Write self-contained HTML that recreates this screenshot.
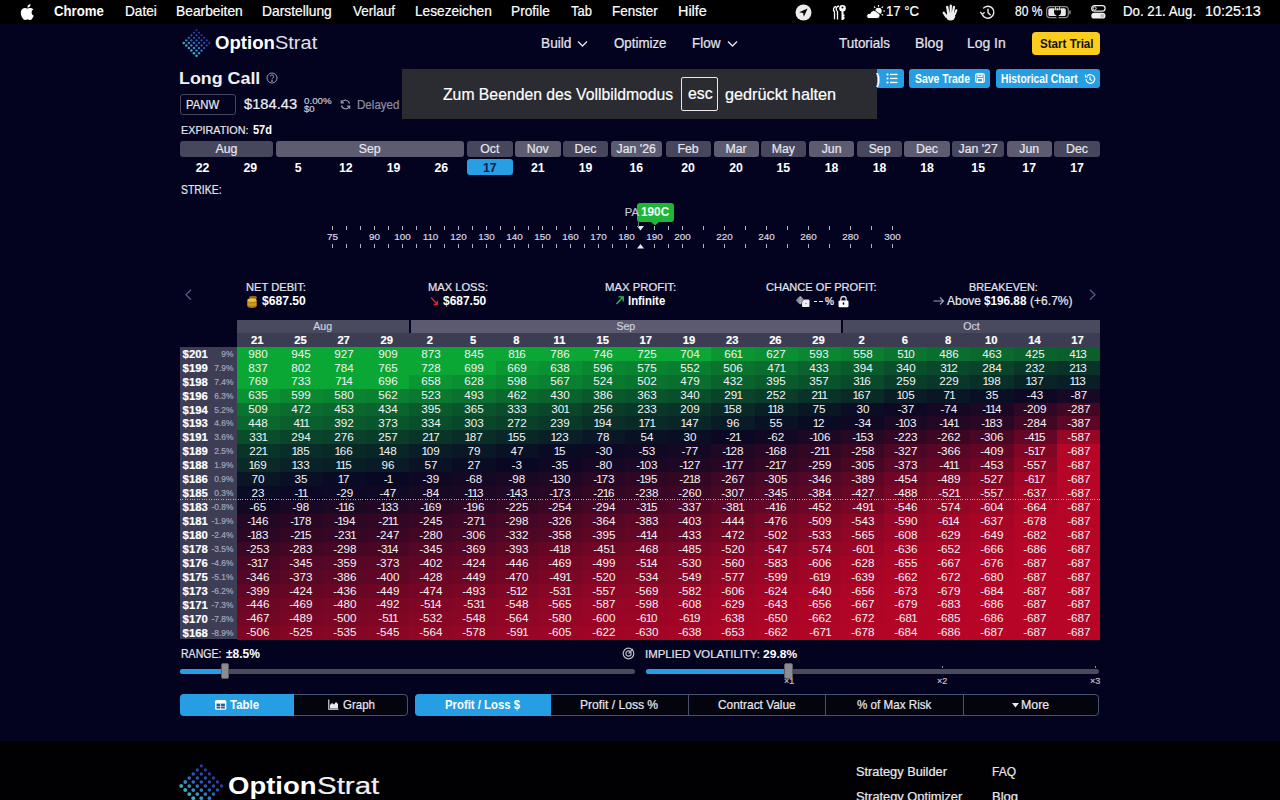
<!DOCTYPE html>
<html><head><meta charset="utf-8"><title>OptionStrat</title>
<style>
html,body{margin:0;padding:0;width:1280px;height:800px;overflow:hidden;background:rgb(3,3,32);font-family:'Liberation Sans', sans-serif;}
.t{position:absolute;white-space:nowrap;line-height:1;-webkit-text-stroke:0.2px currentColor;}
.b{-webkit-text-stroke:0 !important;}
.c{position:absolute;white-space:nowrap;text-align:center;-webkit-text-stroke:0.2px currentColor;}
.cell{position:absolute;}
</style></head><body>
<div style="position:absolute;left:0px;top:0px;width:1280px;height:24px;background:#000;"></div>
<svg style="position:absolute;left:20px;top:4px" width="14" height="16" viewBox="0 0 14 16"><path fill="#fff" d="M11.6 8.5c0-2 1.6-2.9 1.7-3-0.9-1.4-2.4-1.5-2.9-1.6-1.2-0.1-2.4 0.7-3 0.7-0.6 0-1.6-0.7-2.6-0.7C3.500 3.900 2.200 4.700 1.500 6c-1.400 2.400-0.400 6 1 8 0.700 1 1.500 2 2.500 2 1 0 1.400-0.600 2.600-0.600 1.200 0 1.500 0.600 2.600 0.600 1.100 0 1.800-1 2.400-2 0.800-1.100 1.100-2.200 1.100-2.300 0 0-2.100-0.800-2.100-3.200zM9.700 2.600C10.200 2 10.600 1.100 10.500 0.200 9.700 0.200 8.800 0.700 8.200 1.300 7.700 1.900 7.300 2.800 7.400 3.600c0.900 0.100 1.800-0.400 2.300-1z"/></svg>
<svg style="position:absolute;left:795px;top:4px" width="17" height="17" viewBox="0 0 17 17"><circle cx="8.5" cy="8.5" r="8" fill="#ececec"/><path d="M4.2 8.2 L12.6 4.4 L8.8 12.8 L8.1 8.9 Z" fill="#000"/></svg>
<svg style="position:absolute;left:832px;top:4px" width="16" height="17" viewBox="0 0 16 17" fill="none" stroke="#fff" stroke-width="1.3"><path d="M4 2.5a3 3 0 0 0-1.5 5.2v7.5"/><path d="M7 2a3 3 0 0 0-1.5 5.5v8"/><circle cx="10.5" cy="4.3" r="3.3" fill="#fff" stroke="none"/><circle cx="10.5" cy="3.6" r="1" fill="#000" stroke="none"/><path d="M10.5 7v9M10.5 11.5h2M10.5 14h2" stroke-width="2"/></svg>
<svg style="position:absolute;left:866px;top:4px" width="20" height="16" viewBox="0 0 20 16"><circle cx="12.5" cy="7" r="3.2" fill="#fff"/><path d="M12.5 1v1.8M17 2.6l-1.3 1.3M19 7h-1.8M17 11.4l-1.3-1.3M8 2.6l1.3 1.3" stroke="#fff" stroke-width="1.2"/><path d="M2.5 14.5h8.5a2.9 2.9 0 0 0 0.3-5.8 3.8 3.8 0 0 0-7.2 0.8 2.6 2.6 0 0 0-1.6 5z" fill="#fff" stroke="#000" stroke-width="0.9"/></svg>
<svg style="position:absolute;left:942px;top:3.5px" width="16" height="17" viewBox="0 0 16 17" fill="none" stroke="#eee" stroke-linecap="round"><path d="M4.3 12.5L1.8 8.8" stroke-width="2.4"/><path d="M6.2 9L5.2 2.8" stroke-width="2.3"/><path d="M8.6 9L8.8 1.6" stroke-width="2.3"/><path d="M10.8 9.2L12 2.8" stroke-width="2.3"/><path d="M12.6 10.4L14.3 6.3" stroke-width="2.2"/><ellipse cx="8.6" cy="12.3" rx="4.6" ry="4.1" fill="#eee" stroke="none"/></svg>
<svg style="position:absolute;left:979px;top:5px" width="17" height="15" viewBox="0 0 17 15" fill="none" stroke="#eee" stroke-width="1.4"><path d="M3.2 9.2A6 6 0 1 0 4.2 3.4"/><path d="M1.3 6.8l1.9 2.6 2.4-2.2" stroke-width="1.3"/><path d="M9 3.8v4l2.6 2.4"/></svg>
<svg style="position:absolute;left:1046px;top:6px" width="27" height="13" viewBox="0 0 27 13"><rect x="0.7" y="0.7" width="21.6" height="11" rx="3.2" fill="none" stroke="#8a8a8a" stroke-width="1.2"/><rect x="2.3" y="2.3" width="17.5" height="7.8" rx="1.6" fill="#e8e8e8"/><rect x="23.2" y="4.2" width="1.6" height="4" rx="0.8" fill="#8a8a8a"/><path d="M9.5 1v3M13.5 1v3" stroke="#000" stroke-width="1.8"/><path d="M8 4.3h7v1.8a3.5 3.5 0 0 1-7 0z" fill="#000"/><path d="M11.5 8.5v4" stroke="#000" stroke-width="2.2"/><path d="M9.5 1v3M13.5 1v3" stroke="#fff" stroke-width="0.8"/></svg>
<svg style="position:absolute;left:1091px;top:5px" width="15" height="14" viewBox="0 0 15 14"><rect x="0.7" y="0.7" width="13.4" height="5.4" rx="2.7" fill="none" stroke="#eee" stroke-width="1.2"/><circle cx="3.6" cy="3.4" r="1.6" fill="none" stroke="#eee" stroke-width="1"/><rect x="0.3" y="7.8" width="14.2" height="5.8" rx="2.9" fill="#eee"/><circle cx="11.3" cy="10.7" r="1.9" fill="#bbb"/></svg>
<svg style="position:absolute;left:183px;top:28.8px;overflow:visible;transform:scale(1.0);transform-origin:0 0" width="27" height="27" viewBox="0 0 27 27"><circle cx="13.50" cy="1.20" r="1.04" fill="rgb(69,78,220)" fill-opacity="0.70"/><circle cx="10.95" cy="3.75" r="1.08" fill="rgb(64,95,225)" fill-opacity="0.74"/><circle cx="8.40" cy="6.30" r="1.12" fill="rgb(59,112,231)" fill-opacity="0.79"/><circle cx="5.85" cy="8.85" r="1.16" fill="rgb(56,130,232)" fill-opacity="0.83"/><circle cx="3.30" cy="11.40" r="1.20" fill="rgb(62,153,219)" fill-opacity="0.88"/><circle cx="0.75" cy="13.95" r="1.24" fill="rgb(69,176,206)" fill-opacity="0.93"/><circle cx="16.05" cy="3.75" r="1.05" fill="rgb(68,80,221)" fill-opacity="0.71"/><circle cx="13.50" cy="6.30" r="1.09" fill="rgb(63,97,226)" fill-opacity="0.75"/><circle cx="10.95" cy="8.85" r="1.12" fill="rgb(58,113,231)" fill-opacity="0.80"/><circle cx="8.40" cy="11.40" r="1.16" fill="rgb(57,132,230)" fill-opacity="0.84"/><circle cx="5.85" cy="13.95" r="1.20" fill="rgb(63,155,217)" fill-opacity="0.89"/><circle cx="3.30" cy="16.50" r="1.24" fill="rgb(70,179,205)" fill-opacity="0.93"/><circle cx="18.60" cy="6.30" r="1.05" fill="rgb(68,82,221)" fill-opacity="0.71"/><circle cx="16.05" cy="8.85" r="1.09" fill="rgb(63,99,227)" fill-opacity="0.76"/><circle cx="13.50" cy="11.40" r="1.13" fill="rgb(57,115,232)" fill-opacity="0.80"/><circle cx="10.95" cy="13.95" r="1.17" fill="rgb(57,135,229)" fill-opacity="0.84"/><circle cx="8.40" cy="16.50" r="1.21" fill="rgb(64,158,216)" fill-opacity="0.89"/><circle cx="5.85" cy="19.05" r="1.24" fill="rgb(70,181,203)" fill-opacity="0.94"/><circle cx="21.15" cy="8.85" r="1.06" fill="rgb(67,84,222)" fill-opacity="0.71"/><circle cx="18.60" cy="11.40" r="1.09" fill="rgb(62,100,227)" fill-opacity="0.76"/><circle cx="16.05" cy="13.95" r="1.13" fill="rgb(57,117,232)" fill-opacity="0.81"/><circle cx="13.50" cy="16.50" r="1.17" fill="rgb(58,137,227)" fill-opacity="0.85"/><circle cx="10.95" cy="19.05" r="1.21" fill="rgb(65,161,215)" fill-opacity="0.90"/><circle cx="8.40" cy="21.60" r="1.25" fill="rgb(71,184,202)" fill-opacity="0.94"/><circle cx="23.70" cy="11.40" r="1.06" fill="rgb(67,86,223)" fill-opacity="0.72"/><circle cx="21.15" cy="13.95" r="1.10" fill="rgb(61,102,228)" fill-opacity="0.77"/><circle cx="18.60" cy="16.50" r="1.14" fill="rgb(56,119,233)" fill-opacity="0.81"/><circle cx="16.05" cy="19.05" r="1.18" fill="rgb(59,140,226)" fill-opacity="0.85"/><circle cx="13.50" cy="21.60" r="1.21" fill="rgb(65,163,213)" fill-opacity="0.90"/><circle cx="10.95" cy="24.15" r="1.25" fill="rgb(72,186,200)" fill-opacity="0.95"/><circle cx="26.25" cy="13.95" r="1.06" fill="rgb(66,87,223)" fill-opacity="0.72"/><circle cx="23.70" cy="16.50" r="1.10" fill="rgb(61,104,228)" fill-opacity="0.77"/><circle cx="21.15" cy="19.05" r="1.14" fill="rgb(56,121,233)" fill-opacity="0.81"/><circle cx="18.60" cy="21.60" r="1.18" fill="rgb(60,143,225)" fill-opacity="0.86"/><circle cx="16.05" cy="24.15" r="1.22" fill="rgb(66,166,212)" fill-opacity="0.91"/><circle cx="13.50" cy="26.70" r="1.26" fill="rgb(72,189,199)" fill-opacity="0.95"/></svg>
<svg style="position:absolute;left:577px;top:40px" width="11" height="8" viewBox="0 0 11 8"><path d="M1 1.5l4.5 4.5 4.5-4.5" fill="none" stroke="#e4e4ec" stroke-width="1.4"/></svg>
<svg style="position:absolute;left:726.7px;top:40px" width="11" height="8" viewBox="0 0 11 8"><path d="M1 1.5l4.5 4.5 4.5-4.5" fill="none" stroke="#e4e4ec" stroke-width="1.4"/></svg>
<div style="position:absolute;left:1031.5px;top:32px;width:68.5px;height:23px;background:#facd1e;border-radius:4px"></div>
<svg style="position:absolute;left:265.5px;top:72px" width="12" height="12" viewBox="0 0 12 12" fill="none" stroke="#9a9aac" stroke-width="1"><circle cx="6" cy="6" r="5"/><path d="M4.3 4.6a1.7 1.7 0 1 1 2.3 1.6c-.4.2-.6.5-.6.9v.4" /><circle cx="6" cy="9" r=".5" fill="#9a9aac"/></svg>
<div style="position:absolute;left:180px;top:94px;width:55.5px;height:21px;background:transparent;box-sizing:border-box;border:1px solid #45455c;border-radius:3px"></div>
<svg style="position:absolute;left:340px;top:99px" width="11" height="11" viewBox="0 0 11 11" fill="none" stroke="#9a9aac" stroke-width="1.2"><path d="M9.5 4.5A4.2 4.2 0 0 0 1.6 3.6M1.5 6.5a4.2 4.2 0 0 0 7.9 0.9"/><path d="M1.3 1.2v2.6h2.6M9.7 9.8V7.2H7.1"/></svg>
<div style="position:absolute;left:862px;top:69px;width:41.5px;height:19px;background:rgb(38,158,228);border-radius:3px"></div>
<svg style="position:absolute;left:886px;top:73px" width="12" height="11" viewBox="0 0 12 11" fill="#fff"><circle cx="1.5" cy="1.5" r="1.1"/><circle cx="1.5" cy="5.5" r="1.1"/><circle cx="1.5" cy="9.5" r="1.1"/><rect x="4" y="0.8" width="7.5" height="1.3"/><rect x="4" y="4.8" width="7.5" height="1.3"/><rect x="4" y="8.8" width="7.5" height="1.3"/></svg>
<div style="position:absolute;left:909px;top:69px;width:81px;height:19px;background:rgb(38,158,228);border-radius:3px"></div>
<svg style="position:absolute;left:975px;top:73px" width="10" height="10" viewBox="0 0 10 10" fill="none" stroke="#fff" stroke-width="1.2"><rect x="0.8" y="0.8" width="8.4" height="8.4" rx="1"/><rect x="3" y="0.8" width="4" height="2.6"/><rect x="2.5" y="5.5" width="5" height="3.7"/></svg>
<div style="position:absolute;left:995.5px;top:69px;width:104.5px;height:19px;background:rgb(38,158,228);border-radius:3px"></div>
<svg style="position:absolute;left:1084px;top:73px" width="12" height="12" viewBox="0 0 12 12" fill="none" stroke="#fff" stroke-width="1.2"><path d="M2 6a4.3 4.3 0 1 0 1.3-3.1"/><path d="M1.5 1.5v2.5h2.5"/><path d="M6 3.5v3l2 1"/></svg>
<div style="position:absolute;left:401.5px;top:69px;width:475.0px;height:50px;background:#2b2c31;"></div>
<div style="position:absolute;left:681px;top:77px;width:37px;height:33.5px;background:transparent;box-sizing:border-box;border:1px solid #e8e8ea;border-radius:2px"></div>
<div style="position:absolute;left:180px;top:141px;width:93px;height:16px;background:#46465c;border-radius:3px"></div>
<div class="c" style="left:180px;width:93px;top:141px;height:16px;line-height:16.6px;font-size:12.3px;color:#e6e6ee">Aug</div>
<div class="c b" style="left:180.0px;width:45.25px;top:159px;height:16px;line-height:18.5px;font-size:12.3px;font-weight:bold;color:#fff">22</div>
<div class="c b" style="left:227.75px;width:45.25px;top:159px;height:16px;line-height:18.5px;font-size:12.3px;font-weight:bold;color:#fff">29</div>
<div style="position:absolute;left:275.5px;top:141px;width:188.5px;height:16px;background:#5c5b70;border-radius:3px"></div>
<div class="c" style="left:275.5px;width:188.5px;top:141px;height:16px;line-height:16.6px;font-size:12.3px;color:#e6e6ee">Sep</div>
<div class="c b" style="left:275.5px;width:45.25px;top:159px;height:16px;line-height:18.5px;font-size:12.3px;font-weight:bold;color:#fff">5</div>
<div class="c b" style="left:323.25px;width:45.25px;top:159px;height:16px;line-height:18.5px;font-size:12.3px;font-weight:bold;color:#fff">12</div>
<div class="c b" style="left:371.0px;width:45.25px;top:159px;height:16px;line-height:18.5px;font-size:12.3px;font-weight:bold;color:#fff">19</div>
<div class="c b" style="left:418.75px;width:45.25px;top:159px;height:16px;line-height:18.5px;font-size:12.3px;font-weight:bold;color:#fff">26</div>
<div style="position:absolute;left:467px;top:141px;width:45.5px;height:16px;background:#46465c;border-radius:3px"></div>
<div class="c" style="left:467px;width:45.5px;top:141px;height:16px;line-height:16.6px;font-size:12.3px;color:#e6e6ee">Oct</div>
<div style="position:absolute;left:467.0px;top:159px;width:45.5px;height:16px;background:rgb(40,158,228);border-radius:3px"></div>
<div class="c b" style="left:467.0px;width:45.5px;top:159px;height:16px;line-height:18.5px;font-size:12.3px;font-weight:bold;color:#0c1c4a">17</div>
<div style="position:absolute;left:515px;top:141px;width:45.5px;height:16px;background:#5c5b70;border-radius:3px"></div>
<div class="c" style="left:515px;width:45.5px;top:141px;height:16px;line-height:16.6px;font-size:12.3px;color:#e6e6ee">Nov</div>
<div class="c b" style="left:515.0px;width:45.5px;top:159px;height:16px;line-height:18.5px;font-size:12.3px;font-weight:bold;color:#fff">21</div>
<div style="position:absolute;left:563px;top:141px;width:45px;height:16px;background:#46465c;border-radius:3px"></div>
<div class="c" style="left:563px;width:45px;top:141px;height:16px;line-height:16.6px;font-size:12.3px;color:#e6e6ee">Dec</div>
<div class="c b" style="left:563.0px;width:45.0px;top:159px;height:16px;line-height:18.5px;font-size:12.3px;font-weight:bold;color:#fff">19</div>
<div style="position:absolute;left:611px;top:141px;width:50.5px;height:16px;background:#5c5b70;border-radius:3px"></div>
<div class="c" style="left:611px;width:50.5px;top:141px;height:16px;line-height:16.6px;font-size:12.3px;color:#e6e6ee">Jan '26</div>
<div class="c b" style="left:611.0px;width:50.5px;top:159px;height:16px;line-height:18.5px;font-size:12.3px;font-weight:bold;color:#fff">16</div>
<div style="position:absolute;left:665.5px;top:141px;width:45.0px;height:16px;background:#46465c;border-radius:3px"></div>
<div class="c" style="left:665.5px;width:45.0px;top:141px;height:16px;line-height:16.6px;font-size:12.3px;color:#e6e6ee">Feb</div>
<div class="c b" style="left:665.5px;width:45.0px;top:159px;height:16px;line-height:18.5px;font-size:12.3px;font-weight:bold;color:#fff">20</div>
<div style="position:absolute;left:713.5px;top:141px;width:45.0px;height:16px;background:#5c5b70;border-radius:3px"></div>
<div class="c" style="left:713.5px;width:45.0px;top:141px;height:16px;line-height:16.6px;font-size:12.3px;color:#e6e6ee">Mar</div>
<div class="c b" style="left:713.5px;width:45.0px;top:159px;height:16px;line-height:18.5px;font-size:12.3px;font-weight:bold;color:#fff">20</div>
<div style="position:absolute;left:760.7px;top:141px;width:45.299999999999955px;height:16px;background:#46465c;border-radius:3px"></div>
<div class="c" style="left:760.7px;width:45.299999999999955px;top:141px;height:16px;line-height:16.6px;font-size:12.3px;color:#e6e6ee">May</div>
<div class="c b" style="left:760.7px;width:45.299999999999955px;top:159px;height:16px;line-height:18.5px;font-size:12.3px;font-weight:bold;color:#fff">15</div>
<div style="position:absolute;left:808.7px;top:141px;width:45.799999999999955px;height:16px;background:#5c5b70;border-radius:3px"></div>
<div class="c" style="left:808.7px;width:45.799999999999955px;top:141px;height:16px;line-height:16.6px;font-size:12.3px;color:#e6e6ee">Jun</div>
<div class="c b" style="left:808.7px;width:45.799999999999955px;top:159px;height:16px;line-height:18.5px;font-size:12.3px;font-weight:bold;color:#fff">18</div>
<div style="position:absolute;left:856.7px;top:141px;width:45.799999999999955px;height:16px;background:#46465c;border-radius:3px"></div>
<div class="c" style="left:856.7px;width:45.799999999999955px;top:141px;height:16px;line-height:16.6px;font-size:12.3px;color:#e6e6ee">Sep</div>
<div class="c b" style="left:856.7px;width:45.799999999999955px;top:159px;height:16px;line-height:18.5px;font-size:12.3px;font-weight:bold;color:#fff">18</div>
<div style="position:absolute;left:904.3px;top:141px;width:45.40000000000009px;height:16px;background:#5c5b70;border-radius:3px"></div>
<div class="c" style="left:904.3px;width:45.40000000000009px;top:141px;height:16px;line-height:16.6px;font-size:12.3px;color:#e6e6ee">Dec</div>
<div class="c b" style="left:904.3px;width:45.40000000000009px;top:159px;height:16px;line-height:18.5px;font-size:12.3px;font-weight:bold;color:#fff">18</div>
<div style="position:absolute;left:952.3px;top:141px;width:51.700000000000045px;height:16px;background:#46465c;border-radius:3px"></div>
<div class="c" style="left:952.3px;width:51.700000000000045px;top:141px;height:16px;line-height:16.6px;font-size:12.3px;color:#e6e6ee">Jan '27</div>
<div class="c b" style="left:952.3px;width:51.700000000000045px;top:159px;height:16px;line-height:18.5px;font-size:12.3px;font-weight:bold;color:#fff">15</div>
<div style="position:absolute;left:1006.7px;top:141px;width:45.0px;height:16px;background:#5c5b70;border-radius:3px"></div>
<div class="c" style="left:1006.7px;width:45.0px;top:141px;height:16px;line-height:16.6px;font-size:12.3px;color:#e6e6ee">Jun</div>
<div class="c b" style="left:1006.7px;width:45.0px;top:159px;height:16px;line-height:18.5px;font-size:12.3px;font-weight:bold;color:#fff">17</div>
<div style="position:absolute;left:1054.3px;top:141px;width:45.40000000000009px;height:16px;background:#46465c;border-radius:3px"></div>
<div class="c" style="left:1054.3px;width:45.40000000000009px;top:141px;height:16px;line-height:16.6px;font-size:12.3px;color:#e6e6ee">Dec</div>
<div class="c b" style="left:1054.3px;width:45.40000000000009px;top:159px;height:16px;line-height:18.5px;font-size:12.3px;font-weight:bold;color:#fff">17</div>
<div style="position:absolute;left:332px;top:226.3px;width:1.1999999999999886px;height:4.0px;background:#b4b4c4;"></div>
<div style="position:absolute;left:332px;top:243.7px;width:1.1999999999999886px;height:4.0px;background:#b4b4c4;"></div>
<div style="position:absolute;left:346px;top:226.3px;width:1.1999999999999886px;height:4.0px;background:#b4b4c4;"></div>
<div style="position:absolute;left:346px;top:243.7px;width:1.1999999999999886px;height:4.0px;background:#b4b4c4;"></div>
<div style="position:absolute;left:360px;top:226.3px;width:1.1999999999999886px;height:4.0px;background:#b4b4c4;"></div>
<div style="position:absolute;left:360px;top:243.7px;width:1.1999999999999886px;height:4.0px;background:#b4b4c4;"></div>
<div style="position:absolute;left:374px;top:226.3px;width:1.1999999999999886px;height:4.0px;background:#b4b4c4;"></div>
<div style="position:absolute;left:374px;top:243.7px;width:1.1999999999999886px;height:4.0px;background:#b4b4c4;"></div>
<div style="position:absolute;left:388px;top:226.3px;width:1.1999999999999886px;height:4.0px;background:#b4b4c4;"></div>
<div style="position:absolute;left:388px;top:243.7px;width:1.1999999999999886px;height:4.0px;background:#b4b4c4;"></div>
<div style="position:absolute;left:402px;top:226.3px;width:1.1999999999999886px;height:4.0px;background:#b4b4c4;"></div>
<div style="position:absolute;left:402px;top:243.7px;width:1.1999999999999886px;height:4.0px;background:#b4b4c4;"></div>
<div style="position:absolute;left:416px;top:226.3px;width:1.1999999999999886px;height:4.0px;background:#b4b4c4;"></div>
<div style="position:absolute;left:416px;top:243.7px;width:1.1999999999999886px;height:4.0px;background:#b4b4c4;"></div>
<div style="position:absolute;left:430px;top:226.3px;width:1.1999999999999886px;height:4.0px;background:#b4b4c4;"></div>
<div style="position:absolute;left:430px;top:243.7px;width:1.1999999999999886px;height:4.0px;background:#b4b4c4;"></div>
<div style="position:absolute;left:444px;top:226.3px;width:1.1999999999999886px;height:4.0px;background:#b4b4c4;"></div>
<div style="position:absolute;left:444px;top:243.7px;width:1.1999999999999886px;height:4.0px;background:#b4b4c4;"></div>
<div style="position:absolute;left:458px;top:226.3px;width:1.1999999999999886px;height:4.0px;background:#b4b4c4;"></div>
<div style="position:absolute;left:458px;top:243.7px;width:1.1999999999999886px;height:4.0px;background:#b4b4c4;"></div>
<div style="position:absolute;left:472px;top:226.3px;width:1.1999999999999886px;height:4.0px;background:#b4b4c4;"></div>
<div style="position:absolute;left:472px;top:243.7px;width:1.1999999999999886px;height:4.0px;background:#b4b4c4;"></div>
<div style="position:absolute;left:486px;top:226.3px;width:1.1999999999999886px;height:4.0px;background:#b4b4c4;"></div>
<div style="position:absolute;left:486px;top:243.7px;width:1.1999999999999886px;height:4.0px;background:#b4b4c4;"></div>
<div style="position:absolute;left:500px;top:226.3px;width:1.1999999999999886px;height:4.0px;background:#b4b4c4;"></div>
<div style="position:absolute;left:500px;top:243.7px;width:1.1999999999999886px;height:4.0px;background:#b4b4c4;"></div>
<div style="position:absolute;left:514px;top:226.3px;width:1.2000000000000455px;height:4.0px;background:#b4b4c4;"></div>
<div style="position:absolute;left:514px;top:243.7px;width:1.2000000000000455px;height:4.0px;background:#b4b4c4;"></div>
<div style="position:absolute;left:528px;top:226.3px;width:1.2000000000000455px;height:4.0px;background:#b4b4c4;"></div>
<div style="position:absolute;left:528px;top:243.7px;width:1.2000000000000455px;height:4.0px;background:#b4b4c4;"></div>
<div style="position:absolute;left:542px;top:226.3px;width:1.2000000000000455px;height:4.0px;background:#b4b4c4;"></div>
<div style="position:absolute;left:542px;top:243.7px;width:1.2000000000000455px;height:4.0px;background:#b4b4c4;"></div>
<div style="position:absolute;left:556px;top:226.3px;width:1.2000000000000455px;height:4.0px;background:#b4b4c4;"></div>
<div style="position:absolute;left:556px;top:243.7px;width:1.2000000000000455px;height:4.0px;background:#b4b4c4;"></div>
<div style="position:absolute;left:570px;top:226.3px;width:1.2000000000000455px;height:4.0px;background:#b4b4c4;"></div>
<div style="position:absolute;left:570px;top:243.7px;width:1.2000000000000455px;height:4.0px;background:#b4b4c4;"></div>
<div style="position:absolute;left:584px;top:226.3px;width:1.2000000000000455px;height:4.0px;background:#b4b4c4;"></div>
<div style="position:absolute;left:584px;top:243.7px;width:1.2000000000000455px;height:4.0px;background:#b4b4c4;"></div>
<div style="position:absolute;left:598px;top:226.3px;width:1.2000000000000455px;height:4.0px;background:#b4b4c4;"></div>
<div style="position:absolute;left:598px;top:243.7px;width:1.2000000000000455px;height:4.0px;background:#b4b4c4;"></div>
<div style="position:absolute;left:612px;top:226.3px;width:1.2000000000000455px;height:4.0px;background:#b4b4c4;"></div>
<div style="position:absolute;left:612px;top:243.7px;width:1.2000000000000455px;height:4.0px;background:#b4b4c4;"></div>
<div style="position:absolute;left:626px;top:226.3px;width:1.2000000000000455px;height:4.0px;background:#b4b4c4;"></div>
<div style="position:absolute;left:626px;top:243.7px;width:1.2000000000000455px;height:4.0px;background:#b4b4c4;"></div>
<div style="position:absolute;left:654px;top:226.3px;width:1.2000000000000455px;height:4.0px;background:#b4b4c4;"></div>
<div style="position:absolute;left:654px;top:243.7px;width:1.2000000000000455px;height:4.0px;background:#b4b4c4;"></div>
<div style="position:absolute;left:668px;top:226.3px;width:1.2000000000000455px;height:4.0px;background:#b4b4c4;"></div>
<div style="position:absolute;left:668px;top:243.7px;width:1.2000000000000455px;height:4.0px;background:#b4b4c4;"></div>
<div style="position:absolute;left:682px;top:226.3px;width:1.2000000000000455px;height:4.0px;background:#b4b4c4;"></div>
<div style="position:absolute;left:682px;top:243.7px;width:1.2000000000000455px;height:4.0px;background:#b4b4c4;"></div>
<div style="position:absolute;left:703px;top:226.3px;width:1.2000000000000455px;height:4.0px;background:#b4b4c4;"></div>
<div style="position:absolute;left:703px;top:243.7px;width:1.2000000000000455px;height:4.0px;background:#b4b4c4;"></div>
<div style="position:absolute;left:724px;top:226.3px;width:1.2000000000000455px;height:4.0px;background:#b4b4c4;"></div>
<div style="position:absolute;left:724px;top:243.7px;width:1.2000000000000455px;height:4.0px;background:#b4b4c4;"></div>
<div style="position:absolute;left:745px;top:226.3px;width:1.2000000000000455px;height:4.0px;background:#b4b4c4;"></div>
<div style="position:absolute;left:745px;top:243.7px;width:1.2000000000000455px;height:4.0px;background:#b4b4c4;"></div>
<div style="position:absolute;left:766px;top:226.3px;width:1.2000000000000455px;height:4.0px;background:#b4b4c4;"></div>
<div style="position:absolute;left:766px;top:243.7px;width:1.2000000000000455px;height:4.0px;background:#b4b4c4;"></div>
<div style="position:absolute;left:787px;top:226.3px;width:1.2000000000000455px;height:4.0px;background:#b4b4c4;"></div>
<div style="position:absolute;left:787px;top:243.7px;width:1.2000000000000455px;height:4.0px;background:#b4b4c4;"></div>
<div style="position:absolute;left:808px;top:226.3px;width:1.2000000000000455px;height:4.0px;background:#b4b4c4;"></div>
<div style="position:absolute;left:808px;top:243.7px;width:1.2000000000000455px;height:4.0px;background:#b4b4c4;"></div>
<div style="position:absolute;left:829px;top:226.3px;width:1.2000000000000455px;height:4.0px;background:#b4b4c4;"></div>
<div style="position:absolute;left:829px;top:243.7px;width:1.2000000000000455px;height:4.0px;background:#b4b4c4;"></div>
<div style="position:absolute;left:850px;top:226.3px;width:1.2000000000000455px;height:4.0px;background:#b4b4c4;"></div>
<div style="position:absolute;left:850px;top:243.7px;width:1.2000000000000455px;height:4.0px;background:#b4b4c4;"></div>
<div style="position:absolute;left:871px;top:226.3px;width:1.2000000000000455px;height:4.0px;background:#b4b4c4;"></div>
<div style="position:absolute;left:871px;top:243.7px;width:1.2000000000000455px;height:4.0px;background:#b4b4c4;"></div>
<div style="position:absolute;left:892px;top:226.3px;width:1.2000000000000455px;height:4.0px;background:#b4b4c4;"></div>
<div style="position:absolute;left:892px;top:243.7px;width:1.2000000000000455px;height:4.0px;background:#b4b4c4;"></div>
<div class="c" style="left:312.5px;width:40px;top:231.985px;font-size:9.9px;line-height:1;color:#d8d8e2">75</div>
<div class="c" style="left:354.5px;width:40px;top:231.985px;font-size:9.9px;line-height:1;color:#d8d8e2">90</div>
<div class="c" style="left:382.5px;width:40px;top:231.985px;font-size:9.9px;line-height:1;color:#d8d8e2">100</div>
<div class="c" style="left:410.5px;width:40px;top:231.985px;font-size:9.9px;line-height:1;color:#d8d8e2">110</div>
<div class="c" style="left:438.5px;width:40px;top:231.985px;font-size:9.9px;line-height:1;color:#d8d8e2">120</div>
<div class="c" style="left:466.5px;width:40px;top:231.985px;font-size:9.9px;line-height:1;color:#d8d8e2">130</div>
<div class="c" style="left:494.5px;width:40px;top:231.985px;font-size:9.9px;line-height:1;color:#d8d8e2">140</div>
<div class="c" style="left:522.5px;width:40px;top:231.985px;font-size:9.9px;line-height:1;color:#d8d8e2">150</div>
<div class="c" style="left:550.5px;width:40px;top:231.985px;font-size:9.9px;line-height:1;color:#d8d8e2">160</div>
<div class="c" style="left:578.5px;width:40px;top:231.985px;font-size:9.9px;line-height:1;color:#d8d8e2">170</div>
<div class="c" style="left:606.5px;width:40px;top:231.985px;font-size:9.9px;line-height:1;color:#d8d8e2">180</div>
<div class="c" style="left:634.5px;width:40px;top:231.985px;font-size:9.9px;line-height:1;color:#d8d8e2">190</div>
<div class="c" style="left:662.5px;width:40px;top:231.985px;font-size:9.9px;line-height:1;color:#d8d8e2">200</div>
<div class="c" style="left:704.5px;width:40px;top:231.985px;font-size:9.9px;line-height:1;color:#d8d8e2">220</div>
<div class="c" style="left:746.5px;width:40px;top:231.985px;font-size:9.9px;line-height:1;color:#d8d8e2">240</div>
<div class="c" style="left:788.5px;width:40px;top:231.985px;font-size:9.9px;line-height:1;color:#d8d8e2">260</div>
<div class="c" style="left:830.5px;width:40px;top:231.985px;font-size:9.9px;line-height:1;color:#d8d8e2">280</div>
<div class="c" style="left:872.5px;width:40px;top:231.985px;font-size:9.9px;line-height:1;color:#d8d8e2">300</div>
<svg style="position:absolute;left:636.8px;top:226px" width="7" height="5" viewBox="0 0 7 5"><path d="M0 0h7L3.5 4.5z" fill="#e8e8f0"/></svg>
<svg style="position:absolute;left:636.8px;top:243.5px" width="7" height="5" viewBox="0 0 7 5"><path d="M0 4.5h7L3.5 0z" fill="#e8e8f0"/></svg>
<div style="position:absolute;left:638px;top:217px;width:1px;height:10px;background:#6a6a7a;"></div>
<div style="position:absolute;left:636.5px;top:203px;width:37.0px;height:19px;background:#1fb53a;border-radius:3px"></div>
<svg style="position:absolute;left:650.5px;top:221.5px" width="8" height="3.5" viewBox="0 0 8 3.5"><path d="M0 0h8L4 3.5z" fill="#1fb53a"/></svg>
<svg style="position:absolute;left:245.5px;top:294.5px" width="13" height="13" viewBox="0 0 13 13"><ellipse cx="7" cy="2.6" rx="4" ry="1.9" fill="#8a6a18"/><ellipse cx="6" cy="11" rx="4.6" ry="1.9" fill="#a87c10"/><rect x="1.4" y="5" width="9.2" height="6" fill="#c8961a"/><ellipse cx="6" cy="9" rx="4.6" ry="1.7" fill="#e0b030"/><ellipse cx="6" cy="7" rx="4.6" ry="1.7" fill="#c8961a"/><ellipse cx="6" cy="5" rx="4.6" ry="1.8" fill="#f0c040"/><path d="M1.5 8h9M1.5 10h9" stroke="#9a7010" stroke-width="0.6"/></svg>
<svg style="position:absolute;left:430px;top:296px" width="9" height="10" viewBox="0 0 9 10" fill="none" stroke="#e0203a" stroke-width="1.3"><path d="M1 1.5l6 6.5M3.5 8.5H7.3V4.7"/></svg>
<svg style="position:absolute;left:615px;top:295px" width="10" height="10" viewBox="0 0 10 10" fill="none" stroke="#2ec050" stroke-width="1.3"><path d="M1.5 9L8 2M3.5 1.8H8.2V6.5"/></svg>
<svg style="position:absolute;left:795px;top:295px" width="15" height="13" viewBox="0 0 15 13"><rect x="2" y="2" width="6.5" height="6.5" rx="1.2" transform="rotate(45 5.25 5.25)" fill="#8e8e9c"/><circle cx="5.25" cy="2.8" r="0.7" fill="#c8c8d4"/><circle cx="5.25" cy="5.25" r="0.7" fill="#c8c8d4"/><circle cx="5.25" cy="7.7" r="0.7" fill="#c8c8d4"/><path d="M9.5 4.5h4a1 1 0 0 1 1 1v5.5a1 1 0 0 1-1 1h-5.5a1 1 0 0 1-1-1v-3.5z" fill="#eeeef2"/><circle cx="11" cy="8.5" r="0.6" fill="#555"/></svg>
<div style="position:absolute;left:814px;top:300.6px;width:3.2000000000000455px;height:1.3999999999999773px;background:#f0f0f4;"></div>
<div style="position:absolute;left:819.2px;top:300.6px;width:4.199999999999932px;height:1.3999999999999773px;background:#f0f0f4;"></div>
<svg style="position:absolute;left:838px;top:295px" width="11" height="12.5" viewBox="0 0 11 12.5"><path d="M2.8 6V4.2a2.7 2.7 0 0 1 5.4 0V6" fill="none" stroke="#d8d8e0" stroke-width="1.3"/><rect x="0.5" y="5.6" width="10" height="6.6" rx="1.2" fill="#fff"/><ellipse cx="5.5" cy="8.6" rx="0.8" ry="1.3" fill="#000"/></svg>
<svg style="position:absolute;left:932.5px;top:296px" width="12" height="10" viewBox="0 0 12 10" fill="none" stroke="#a0a0b0" stroke-width="1.2"><path d="M0.5 5h10M7 1.5L10.5 5 7 8.5"/></svg>
<svg style="position:absolute;left:184.5px;top:289px" width="7" height="12" viewBox="0 0 7 12" fill="none" stroke="#5a5a78" stroke-width="1.3"><path d="M6 0.8L1 5.8l5 5"/></svg>
<svg style="position:absolute;left:1088.5px;top:289px" width="7" height="12" viewBox="0 0 7 12" fill="none" stroke="#5a5a78" stroke-width="1.3"><path d="M1 0.8l5 5-5 5"/></svg>
<div style="position:absolute;left:236.5px;top:319.5px;width:172.3px;height:13.899999999999977px;background:rgb(74,74,95);"></div>
<div style="position:absolute;left:410.8px;top:319.5px;width:430.2px;height:13.899999999999977px;background:rgb(92,90,112);"></div>
<div style="position:absolute;left:843px;top:319.5px;width:257px;height:13.899999999999977px;background:rgb(74,74,95);"></div>
<div class="c" style="left:236.9px;width:171.70000000000002px;top:319.5px;height:13.4px;line-height:13.6px;font-size:10.6px;color:#d0d0de">Aug</div>
<div class="c" style="left:410.5px;width:430.70000000000005px;top:319.5px;height:13.4px;line-height:13.6px;font-size:10.6px;color:#d0d0de">Sep</div>
<div class="c" style="left:842.8px;width:257.20000000000005px;top:319.5px;height:13.4px;line-height:13.6px;font-size:10.6px;color:#d0d0de">Oct</div>
<div style="position:absolute;left:236.5px;top:333.4px;width:863.5px;height:13.400000000000034px;background:rgb(60,60,82);"></div>
<div class="c" style="left:235.70px;width:43.17px;top:333.2px;height:13.6px;line-height:14.6px;font-size:11.2px;font-weight:bold;color:#fff">21</div>
<div class="c" style="left:278.88px;width:43.17px;top:333.2px;height:13.6px;line-height:14.6px;font-size:11.2px;font-weight:bold;color:#fff">25</div>
<div class="c" style="left:322.05px;width:43.17px;top:333.2px;height:13.6px;line-height:14.6px;font-size:11.2px;font-weight:bold;color:#fff">27</div>
<div class="c" style="left:365.22px;width:43.17px;top:333.2px;height:13.6px;line-height:14.6px;font-size:11.2px;font-weight:bold;color:#fff">29</div>
<div class="c" style="left:408.40px;width:43.17px;top:333.2px;height:13.6px;line-height:14.6px;font-size:11.2px;font-weight:bold;color:#fff">2</div>
<div class="c" style="left:451.57px;width:43.17px;top:333.2px;height:13.6px;line-height:14.6px;font-size:11.2px;font-weight:bold;color:#fff">5</div>
<div class="c" style="left:494.75px;width:43.17px;top:333.2px;height:13.6px;line-height:14.6px;font-size:11.2px;font-weight:bold;color:#fff">8</div>
<div class="c" style="left:537.92px;width:43.17px;top:333.2px;height:13.6px;line-height:14.6px;font-size:11.2px;font-weight:bold;color:#fff">11</div>
<div class="c" style="left:581.10px;width:43.17px;top:333.2px;height:13.6px;line-height:14.6px;font-size:11.2px;font-weight:bold;color:#fff">15</div>
<div class="c" style="left:624.28px;width:43.17px;top:333.2px;height:13.6px;line-height:14.6px;font-size:11.2px;font-weight:bold;color:#fff">17</div>
<div class="c" style="left:667.45px;width:43.17px;top:333.2px;height:13.6px;line-height:14.6px;font-size:11.2px;font-weight:bold;color:#fff">19</div>
<div class="c" style="left:710.62px;width:43.17px;top:333.2px;height:13.6px;line-height:14.6px;font-size:11.2px;font-weight:bold;color:#fff">23</div>
<div class="c" style="left:753.80px;width:43.17px;top:333.2px;height:13.6px;line-height:14.6px;font-size:11.2px;font-weight:bold;color:#fff">26</div>
<div class="c" style="left:796.98px;width:43.17px;top:333.2px;height:13.6px;line-height:14.6px;font-size:11.2px;font-weight:bold;color:#fff">29</div>
<div class="c" style="left:840.15px;width:43.17px;top:333.2px;height:13.6px;line-height:14.6px;font-size:11.2px;font-weight:bold;color:#fff">2</div>
<div class="c" style="left:883.33px;width:43.17px;top:333.2px;height:13.6px;line-height:14.6px;font-size:11.2px;font-weight:bold;color:#fff">6</div>
<div class="c" style="left:926.50px;width:43.17px;top:333.2px;height:13.6px;line-height:14.6px;font-size:11.2px;font-weight:bold;color:#fff">8</div>
<div class="c" style="left:969.67px;width:43.17px;top:333.2px;height:13.6px;line-height:14.6px;font-size:11.2px;font-weight:bold;color:#fff">10</div>
<div class="c" style="left:1012.85px;width:43.17px;top:333.2px;height:13.6px;line-height:14.6px;font-size:11.2px;font-weight:bold;color:#fff">14</div>
<div class="c" style="left:1056.02px;width:43.17px;top:333.2px;height:13.6px;line-height:14.6px;font-size:11.2px;font-weight:bold;color:#fff">17</div>
<div style="position:absolute;left:180px;top:346.8px;width:56.5px;height:292.7px;background:#3d3d56;"></div>
<div class="t" style="left:182.6px;top:346.80px;height:13.94px;line-height:14.54px;font-size:11.3px;font-weight:bold;color:#fff">$201</div>
<div class="t" style="left:196px;width:37.4px;text-align:right;top:346.80px;height:13.94px;line-height:14.54px;font-size:8.4px;color:#a4a4b8">9%</div>
<div class="t" style="left:182.6px;top:360.74px;height:13.94px;line-height:14.54px;font-size:11.3px;font-weight:bold;color:#fff">$199</div>
<div class="t" style="left:196px;width:37.4px;text-align:right;top:360.74px;height:13.94px;line-height:14.54px;font-size:8.4px;color:#a4a4b8">7.9%</div>
<div class="t" style="left:182.6px;top:374.68px;height:13.94px;line-height:14.54px;font-size:11.3px;font-weight:bold;color:#fff">$198</div>
<div class="t" style="left:196px;width:37.4px;text-align:right;top:374.68px;height:13.94px;line-height:14.54px;font-size:8.4px;color:#a4a4b8">7.4%</div>
<div class="t" style="left:182.6px;top:388.61px;height:13.94px;line-height:14.54px;font-size:11.3px;font-weight:bold;color:#fff">$196</div>
<div class="t" style="left:196px;width:37.4px;text-align:right;top:388.61px;height:13.94px;line-height:14.54px;font-size:8.4px;color:#a4a4b8">6.3%</div>
<div class="t" style="left:182.6px;top:402.55px;height:13.94px;line-height:14.54px;font-size:11.3px;font-weight:bold;color:#fff">$194</div>
<div class="t" style="left:196px;width:37.4px;text-align:right;top:402.55px;height:13.94px;line-height:14.54px;font-size:8.4px;color:#a4a4b8">5.2%</div>
<div class="t" style="left:182.6px;top:416.49px;height:13.94px;line-height:14.54px;font-size:11.3px;font-weight:bold;color:#fff">$193</div>
<div class="t" style="left:196px;width:37.4px;text-align:right;top:416.49px;height:13.94px;line-height:14.54px;font-size:8.4px;color:#a4a4b8">4.6%</div>
<div class="t" style="left:182.6px;top:430.43px;height:13.94px;line-height:14.54px;font-size:11.3px;font-weight:bold;color:#fff">$191</div>
<div class="t" style="left:196px;width:37.4px;text-align:right;top:430.43px;height:13.94px;line-height:14.54px;font-size:8.4px;color:#a4a4b8">3.6%</div>
<div class="t" style="left:182.6px;top:444.37px;height:13.94px;line-height:14.54px;font-size:11.3px;font-weight:bold;color:#fff">$189</div>
<div class="t" style="left:196px;width:37.4px;text-align:right;top:444.37px;height:13.94px;line-height:14.54px;font-size:8.4px;color:#a4a4b8">2.5%</div>
<div class="t" style="left:182.6px;top:458.30px;height:13.94px;line-height:14.54px;font-size:11.3px;font-weight:bold;color:#fff">$188</div>
<div class="t" style="left:196px;width:37.4px;text-align:right;top:458.30px;height:13.94px;line-height:14.54px;font-size:8.4px;color:#a4a4b8">1.9%</div>
<div class="t" style="left:182.6px;top:472.24px;height:13.94px;line-height:14.54px;font-size:11.3px;font-weight:bold;color:#fff">$186</div>
<div class="t" style="left:196px;width:37.4px;text-align:right;top:472.24px;height:13.94px;line-height:14.54px;font-size:8.4px;color:#a4a4b8">0.9%</div>
<div class="t" style="left:182.6px;top:486.18px;height:13.94px;line-height:14.54px;font-size:11.3px;font-weight:bold;color:#fff">$185</div>
<div class="t" style="left:196px;width:37.4px;text-align:right;top:486.18px;height:13.94px;line-height:14.54px;font-size:8.4px;color:#a4a4b8">0.3%</div>
<div class="t" style="left:182.6px;top:500.12px;height:13.94px;line-height:14.54px;font-size:11.3px;font-weight:bold;color:#fff">$183</div>
<div class="t" style="left:196px;width:37.4px;text-align:right;top:500.12px;height:13.94px;line-height:14.54px;font-size:8.4px;color:#a4a4b8">-0.8%</div>
<div class="t" style="left:182.6px;top:514.06px;height:13.94px;line-height:14.54px;font-size:11.3px;font-weight:bold;color:#fff">$181</div>
<div class="t" style="left:196px;width:37.4px;text-align:right;top:514.06px;height:13.94px;line-height:14.54px;font-size:8.4px;color:#a4a4b8">-1.9%</div>
<div class="t" style="left:182.6px;top:528.00px;height:13.94px;line-height:14.54px;font-size:11.3px;font-weight:bold;color:#fff">$180</div>
<div class="t" style="left:196px;width:37.4px;text-align:right;top:528.00px;height:13.94px;line-height:14.54px;font-size:8.4px;color:#a4a4b8">-2.4%</div>
<div class="t" style="left:182.6px;top:541.93px;height:13.94px;line-height:14.54px;font-size:11.3px;font-weight:bold;color:#fff">$178</div>
<div class="t" style="left:196px;width:37.4px;text-align:right;top:541.93px;height:13.94px;line-height:14.54px;font-size:8.4px;color:#a4a4b8">-3.5%</div>
<div class="t" style="left:182.6px;top:555.87px;height:13.94px;line-height:14.54px;font-size:11.3px;font-weight:bold;color:#fff">$176</div>
<div class="t" style="left:196px;width:37.4px;text-align:right;top:555.87px;height:13.94px;line-height:14.54px;font-size:8.4px;color:#a4a4b8">-4.6%</div>
<div class="t" style="left:182.6px;top:569.81px;height:13.94px;line-height:14.54px;font-size:11.3px;font-weight:bold;color:#fff">$175</div>
<div class="t" style="left:196px;width:37.4px;text-align:right;top:569.81px;height:13.94px;line-height:14.54px;font-size:8.4px;color:#a4a4b8">-5.1%</div>
<div class="t" style="left:182.6px;top:583.75px;height:13.94px;line-height:14.54px;font-size:11.3px;font-weight:bold;color:#fff">$173</div>
<div class="t" style="left:196px;width:37.4px;text-align:right;top:583.75px;height:13.94px;line-height:14.54px;font-size:8.4px;color:#a4a4b8">-6.2%</div>
<div class="t" style="left:182.6px;top:597.69px;height:13.94px;line-height:14.54px;font-size:11.3px;font-weight:bold;color:#fff">$171</div>
<div class="t" style="left:196px;width:37.4px;text-align:right;top:597.69px;height:13.94px;line-height:14.54px;font-size:8.4px;color:#a4a4b8">-7.3%</div>
<div class="t" style="left:182.6px;top:611.62px;height:13.94px;line-height:14.54px;font-size:11.3px;font-weight:bold;color:#fff">$170</div>
<div class="t" style="left:196px;width:37.4px;text-align:right;top:611.62px;height:13.94px;line-height:14.54px;font-size:8.4px;color:#a4a4b8">-7.8%</div>
<div class="t" style="left:182.6px;top:625.56px;height:13.94px;line-height:14.54px;font-size:11.3px;font-weight:bold;color:#fff">$168</div>
<div class="t" style="left:196px;width:37.4px;text-align:right;top:625.56px;height:13.94px;line-height:14.54px;font-size:8.4px;color:#a4a4b8">-8.9%</div>
<div class="cell" style="left:236.50px;top:346.80px;width:43.47px;height:14.24px;background:rgb(10,167,52)"></div>
<div class="c b" style="left:236.50px;top:349px;width:43.17px;line-height:1;font-size:10.8px;color:#f2f2f6"><span style="display:inline-block;transform:scaleX(1.08)">980</span></div>
<div class="cell" style="left:279.68px;top:346.80px;width:43.47px;height:14.24px;background:rgb(10,167,52)"></div>
<div class="c b" style="left:279.68px;top:349px;width:43.17px;line-height:1;font-size:10.8px;color:#f2f2f6"><span style="display:inline-block;transform:scaleX(1.08)">945</span></div>
<div class="cell" style="left:322.85px;top:346.80px;width:43.47px;height:14.24px;background:rgb(10,167,52)"></div>
<div class="c b" style="left:322.85px;top:349px;width:43.17px;line-height:1;font-size:10.8px;color:#f2f2f6"><span style="display:inline-block;transform:scaleX(1.08)">927</span></div>
<div class="cell" style="left:366.02px;top:346.80px;width:43.47px;height:14.24px;background:rgb(10,167,52)"></div>
<div class="c b" style="left:366.02px;top:349px;width:43.17px;line-height:1;font-size:10.8px;color:#f2f2f6"><span style="display:inline-block;transform:scaleX(1.08)">909</span></div>
<div class="cell" style="left:409.20px;top:346.80px;width:43.47px;height:14.24px;background:rgb(10,167,52)"></div>
<div class="c b" style="left:409.20px;top:349px;width:43.17px;line-height:1;font-size:10.8px;color:#f2f2f6"><span style="display:inline-block;transform:scaleX(1.08)">873</span></div>
<div class="cell" style="left:452.38px;top:346.80px;width:43.47px;height:14.24px;background:rgb(10,167,52)"></div>
<div class="c b" style="left:452.38px;top:349px;width:43.17px;line-height:1;font-size:10.8px;color:#f2f2f6"><span style="display:inline-block;transform:scaleX(1.08)">845</span></div>
<div class="cell" style="left:495.55px;top:346.80px;width:43.47px;height:14.24px;background:rgb(10,167,52)"></div>
<div class="c b" style="left:495.55px;top:349px;width:43.17px;line-height:1;font-size:10.8px;color:#f2f2f6"><span style="display:inline-block;transform:scaleX(1.08)">8<span style="margin-left:-0.8px;margin-right:-1.2px">1</span>6</span></div>
<div class="cell" style="left:538.72px;top:346.80px;width:43.47px;height:14.24px;background:rgb(10,167,52)"></div>
<div class="c b" style="left:538.72px;top:349px;width:43.17px;line-height:1;font-size:10.8px;color:#f2f2f6"><span style="display:inline-block;transform:scaleX(1.08)">786</span></div>
<div class="cell" style="left:581.90px;top:346.80px;width:43.47px;height:14.24px;background:rgb(10,167,52)"></div>
<div class="c b" style="left:581.90px;top:349px;width:43.17px;line-height:1;font-size:10.8px;color:#f2f2f6"><span style="display:inline-block;transform:scaleX(1.08)">746</span></div>
<div class="cell" style="left:625.08px;top:346.80px;width:43.47px;height:14.24px;background:rgb(10,167,52)"></div>
<div class="c b" style="left:625.08px;top:349px;width:43.17px;line-height:1;font-size:10.8px;color:#f2f2f6"><span style="display:inline-block;transform:scaleX(1.08)">725</span></div>
<div class="cell" style="left:668.25px;top:346.80px;width:43.47px;height:14.24px;background:rgb(10,167,52)"></div>
<div class="c b" style="left:668.25px;top:349px;width:43.17px;line-height:1;font-size:10.8px;color:#f2f2f6"><span style="display:inline-block;transform:scaleX(1.08)">704</span></div>
<div class="cell" style="left:711.42px;top:346.80px;width:43.47px;height:14.24px;background:rgb(10,151,50)"></div>
<div class="c b" style="left:711.42px;top:349px;width:43.17px;line-height:1;font-size:10.8px;color:#f2f2f6"><span style="display:inline-block;transform:scaleX(1.08)">66<span style="margin-left:-0.8px;margin-right:-1.2px">1</span></span></div>
<div class="cell" style="left:754.60px;top:346.80px;width:43.47px;height:14.24px;background:rgb(10,143,50)"></div>
<div class="c b" style="left:754.60px;top:349px;width:43.17px;line-height:1;font-size:10.8px;color:#f2f2f6"><span style="display:inline-block;transform:scaleX(1.08)">627</span></div>
<div class="cell" style="left:797.77px;top:346.80px;width:43.47px;height:14.24px;background:rgb(10,135,49)"></div>
<div class="c b" style="left:797.77px;top:349px;width:43.17px;line-height:1;font-size:10.8px;color:#f2f2f6"><span style="display:inline-block;transform:scaleX(1.08)">593</span></div>
<div class="cell" style="left:840.95px;top:346.80px;width:43.47px;height:14.24px;background:rgb(10,127,48)"></div>
<div class="c b" style="left:840.95px;top:349px;width:43.17px;line-height:1;font-size:10.8px;color:#f2f2f6"><span style="display:inline-block;transform:scaleX(1.08)">558</span></div>
<div class="cell" style="left:884.12px;top:346.80px;width:43.47px;height:14.24px;background:rgb(10,117,47)"></div>
<div class="c b" style="left:884.12px;top:349px;width:43.17px;line-height:1;font-size:10.8px;color:#f2f2f6"><span style="display:inline-block;transform:scaleX(1.08)">5<span style="margin-left:-0.8px;margin-right:-1.2px">1</span>0</span></div>
<div class="cell" style="left:927.30px;top:346.80px;width:43.47px;height:14.24px;background:rgb(10,111,46)"></div>
<div class="c b" style="left:927.30px;top:349px;width:43.17px;line-height:1;font-size:10.8px;color:#f2f2f6"><span style="display:inline-block;transform:scaleX(1.08)">486</span></div>
<div class="cell" style="left:970.47px;top:346.80px;width:43.47px;height:14.24px;background:rgb(10,106,46)"></div>
<div class="c b" style="left:970.47px;top:349px;width:43.17px;line-height:1;font-size:10.8px;color:#f2f2f6"><span style="display:inline-block;transform:scaleX(1.08)">463</span></div>
<div class="cell" style="left:1013.65px;top:346.80px;width:43.47px;height:14.24px;background:rgb(10,98,45)"></div>
<div class="c b" style="left:1013.65px;top:349px;width:43.17px;line-height:1;font-size:10.8px;color:#f2f2f6"><span style="display:inline-block;transform:scaleX(1.08)">425</span></div>
<div class="cell" style="left:1056.82px;top:346.80px;width:43.47px;height:14.24px;background:rgb(10,95,45)"></div>
<div class="c b" style="left:1056.82px;top:349px;width:43.17px;line-height:1;font-size:10.8px;color:#f2f2f6"><span style="display:inline-block;transform:scaleX(1.08)">4<span style="margin-left:-0.8px;margin-right:-1.2px">1</span>3</span></div>
<div class="cell" style="left:236.50px;top:360.74px;width:43.47px;height:14.24px;background:rgb(10,167,52)"></div>
<div class="c b" style="left:236.50px;top:363px;width:43.17px;line-height:1;font-size:10.8px;color:#f2f2f6"><span style="display:inline-block;transform:scaleX(1.08)">837</span></div>
<div class="cell" style="left:279.68px;top:360.74px;width:43.47px;height:14.24px;background:rgb(10,167,52)"></div>
<div class="c b" style="left:279.68px;top:363px;width:43.17px;line-height:1;font-size:10.8px;color:#f2f2f6"><span style="display:inline-block;transform:scaleX(1.08)">802</span></div>
<div class="cell" style="left:322.85px;top:360.74px;width:43.47px;height:14.24px;background:rgb(10,167,52)"></div>
<div class="c b" style="left:322.85px;top:363px;width:43.17px;line-height:1;font-size:10.8px;color:#f2f2f6"><span style="display:inline-block;transform:scaleX(1.08)">784</span></div>
<div class="cell" style="left:366.02px;top:360.74px;width:43.47px;height:14.24px;background:rgb(10,167,52)"></div>
<div class="c b" style="left:366.02px;top:363px;width:43.17px;line-height:1;font-size:10.8px;color:#f2f2f6"><span style="display:inline-block;transform:scaleX(1.08)">765</span></div>
<div class="cell" style="left:409.20px;top:360.74px;width:43.47px;height:14.24px;background:rgb(10,167,52)"></div>
<div class="c b" style="left:409.20px;top:363px;width:43.17px;line-height:1;font-size:10.8px;color:#f2f2f6"><span style="display:inline-block;transform:scaleX(1.08)">728</span></div>
<div class="cell" style="left:452.38px;top:360.74px;width:43.47px;height:14.24px;background:rgb(10,167,52)"></div>
<div class="c b" style="left:452.38px;top:363px;width:43.17px;line-height:1;font-size:10.8px;color:#f2f2f6"><span style="display:inline-block;transform:scaleX(1.08)">699</span></div>
<div class="cell" style="left:495.55px;top:360.74px;width:43.47px;height:14.24px;background:rgb(10,152,51)"></div>
<div class="c b" style="left:495.55px;top:363px;width:43.17px;line-height:1;font-size:10.8px;color:#f2f2f6"><span style="display:inline-block;transform:scaleX(1.08)">669</span></div>
<div class="cell" style="left:538.72px;top:360.74px;width:43.47px;height:14.24px;background:rgb(10,145,50)"></div>
<div class="c b" style="left:538.72px;top:363px;width:43.17px;line-height:1;font-size:10.8px;color:#f2f2f6"><span style="display:inline-block;transform:scaleX(1.08)">638</span></div>
<div class="cell" style="left:581.90px;top:360.74px;width:43.47px;height:14.24px;background:rgb(10,136,49)"></div>
<div class="c b" style="left:581.90px;top:363px;width:43.17px;line-height:1;font-size:10.8px;color:#f2f2f6"><span style="display:inline-block;transform:scaleX(1.08)">596</span></div>
<div class="cell" style="left:625.08px;top:360.74px;width:43.47px;height:14.24px;background:rgb(10,131,48)"></div>
<div class="c b" style="left:625.08px;top:363px;width:43.17px;line-height:1;font-size:10.8px;color:#f2f2f6"><span style="display:inline-block;transform:scaleX(1.08)">575</span></div>
<div class="cell" style="left:668.25px;top:360.74px;width:43.47px;height:14.24px;background:rgb(10,126,48)"></div>
<div class="c b" style="left:668.25px;top:363px;width:43.17px;line-height:1;font-size:10.8px;color:#f2f2f6"><span style="display:inline-block;transform:scaleX(1.08)">552</span></div>
<div class="cell" style="left:711.42px;top:360.74px;width:43.47px;height:14.24px;background:rgb(10,116,47)"></div>
<div class="c b" style="left:711.42px;top:363px;width:43.17px;line-height:1;font-size:10.8px;color:#f2f2f6"><span style="display:inline-block;transform:scaleX(1.08)">506</span></div>
<div class="cell" style="left:754.60px;top:360.74px;width:43.47px;height:14.24px;background:rgb(10,108,46)"></div>
<div class="c b" style="left:754.60px;top:363px;width:43.17px;line-height:1;font-size:10.8px;color:#f2f2f6"><span style="display:inline-block;transform:scaleX(1.08)">47<span style="margin-left:-0.8px;margin-right:-1.2px">1</span></span></div>
<div class="cell" style="left:797.77px;top:360.74px;width:43.47px;height:14.24px;background:rgb(10,99,45)"></div>
<div class="c b" style="left:797.77px;top:363px;width:43.17px;line-height:1;font-size:10.8px;color:#f2f2f6"><span style="display:inline-block;transform:scaleX(1.08)">433</span></div>
<div class="cell" style="left:840.95px;top:360.74px;width:43.47px;height:14.24px;background:rgb(10,91,44)"></div>
<div class="c b" style="left:840.95px;top:363px;width:43.17px;line-height:1;font-size:10.8px;color:#f2f2f6"><span style="display:inline-block;transform:scaleX(1.08)">394</span></div>
<div class="cell" style="left:884.12px;top:360.74px;width:43.47px;height:14.24px;background:rgb(9,79,43)"></div>
<div class="c b" style="left:884.12px;top:363px;width:43.17px;line-height:1;font-size:10.8px;color:#f2f2f6"><span style="display:inline-block;transform:scaleX(1.08)">340</span></div>
<div class="cell" style="left:927.30px;top:360.74px;width:43.47px;height:14.24px;background:rgb(9,73,43)"></div>
<div class="c b" style="left:927.30px;top:363px;width:43.17px;line-height:1;font-size:10.8px;color:#f2f2f6"><span style="display:inline-block;transform:scaleX(1.08)">3<span style="margin-left:-0.8px;margin-right:-1.2px">1</span>2</span></div>
<div class="cell" style="left:970.47px;top:360.74px;width:43.47px;height:14.24px;background:rgb(9,67,42)"></div>
<div class="c b" style="left:970.47px;top:363px;width:43.17px;line-height:1;font-size:10.8px;color:#f2f2f6"><span style="display:inline-block;transform:scaleX(1.08)">284</span></div>
<div class="cell" style="left:1013.65px;top:360.74px;width:43.47px;height:14.24px;background:rgb(9,56,41)"></div>
<div class="c b" style="left:1013.65px;top:363px;width:43.17px;line-height:1;font-size:10.8px;color:#f2f2f6"><span style="display:inline-block;transform:scaleX(1.08)">232</span></div>
<div class="cell" style="left:1056.82px;top:360.74px;width:43.47px;height:14.24px;background:rgb(9,51,40)"></div>
<div class="c b" style="left:1056.82px;top:363px;width:43.17px;line-height:1;font-size:10.8px;color:#f2f2f6"><span style="display:inline-block;transform:scaleX(1.08)">2<span style="margin-left:-0.8px;margin-right:-1.2px">1</span>3</span></div>
<div class="cell" style="left:236.50px;top:374.68px;width:43.47px;height:14.24px;background:rgb(10,167,52)"></div>
<div class="c b" style="left:236.50px;top:376px;width:43.17px;line-height:1;font-size:10.8px;color:#f2f2f6"><span style="display:inline-block;transform:scaleX(1.08)">769</span></div>
<div class="cell" style="left:279.68px;top:374.68px;width:43.47px;height:14.24px;background:rgb(10,167,52)"></div>
<div class="c b" style="left:279.68px;top:376px;width:43.17px;line-height:1;font-size:10.8px;color:#f2f2f6"><span style="display:inline-block;transform:scaleX(1.08)">733</span></div>
<div class="cell" style="left:322.85px;top:374.68px;width:43.47px;height:14.24px;background:rgb(10,167,52)"></div>
<div class="c b" style="left:322.85px;top:376px;width:43.17px;line-height:1;font-size:10.8px;color:#f2f2f6"><span style="display:inline-block;transform:scaleX(1.08)">7<span style="margin-left:-0.8px;margin-right:-1.2px">1</span>4</span></div>
<div class="cell" style="left:366.02px;top:374.68px;width:43.47px;height:14.24px;background:rgb(10,167,52)"></div>
<div class="c b" style="left:366.02px;top:376px;width:43.17px;line-height:1;font-size:10.8px;color:#f2f2f6"><span style="display:inline-block;transform:scaleX(1.08)">696</span></div>
<div class="cell" style="left:409.20px;top:374.68px;width:43.47px;height:14.24px;background:rgb(10,150,50)"></div>
<div class="c b" style="left:409.20px;top:376px;width:43.17px;line-height:1;font-size:10.8px;color:#f2f2f6"><span style="display:inline-block;transform:scaleX(1.08)">658</span></div>
<div class="cell" style="left:452.38px;top:374.68px;width:43.47px;height:14.24px;background:rgb(10,143,50)"></div>
<div class="c b" style="left:452.38px;top:376px;width:43.17px;line-height:1;font-size:10.8px;color:#f2f2f6"><span style="display:inline-block;transform:scaleX(1.08)">628</span></div>
<div class="cell" style="left:495.55px;top:374.68px;width:43.47px;height:14.24px;background:rgb(10,136,49)"></div>
<div class="c b" style="left:495.55px;top:376px;width:43.17px;line-height:1;font-size:10.8px;color:#f2f2f6"><span style="display:inline-block;transform:scaleX(1.08)">598</span></div>
<div class="cell" style="left:538.72px;top:374.68px;width:43.47px;height:14.24px;background:rgb(10,129,48)"></div>
<div class="c b" style="left:538.72px;top:376px;width:43.17px;line-height:1;font-size:10.8px;color:#f2f2f6"><span style="display:inline-block;transform:scaleX(1.08)">567</span></div>
<div class="cell" style="left:581.90px;top:374.68px;width:43.47px;height:14.24px;background:rgb(10,120,47)"></div>
<div class="c b" style="left:581.90px;top:376px;width:43.17px;line-height:1;font-size:10.8px;color:#f2f2f6"><span style="display:inline-block;transform:scaleX(1.08)">524</span></div>
<div class="cell" style="left:625.08px;top:374.68px;width:43.47px;height:14.24px;background:rgb(10,115,47)"></div>
<div class="c b" style="left:625.08px;top:376px;width:43.17px;line-height:1;font-size:10.8px;color:#f2f2f6"><span style="display:inline-block;transform:scaleX(1.08)">502</span></div>
<div class="cell" style="left:668.25px;top:374.68px;width:43.47px;height:14.24px;background:rgb(10,110,46)"></div>
<div class="c b" style="left:668.25px;top:376px;width:43.17px;line-height:1;font-size:10.8px;color:#f2f2f6"><span style="display:inline-block;transform:scaleX(1.08)">479</span></div>
<div class="cell" style="left:711.42px;top:374.68px;width:43.47px;height:14.24px;background:rgb(10,99,45)"></div>
<div class="c b" style="left:711.42px;top:376px;width:43.17px;line-height:1;font-size:10.8px;color:#f2f2f6"><span style="display:inline-block;transform:scaleX(1.08)">432</span></div>
<div class="cell" style="left:754.60px;top:374.68px;width:43.47px;height:14.24px;background:rgb(10,91,44)"></div>
<div class="c b" style="left:754.60px;top:376px;width:43.17px;line-height:1;font-size:10.8px;color:#f2f2f6"><span style="display:inline-block;transform:scaleX(1.08)">395</span></div>
<div class="cell" style="left:797.77px;top:374.68px;width:43.47px;height:14.24px;background:rgb(9,83,44)"></div>
<div class="c b" style="left:797.77px;top:376px;width:43.17px;line-height:1;font-size:10.8px;color:#f2f2f6"><span style="display:inline-block;transform:scaleX(1.08)">357</span></div>
<div class="cell" style="left:840.95px;top:374.68px;width:43.47px;height:14.24px;background:rgb(9,74,43)"></div>
<div class="c b" style="left:840.95px;top:376px;width:43.17px;line-height:1;font-size:10.8px;color:#f2f2f6"><span style="display:inline-block;transform:scaleX(1.08)">3<span style="margin-left:-0.8px;margin-right:-1.2px">1</span>6</span></div>
<div class="cell" style="left:884.12px;top:374.68px;width:43.47px;height:14.24px;background:rgb(9,61,41)"></div>
<div class="c b" style="left:884.12px;top:376px;width:43.17px;line-height:1;font-size:10.8px;color:#f2f2f6"><span style="display:inline-block;transform:scaleX(1.08)">259</span></div>
<div class="cell" style="left:927.30px;top:374.68px;width:43.47px;height:14.24px;background:rgb(9,55,41)"></div>
<div class="c b" style="left:927.30px;top:376px;width:43.17px;line-height:1;font-size:10.8px;color:#f2f2f6"><span style="display:inline-block;transform:scaleX(1.08)">229</span></div>
<div class="cell" style="left:970.47px;top:374.68px;width:43.47px;height:14.24px;background:rgb(9,48,40)"></div>
<div class="c b" style="left:970.47px;top:376px;width:43.17px;line-height:1;font-size:10.8px;color:#f2f2f6"><span style="display:inline-block;transform:scaleX(1.08)"><span style="margin-left:-0.8px;margin-right:-1.2px">1</span>98</span></div>
<div class="cell" style="left:1013.65px;top:374.68px;width:43.47px;height:14.24px;background:rgb(9,35,39)"></div>
<div class="c b" style="left:1013.65px;top:376px;width:43.17px;line-height:1;font-size:10.8px;color:#f2f2f6"><span style="display:inline-block;transform:scaleX(1.08)"><span style="margin-left:-0.8px;margin-right:-1.2px">1</span>37</span></div>
<div class="cell" style="left:1056.82px;top:374.68px;width:43.47px;height:14.24px;background:rgb(9,30,38)"></div>
<div class="c b" style="left:1056.82px;top:376px;width:43.17px;line-height:1;font-size:10.8px;color:#f2f2f6"><span style="display:inline-block;transform:scaleX(1.08)"><span style="margin-left:-0.8px;margin-right:-1.2px">1</span><span style="margin-left:-0.8px;margin-right:-1.2px">1</span>3</span></div>
<div class="cell" style="left:236.50px;top:388.61px;width:43.47px;height:14.24px;background:rgb(10,145,50)"></div>
<div class="c b" style="left:236.50px;top:390px;width:43.17px;line-height:1;font-size:10.8px;color:#f2f2f6"><span style="display:inline-block;transform:scaleX(1.08)">635</span></div>
<div class="cell" style="left:279.68px;top:388.61px;width:43.47px;height:14.24px;background:rgb(10,137,49)"></div>
<div class="c b" style="left:279.68px;top:390px;width:43.17px;line-height:1;font-size:10.8px;color:#f2f2f6"><span style="display:inline-block;transform:scaleX(1.08)">599</span></div>
<div class="cell" style="left:322.85px;top:388.61px;width:43.47px;height:14.24px;background:rgb(10,132,49)"></div>
<div class="c b" style="left:322.85px;top:390px;width:43.17px;line-height:1;font-size:10.8px;color:#f2f2f6"><span style="display:inline-block;transform:scaleX(1.08)">580</span></div>
<div class="cell" style="left:366.02px;top:388.61px;width:43.47px;height:14.24px;background:rgb(10,128,48)"></div>
<div class="c b" style="left:366.02px;top:390px;width:43.17px;line-height:1;font-size:10.8px;color:#f2f2f6"><span style="display:inline-block;transform:scaleX(1.08)">562</span></div>
<div class="cell" style="left:409.20px;top:388.61px;width:43.47px;height:14.24px;background:rgb(10,120,47)"></div>
<div class="c b" style="left:409.20px;top:390px;width:43.17px;line-height:1;font-size:10.8px;color:#f2f2f6"><span style="display:inline-block;transform:scaleX(1.08)">523</span></div>
<div class="cell" style="left:452.38px;top:388.61px;width:43.47px;height:14.24px;background:rgb(10,113,47)"></div>
<div class="c b" style="left:452.38px;top:390px;width:43.17px;line-height:1;font-size:10.8px;color:#f2f2f6"><span style="display:inline-block;transform:scaleX(1.08)">493</span></div>
<div class="cell" style="left:495.55px;top:388.61px;width:43.47px;height:14.24px;background:rgb(10,106,46)"></div>
<div class="c b" style="left:495.55px;top:390px;width:43.17px;line-height:1;font-size:10.8px;color:#f2f2f6"><span style="display:inline-block;transform:scaleX(1.08)">462</span></div>
<div class="cell" style="left:538.72px;top:388.61px;width:43.47px;height:14.24px;background:rgb(10,99,45)"></div>
<div class="c b" style="left:538.72px;top:390px;width:43.17px;line-height:1;font-size:10.8px;color:#f2f2f6"><span style="display:inline-block;transform:scaleX(1.08)">430</span></div>
<div class="cell" style="left:581.90px;top:388.61px;width:43.47px;height:14.24px;background:rgb(10,89,44)"></div>
<div class="c b" style="left:581.90px;top:390px;width:43.17px;line-height:1;font-size:10.8px;color:#f2f2f6"><span style="display:inline-block;transform:scaleX(1.08)">386</span></div>
<div class="cell" style="left:625.08px;top:388.61px;width:43.47px;height:14.24px;background:rgb(9,84,44)"></div>
<div class="c b" style="left:625.08px;top:390px;width:43.17px;line-height:1;font-size:10.8px;color:#f2f2f6"><span style="display:inline-block;transform:scaleX(1.08)">363</span></div>
<div class="cell" style="left:668.25px;top:388.61px;width:43.47px;height:14.24px;background:rgb(9,79,43)"></div>
<div class="c b" style="left:668.25px;top:390px;width:43.17px;line-height:1;font-size:10.8px;color:#f2f2f6"><span style="display:inline-block;transform:scaleX(1.08)">340</span></div>
<div class="cell" style="left:711.42px;top:388.61px;width:43.47px;height:14.24px;background:rgb(9,68,42)"></div>
<div class="c b" style="left:711.42px;top:390px;width:43.17px;line-height:1;font-size:10.8px;color:#f2f2f6"><span style="display:inline-block;transform:scaleX(1.08)">29<span style="margin-left:-0.8px;margin-right:-1.2px">1</span></span></div>
<div class="cell" style="left:754.60px;top:388.61px;width:43.47px;height:14.24px;background:rgb(9,60,41)"></div>
<div class="c b" style="left:754.60px;top:390px;width:43.17px;line-height:1;font-size:10.8px;color:#f2f2f6"><span style="display:inline-block;transform:scaleX(1.08)">252</span></div>
<div class="cell" style="left:797.77px;top:388.61px;width:43.47px;height:14.24px;background:rgb(9,51,40)"></div>
<div class="c b" style="left:797.77px;top:390px;width:43.17px;line-height:1;font-size:10.8px;color:#f2f2f6"><span style="display:inline-block;transform:scaleX(1.08)">2<span style="margin-left:-0.8px;margin-right:-1.2px">1</span><span style="margin-left:-0.8px;margin-right:-1.2px">1</span></span></div>
<div class="cell" style="left:840.95px;top:388.61px;width:43.47px;height:14.24px;background:rgb(9,42,39)"></div>
<div class="c b" style="left:840.95px;top:390px;width:43.17px;line-height:1;font-size:10.8px;color:#f2f2f6"><span style="display:inline-block;transform:scaleX(1.08)"><span style="margin-left:-0.8px;margin-right:-1.2px">1</span>67</span></div>
<div class="cell" style="left:884.12px;top:388.61px;width:43.47px;height:14.24px;background:rgb(9,29,38)"></div>
<div class="c b" style="left:884.12px;top:390px;width:43.17px;line-height:1;font-size:10.8px;color:#f2f2f6"><span style="display:inline-block;transform:scaleX(1.08)"><span style="margin-left:-0.8px;margin-right:-1.2px">1</span>05</span></div>
<div class="cell" style="left:927.30px;top:388.61px;width:43.47px;height:14.24px;background:rgb(9,22,37)"></div>
<div class="c b" style="left:927.30px;top:390px;width:43.17px;line-height:1;font-size:10.8px;color:#f2f2f6"><span style="display:inline-block;transform:scaleX(1.08)">7<span style="margin-left:-0.8px;margin-right:-1.2px">1</span></span></div>
<div class="cell" style="left:970.47px;top:388.61px;width:43.47px;height:14.24px;background:rgb(9,15,37)"></div>
<div class="c b" style="left:970.47px;top:390px;width:43.17px;line-height:1;font-size:10.8px;color:#f2f2f6"><span style="display:inline-block;transform:scaleX(1.08)">35</span></div>
<div class="cell" style="left:1013.65px;top:388.61px;width:43.47px;height:14.24px;background:rgb(15,8,36)"></div>
<div class="c b" style="left:1013.65px;top:390px;width:43.17px;line-height:1;font-size:10.8px;color:#f2f2f6"><span style="display:inline-block;transform:scaleX(1.08)">-43</span></div>
<div class="cell" style="left:1056.82px;top:388.61px;width:43.47px;height:14.24px;background:rgb(23,8,36)"></div>
<div class="c b" style="left:1056.82px;top:390px;width:43.17px;line-height:1;font-size:10.8px;color:#f2f2f6"><span style="display:inline-block;transform:scaleX(1.08)">-87</span></div>
<div class="cell" style="left:236.50px;top:402.55px;width:43.47px;height:14.24px;background:rgb(10,116,47)"></div>
<div class="c b" style="left:236.50px;top:404px;width:43.17px;line-height:1;font-size:10.8px;color:#f2f2f6"><span style="display:inline-block;transform:scaleX(1.08)">509</span></div>
<div class="cell" style="left:279.68px;top:402.55px;width:43.47px;height:14.24px;background:rgb(10,108,46)"></div>
<div class="c b" style="left:279.68px;top:404px;width:43.17px;line-height:1;font-size:10.8px;color:#f2f2f6"><span style="display:inline-block;transform:scaleX(1.08)">472</span></div>
<div class="cell" style="left:322.85px;top:402.55px;width:43.47px;height:14.24px;background:rgb(10,104,46)"></div>
<div class="c b" style="left:322.85px;top:404px;width:43.17px;line-height:1;font-size:10.8px;color:#f2f2f6"><span style="display:inline-block;transform:scaleX(1.08)">453</span></div>
<div class="cell" style="left:366.02px;top:402.55px;width:43.47px;height:14.24px;background:rgb(10,100,45)"></div>
<div class="c b" style="left:366.02px;top:404px;width:43.17px;line-height:1;font-size:10.8px;color:#f2f2f6"><span style="display:inline-block;transform:scaleX(1.08)">434</span></div>
<div class="cell" style="left:409.20px;top:402.55px;width:43.47px;height:14.24px;background:rgb(10,91,44)"></div>
<div class="c b" style="left:409.20px;top:404px;width:43.17px;line-height:1;font-size:10.8px;color:#f2f2f6"><span style="display:inline-block;transform:scaleX(1.08)">395</span></div>
<div class="cell" style="left:452.38px;top:402.55px;width:43.47px;height:14.24px;background:rgb(9,84,44)"></div>
<div class="c b" style="left:452.38px;top:404px;width:43.17px;line-height:1;font-size:10.8px;color:#f2f2f6"><span style="display:inline-block;transform:scaleX(1.08)">365</span></div>
<div class="cell" style="left:495.55px;top:402.55px;width:43.47px;height:14.24px;background:rgb(9,77,43)"></div>
<div class="c b" style="left:495.55px;top:404px;width:43.17px;line-height:1;font-size:10.8px;color:#f2f2f6"><span style="display:inline-block;transform:scaleX(1.08)">333</span></div>
<div class="cell" style="left:538.72px;top:402.55px;width:43.47px;height:14.24px;background:rgb(9,70,42)"></div>
<div class="c b" style="left:538.72px;top:404px;width:43.17px;line-height:1;font-size:10.8px;color:#f2f2f6"><span style="display:inline-block;transform:scaleX(1.08)">30<span style="margin-left:-0.8px;margin-right:-1.2px">1</span></span></div>
<div class="cell" style="left:581.90px;top:402.55px;width:43.47px;height:14.24px;background:rgb(9,61,41)"></div>
<div class="c b" style="left:581.90px;top:404px;width:43.17px;line-height:1;font-size:10.8px;color:#f2f2f6"><span style="display:inline-block;transform:scaleX(1.08)">256</span></div>
<div class="cell" style="left:625.08px;top:402.55px;width:43.47px;height:14.24px;background:rgb(9,56,41)"></div>
<div class="c b" style="left:625.08px;top:404px;width:43.17px;line-height:1;font-size:10.8px;color:#f2f2f6"><span style="display:inline-block;transform:scaleX(1.08)">233</span></div>
<div class="cell" style="left:668.25px;top:402.55px;width:43.47px;height:14.24px;background:rgb(9,51,40)"></div>
<div class="c b" style="left:668.25px;top:404px;width:43.17px;line-height:1;font-size:10.8px;color:#f2f2f6"><span style="display:inline-block;transform:scaleX(1.08)">209</span></div>
<div class="cell" style="left:711.42px;top:402.55px;width:43.47px;height:14.24px;background:rgb(9,40,39)"></div>
<div class="c b" style="left:711.42px;top:404px;width:43.17px;line-height:1;font-size:10.8px;color:#f2f2f6"><span style="display:inline-block;transform:scaleX(1.08)"><span style="margin-left:-0.8px;margin-right:-1.2px">1</span>58</span></div>
<div class="cell" style="left:754.60px;top:402.55px;width:43.47px;height:14.24px;background:rgb(9,31,38)"></div>
<div class="c b" style="left:754.60px;top:404px;width:43.17px;line-height:1;font-size:10.8px;color:#f2f2f6"><span style="display:inline-block;transform:scaleX(1.08)"><span style="margin-left:-0.8px;margin-right:-1.2px">1</span><span style="margin-left:-0.8px;margin-right:-1.2px">1</span>8</span></div>
<div class="cell" style="left:797.77px;top:402.55px;width:43.47px;height:14.24px;background:rgb(9,23,37)"></div>
<div class="c b" style="left:797.77px;top:404px;width:43.17px;line-height:1;font-size:10.8px;color:#f2f2f6"><span style="display:inline-block;transform:scaleX(1.08)">75</span></div>
<div class="cell" style="left:840.95px;top:402.55px;width:43.47px;height:14.24px;background:rgb(9,14,37)"></div>
<div class="c b" style="left:840.95px;top:404px;width:43.17px;line-height:1;font-size:10.8px;color:#f2f2f6"><span style="display:inline-block;transform:scaleX(1.08)">30</span></div>
<div class="cell" style="left:884.12px;top:402.55px;width:43.47px;height:14.24px;background:rgb(14,8,36)"></div>
<div class="c b" style="left:884.12px;top:404px;width:43.17px;line-height:1;font-size:10.8px;color:#f2f2f6"><span style="display:inline-block;transform:scaleX(1.08)">-37</span></div>
<div class="cell" style="left:927.30px;top:402.55px;width:43.47px;height:14.24px;background:rgb(21,8,36)"></div>
<div class="c b" style="left:927.30px;top:404px;width:43.17px;line-height:1;font-size:10.8px;color:#f2f2f6"><span style="display:inline-block;transform:scaleX(1.08)">-74</span></div>
<div class="cell" style="left:970.47px;top:402.55px;width:43.47px;height:14.24px;background:rgb(28,8,36)"></div>
<div class="c b" style="left:970.47px;top:404px;width:43.17px;line-height:1;font-size:10.8px;color:#f2f2f6"><span style="display:inline-block;transform:scaleX(1.08)">-<span style="margin-left:-0.8px;margin-right:-1.2px">1</span><span style="margin-left:-0.8px;margin-right:-1.2px">1</span>4</span></div>
<div class="cell" style="left:1013.65px;top:402.55px;width:43.47px;height:14.24px;background:rgb(48,7,36)"></div>
<div class="c b" style="left:1013.65px;top:404px;width:43.17px;line-height:1;font-size:10.8px;color:#f2f2f6"><span style="display:inline-block;transform:scaleX(1.08)">-209</span></div>
<div class="cell" style="left:1056.82px;top:402.55px;width:43.47px;height:14.24px;background:rgb(66,7,37)"></div>
<div class="c b" style="left:1056.82px;top:404px;width:43.17px;line-height:1;font-size:10.8px;color:#f2f2f6"><span style="display:inline-block;transform:scaleX(1.08)">-287</span></div>
<div class="cell" style="left:236.50px;top:416.49px;width:43.47px;height:14.24px;background:rgb(10,103,46)"></div>
<div class="c b" style="left:236.50px;top:418px;width:43.17px;line-height:1;font-size:10.8px;color:#f2f2f6"><span style="display:inline-block;transform:scaleX(1.08)">448</span></div>
<div class="cell" style="left:279.68px;top:416.49px;width:43.47px;height:14.24px;background:rgb(10,95,45)"></div>
<div class="c b" style="left:279.68px;top:418px;width:43.17px;line-height:1;font-size:10.8px;color:#f2f2f6"><span style="display:inline-block;transform:scaleX(1.08)">4<span style="margin-left:-0.8px;margin-right:-1.2px">1</span><span style="margin-left:-0.8px;margin-right:-1.2px">1</span></span></div>
<div class="cell" style="left:322.85px;top:416.49px;width:43.47px;height:14.24px;background:rgb(10,90,44)"></div>
<div class="c b" style="left:322.85px;top:418px;width:43.17px;line-height:1;font-size:10.8px;color:#f2f2f6"><span style="display:inline-block;transform:scaleX(1.08)">392</span></div>
<div class="cell" style="left:366.02px;top:416.49px;width:43.47px;height:14.24px;background:rgb(9,86,44)"></div>
<div class="c b" style="left:366.02px;top:418px;width:43.17px;line-height:1;font-size:10.8px;color:#f2f2f6"><span style="display:inline-block;transform:scaleX(1.08)">373</span></div>
<div class="cell" style="left:409.20px;top:416.49px;width:43.47px;height:14.24px;background:rgb(9,78,43)"></div>
<div class="c b" style="left:409.20px;top:418px;width:43.17px;line-height:1;font-size:10.8px;color:#f2f2f6"><span style="display:inline-block;transform:scaleX(1.08)">334</span></div>
<div class="cell" style="left:452.38px;top:416.49px;width:43.47px;height:14.24px;background:rgb(9,71,42)"></div>
<div class="c b" style="left:452.38px;top:418px;width:43.17px;line-height:1;font-size:10.8px;color:#f2f2f6"><span style="display:inline-block;transform:scaleX(1.08)">303</span></div>
<div class="cell" style="left:495.55px;top:416.49px;width:43.47px;height:14.24px;background:rgb(9,64,42)"></div>
<div class="c b" style="left:495.55px;top:418px;width:43.17px;line-height:1;font-size:10.8px;color:#f2f2f6"><span style="display:inline-block;transform:scaleX(1.08)">272</span></div>
<div class="cell" style="left:538.72px;top:416.49px;width:43.47px;height:14.24px;background:rgb(9,57,41)"></div>
<div class="c b" style="left:538.72px;top:418px;width:43.17px;line-height:1;font-size:10.8px;color:#f2f2f6"><span style="display:inline-block;transform:scaleX(1.08)">239</span></div>
<div class="cell" style="left:581.90px;top:416.49px;width:43.47px;height:14.24px;background:rgb(9,47,40)"></div>
<div class="c b" style="left:581.90px;top:418px;width:43.17px;line-height:1;font-size:10.8px;color:#f2f2f6"><span style="display:inline-block;transform:scaleX(1.08)"><span style="margin-left:-0.8px;margin-right:-1.2px">1</span>94</span></div>
<div class="cell" style="left:625.08px;top:416.49px;width:43.47px;height:14.24px;background:rgb(9,42,39)"></div>
<div class="c b" style="left:625.08px;top:418px;width:43.17px;line-height:1;font-size:10.8px;color:#f2f2f6"><span style="display:inline-block;transform:scaleX(1.08)"><span style="margin-left:-0.8px;margin-right:-1.2px">1</span>7<span style="margin-left:-0.8px;margin-right:-1.2px">1</span></span></div>
<div class="cell" style="left:668.25px;top:416.49px;width:43.47px;height:14.24px;background:rgb(9,37,39)"></div>
<div class="c b" style="left:668.25px;top:418px;width:43.17px;line-height:1;font-size:10.8px;color:#f2f2f6"><span style="display:inline-block;transform:scaleX(1.08)"><span style="margin-left:-0.8px;margin-right:-1.2px">1</span>47</span></div>
<div class="cell" style="left:711.42px;top:416.49px;width:43.47px;height:14.24px;background:rgb(9,27,38)"></div>
<div class="c b" style="left:711.42px;top:418px;width:43.17px;line-height:1;font-size:10.8px;color:#f2f2f6"><span style="display:inline-block;transform:scaleX(1.08)">96</span></div>
<div class="cell" style="left:754.60px;top:416.49px;width:43.47px;height:14.24px;background:rgb(9,18,37)"></div>
<div class="c b" style="left:754.60px;top:418px;width:43.17px;line-height:1;font-size:10.8px;color:#f2f2f6"><span style="display:inline-block;transform:scaleX(1.08)">55</span></div>
<div class="cell" style="left:797.77px;top:416.49px;width:43.47px;height:14.24px;background:rgb(9,10,36)"></div>
<div class="c b" style="left:797.77px;top:418px;width:43.17px;line-height:1;font-size:10.8px;color:#f2f2f6"><span style="display:inline-block;transform:scaleX(1.08)"><span style="margin-left:-0.8px;margin-right:-1.2px">1</span>2</span></div>
<div class="cell" style="left:840.95px;top:416.49px;width:43.47px;height:14.24px;background:rgb(14,8,36)"></div>
<div class="c b" style="left:840.95px;top:418px;width:43.17px;line-height:1;font-size:10.8px;color:#f2f2f6"><span style="display:inline-block;transform:scaleX(1.08)">-34</span></div>
<div class="cell" style="left:884.12px;top:416.49px;width:43.47px;height:14.24px;background:rgb(26,8,36)"></div>
<div class="c b" style="left:884.12px;top:418px;width:43.17px;line-height:1;font-size:10.8px;color:#f2f2f6"><span style="display:inline-block;transform:scaleX(1.08)">-<span style="margin-left:-0.8px;margin-right:-1.2px">1</span>03</span></div>
<div class="cell" style="left:927.30px;top:416.49px;width:43.47px;height:14.24px;background:rgb(34,8,36)"></div>
<div class="c b" style="left:927.30px;top:418px;width:43.17px;line-height:1;font-size:10.8px;color:#f2f2f6"><span style="display:inline-block;transform:scaleX(1.08)">-<span style="margin-left:-0.8px;margin-right:-1.2px">1</span>4<span style="margin-left:-0.8px;margin-right:-1.2px">1</span></span></div>
<div class="cell" style="left:970.47px;top:416.49px;width:43.47px;height:14.24px;background:rgb(42,7,36)"></div>
<div class="c b" style="left:970.47px;top:418px;width:43.17px;line-height:1;font-size:10.8px;color:#f2f2f6"><span style="display:inline-block;transform:scaleX(1.08)">-<span style="margin-left:-0.8px;margin-right:-1.2px">1</span>83</span></div>
<div class="cell" style="left:1013.65px;top:416.49px;width:43.47px;height:14.24px;background:rgb(66,7,37)"></div>
<div class="c b" style="left:1013.65px;top:418px;width:43.17px;line-height:1;font-size:10.8px;color:#f2f2f6"><span style="display:inline-block;transform:scaleX(1.08)">-284</span></div>
<div class="cell" style="left:1056.82px;top:416.49px;width:43.47px;height:14.24px;background:rgb(92,7,37)"></div>
<div class="c b" style="left:1056.82px;top:418px;width:43.17px;line-height:1;font-size:10.8px;color:#f2f2f6"><span style="display:inline-block;transform:scaleX(1.08)">-387</span></div>
<div class="cell" style="left:236.50px;top:430.43px;width:43.47px;height:14.24px;background:rgb(9,77,43)"></div>
<div class="c b" style="left:236.50px;top:432px;width:43.17px;line-height:1;font-size:10.8px;color:#f2f2f6"><span style="display:inline-block;transform:scaleX(1.08)">33<span style="margin-left:-0.8px;margin-right:-1.2px">1</span></span></div>
<div class="cell" style="left:279.68px;top:430.43px;width:43.47px;height:14.24px;background:rgb(9,69,42)"></div>
<div class="c b" style="left:279.68px;top:432px;width:43.17px;line-height:1;font-size:10.8px;color:#f2f2f6"><span style="display:inline-block;transform:scaleX(1.08)">294</span></div>
<div class="cell" style="left:322.85px;top:430.43px;width:43.47px;height:14.24px;background:rgb(9,65,42)"></div>
<div class="c b" style="left:322.85px;top:432px;width:43.17px;line-height:1;font-size:10.8px;color:#f2f2f6"><span style="display:inline-block;transform:scaleX(1.08)">276</span></div>
<div class="cell" style="left:366.02px;top:430.43px;width:43.47px;height:14.24px;background:rgb(9,61,41)"></div>
<div class="c b" style="left:366.02px;top:432px;width:43.17px;line-height:1;font-size:10.8px;color:#f2f2f6"><span style="display:inline-block;transform:scaleX(1.08)">257</span></div>
<div class="cell" style="left:409.20px;top:430.43px;width:43.47px;height:14.24px;background:rgb(9,52,40)"></div>
<div class="c b" style="left:409.20px;top:432px;width:43.17px;line-height:1;font-size:10.8px;color:#f2f2f6"><span style="display:inline-block;transform:scaleX(1.08)">2<span style="margin-left:-0.8px;margin-right:-1.2px">1</span>7</span></div>
<div class="cell" style="left:452.38px;top:430.43px;width:43.47px;height:14.24px;background:rgb(9,46,40)"></div>
<div class="c b" style="left:452.38px;top:432px;width:43.17px;line-height:1;font-size:10.8px;color:#f2f2f6"><span style="display:inline-block;transform:scaleX(1.08)"><span style="margin-left:-0.8px;margin-right:-1.2px">1</span>87</span></div>
<div class="cell" style="left:495.55px;top:430.43px;width:43.47px;height:14.24px;background:rgb(9,39,39)"></div>
<div class="c b" style="left:495.55px;top:432px;width:43.17px;line-height:1;font-size:10.8px;color:#f2f2f6"><span style="display:inline-block;transform:scaleX(1.08)"><span style="margin-left:-0.8px;margin-right:-1.2px">1</span>55</span></div>
<div class="cell" style="left:538.72px;top:430.43px;width:43.47px;height:14.24px;background:rgb(9,32,38)"></div>
<div class="c b" style="left:538.72px;top:432px;width:43.17px;line-height:1;font-size:10.8px;color:#f2f2f6"><span style="display:inline-block;transform:scaleX(1.08)"><span style="margin-left:-0.8px;margin-right:-1.2px">1</span>23</span></div>
<div class="cell" style="left:581.90px;top:430.43px;width:43.47px;height:14.24px;background:rgb(9,23,38)"></div>
<div class="c b" style="left:581.90px;top:432px;width:43.17px;line-height:1;font-size:10.8px;color:#f2f2f6"><span style="display:inline-block;transform:scaleX(1.08)">78</span></div>
<div class="cell" style="left:625.08px;top:430.43px;width:43.47px;height:14.24px;background:rgb(9,18,37)"></div>
<div class="c b" style="left:625.08px;top:432px;width:43.17px;line-height:1;font-size:10.8px;color:#f2f2f6"><span style="display:inline-block;transform:scaleX(1.08)">54</span></div>
<div class="cell" style="left:668.25px;top:430.43px;width:43.47px;height:14.24px;background:rgb(9,14,37)"></div>
<div class="c b" style="left:668.25px;top:432px;width:43.17px;line-height:1;font-size:10.8px;color:#f2f2f6"><span style="display:inline-block;transform:scaleX(1.08)">30</span></div>
<div class="cell" style="left:711.42px;top:430.43px;width:43.47px;height:14.24px;background:rgb(12,8,36)"></div>
<div class="c b" style="left:711.42px;top:432px;width:43.17px;line-height:1;font-size:10.8px;color:#f2f2f6"><span style="display:inline-block;transform:scaleX(1.08)">-2<span style="margin-left:-0.8px;margin-right:-1.2px">1</span></span></div>
<div class="cell" style="left:754.60px;top:430.43px;width:43.47px;height:14.24px;background:rgb(19,8,36)"></div>
<div class="c b" style="left:754.60px;top:432px;width:43.17px;line-height:1;font-size:10.8px;color:#f2f2f6"><span style="display:inline-block;transform:scaleX(1.08)">-62</span></div>
<div class="cell" style="left:797.77px;top:430.43px;width:43.47px;height:14.24px;background:rgb(27,8,36)"></div>
<div class="c b" style="left:797.77px;top:432px;width:43.17px;line-height:1;font-size:10.8px;color:#f2f2f6"><span style="display:inline-block;transform:scaleX(1.08)">-<span style="margin-left:-0.8px;margin-right:-1.2px">1</span>06</span></div>
<div class="cell" style="left:840.95px;top:430.43px;width:43.47px;height:14.24px;background:rgb(36,8,36)"></div>
<div class="c b" style="left:840.95px;top:432px;width:43.17px;line-height:1;font-size:10.8px;color:#f2f2f6"><span style="display:inline-block;transform:scaleX(1.08)">-<span style="margin-left:-0.8px;margin-right:-1.2px">1</span>53</span></div>
<div class="cell" style="left:884.12px;top:430.43px;width:43.47px;height:14.24px;background:rgb(51,7,36)"></div>
<div class="c b" style="left:884.12px;top:432px;width:43.17px;line-height:1;font-size:10.8px;color:#f2f2f6"><span style="display:inline-block;transform:scaleX(1.08)">-223</span></div>
<div class="cell" style="left:927.30px;top:430.43px;width:43.47px;height:14.24px;background:rgb(60,7,37)"></div>
<div class="c b" style="left:927.30px;top:432px;width:43.17px;line-height:1;font-size:10.8px;color:#f2f2f6"><span style="display:inline-block;transform:scaleX(1.08)">-262</span></div>
<div class="cell" style="left:970.47px;top:430.43px;width:43.47px;height:14.24px;background:rgb(71,7,37)"></div>
<div class="c b" style="left:970.47px;top:432px;width:43.17px;line-height:1;font-size:10.8px;color:#f2f2f6"><span style="display:inline-block;transform:scaleX(1.08)">-306</span></div>
<div class="cell" style="left:1013.65px;top:430.43px;width:43.47px;height:14.24px;background:rgb(100,6,37)"></div>
<div class="c b" style="left:1013.65px;top:432px;width:43.17px;line-height:1;font-size:10.8px;color:#f2f2f6"><span style="display:inline-block;transform:scaleX(1.08)">-4<span style="margin-left:-0.8px;margin-right:-1.2px">1</span>5</span></div>
<div class="cell" style="left:1056.82px;top:430.43px;width:43.47px;height:14.24px;background:rgb(150,6,38)"></div>
<div class="c b" style="left:1056.82px;top:432px;width:43.17px;line-height:1;font-size:10.8px;color:#f2f2f6"><span style="display:inline-block;transform:scaleX(1.08)">-587</span></div>
<div class="cell" style="left:236.50px;top:444.37px;width:43.47px;height:14.24px;background:rgb(9,53,41)"></div>
<div class="c b" style="left:236.50px;top:446px;width:43.17px;line-height:1;font-size:10.8px;color:#f2f2f6"><span style="display:inline-block;transform:scaleX(1.08)">22<span style="margin-left:-0.8px;margin-right:-1.2px">1</span></span></div>
<div class="cell" style="left:279.68px;top:444.37px;width:43.47px;height:14.24px;background:rgb(9,45,40)"></div>
<div class="c b" style="left:279.68px;top:446px;width:43.17px;line-height:1;font-size:10.8px;color:#f2f2f6"><span style="display:inline-block;transform:scaleX(1.08)"><span style="margin-left:-0.8px;margin-right:-1.2px">1</span>85</span></div>
<div class="cell" style="left:322.85px;top:444.37px;width:43.47px;height:14.24px;background:rgb(9,41,39)"></div>
<div class="c b" style="left:322.85px;top:446px;width:43.17px;line-height:1;font-size:10.8px;color:#f2f2f6"><span style="display:inline-block;transform:scaleX(1.08)"><span style="margin-left:-0.8px;margin-right:-1.2px">1</span>66</span></div>
<div class="cell" style="left:366.02px;top:444.37px;width:43.47px;height:14.24px;background:rgb(9,38,39)"></div>
<div class="c b" style="left:366.02px;top:446px;width:43.17px;line-height:1;font-size:10.8px;color:#f2f2f6"><span style="display:inline-block;transform:scaleX(1.08)"><span style="margin-left:-0.8px;margin-right:-1.2px">1</span>48</span></div>
<div class="cell" style="left:409.20px;top:444.37px;width:43.47px;height:14.24px;background:rgb(9,29,38)"></div>
<div class="c b" style="left:409.20px;top:446px;width:43.17px;line-height:1;font-size:10.8px;color:#f2f2f6"><span style="display:inline-block;transform:scaleX(1.08)"><span style="margin-left:-0.8px;margin-right:-1.2px">1</span>09</span></div>
<div class="cell" style="left:452.38px;top:444.37px;width:43.47px;height:14.24px;background:rgb(9,23,38)"></div>
<div class="c b" style="left:452.38px;top:446px;width:43.17px;line-height:1;font-size:10.8px;color:#f2f2f6"><span style="display:inline-block;transform:scaleX(1.08)">79</span></div>
<div class="cell" style="left:495.55px;top:444.37px;width:43.47px;height:14.24px;background:rgb(9,17,37)"></div>
<div class="c b" style="left:495.55px;top:446px;width:43.17px;line-height:1;font-size:10.8px;color:#f2f2f6"><span style="display:inline-block;transform:scaleX(1.08)">47</span></div>
<div class="cell" style="left:538.72px;top:444.37px;width:43.47px;height:14.24px;background:rgb(9,11,36)"></div>
<div class="c b" style="left:538.72px;top:446px;width:43.17px;line-height:1;font-size:10.8px;color:#f2f2f6"><span style="display:inline-block;transform:scaleX(1.08)"><span style="margin-left:-0.8px;margin-right:-1.2px">1</span>5</span></div>
<div class="cell" style="left:581.90px;top:444.37px;width:43.47px;height:14.24px;background:rgb(13,8,36)"></div>
<div class="c b" style="left:581.90px;top:446px;width:43.17px;line-height:1;font-size:10.8px;color:#f2f2f6"><span style="display:inline-block;transform:scaleX(1.08)">-30</span></div>
<div class="cell" style="left:625.08px;top:444.37px;width:43.47px;height:14.24px;background:rgb(17,8,36)"></div>
<div class="c b" style="left:625.08px;top:446px;width:43.17px;line-height:1;font-size:10.8px;color:#f2f2f6"><span style="display:inline-block;transform:scaleX(1.08)">-53</span></div>
<div class="cell" style="left:668.25px;top:444.37px;width:43.47px;height:14.24px;background:rgb(21,8,36)"></div>
<div class="c b" style="left:668.25px;top:446px;width:43.17px;line-height:1;font-size:10.8px;color:#f2f2f6"><span style="display:inline-block;transform:scaleX(1.08)">-77</span></div>
<div class="cell" style="left:711.42px;top:444.37px;width:43.47px;height:14.24px;background:rgb(31,8,36)"></div>
<div class="c b" style="left:711.42px;top:446px;width:43.17px;line-height:1;font-size:10.8px;color:#f2f2f6"><span style="display:inline-block;transform:scaleX(1.08)">-<span style="margin-left:-0.8px;margin-right:-1.2px">1</span>28</span></div>
<div class="cell" style="left:754.60px;top:444.37px;width:43.47px;height:14.24px;background:rgb(39,7,36)"></div>
<div class="c b" style="left:754.60px;top:446px;width:43.17px;line-height:1;font-size:10.8px;color:#f2f2f6"><span style="display:inline-block;transform:scaleX(1.08)">-<span style="margin-left:-0.8px;margin-right:-1.2px">1</span>68</span></div>
<div class="cell" style="left:797.77px;top:444.37px;width:43.47px;height:14.24px;background:rgb(49,7,36)"></div>
<div class="c b" style="left:797.77px;top:446px;width:43.17px;line-height:1;font-size:10.8px;color:#f2f2f6"><span style="display:inline-block;transform:scaleX(1.08)">-2<span style="margin-left:-0.8px;margin-right:-1.2px">1</span><span style="margin-left:-0.8px;margin-right:-1.2px">1</span></span></div>
<div class="cell" style="left:840.95px;top:444.37px;width:43.47px;height:14.24px;background:rgb(59,7,37)"></div>
<div class="c b" style="left:840.95px;top:446px;width:43.17px;line-height:1;font-size:10.8px;color:#f2f2f6"><span style="display:inline-block;transform:scaleX(1.08)">-258</span></div>
<div class="cell" style="left:884.12px;top:444.37px;width:43.47px;height:14.24px;background:rgb(76,7,37)"></div>
<div class="c b" style="left:884.12px;top:446px;width:43.17px;line-height:1;font-size:10.8px;color:#f2f2f6"><span style="display:inline-block;transform:scaleX(1.08)">-327</span></div>
<div class="cell" style="left:927.30px;top:444.37px;width:43.47px;height:14.24px;background:rgb(87,7,37)"></div>
<div class="c b" style="left:927.30px;top:446px;width:43.17px;line-height:1;font-size:10.8px;color:#f2f2f6"><span style="display:inline-block;transform:scaleX(1.08)">-366</span></div>
<div class="cell" style="left:970.47px;top:444.37px;width:43.47px;height:14.24px;background:rgb(98,6,37)"></div>
<div class="c b" style="left:970.47px;top:446px;width:43.17px;line-height:1;font-size:10.8px;color:#f2f2f6"><span style="display:inline-block;transform:scaleX(1.08)">-409</span></div>
<div class="cell" style="left:1013.65px;top:444.37px;width:43.47px;height:14.24px;background:rgb(129,6,37)"></div>
<div class="c b" style="left:1013.65px;top:446px;width:43.17px;line-height:1;font-size:10.8px;color:#f2f2f6"><span style="display:inline-block;transform:scaleX(1.08)">-5<span style="margin-left:-0.8px;margin-right:-1.2px">1</span>7</span></div>
<div class="cell" style="left:1056.82px;top:444.37px;width:43.47px;height:14.24px;background:rgb(182,5,38)"></div>
<div class="c b" style="left:1056.82px;top:446px;width:43.17px;line-height:1;font-size:10.8px;color:#f2f2f6"><span style="display:inline-block;transform:scaleX(1.08)">-687</span></div>
<div class="cell" style="left:236.50px;top:458.30px;width:43.47px;height:14.24px;background:rgb(9,42,39)"></div>
<div class="c b" style="left:236.50px;top:460px;width:43.17px;line-height:1;font-size:10.8px;color:#f2f2f6"><span style="display:inline-block;transform:scaleX(1.08)"><span style="margin-left:-0.8px;margin-right:-1.2px">1</span>69</span></div>
<div class="cell" style="left:279.68px;top:458.30px;width:43.47px;height:14.24px;background:rgb(9,34,39)"></div>
<div class="c b" style="left:279.68px;top:460px;width:43.17px;line-height:1;font-size:10.8px;color:#f2f2f6"><span style="display:inline-block;transform:scaleX(1.08)"><span style="margin-left:-0.8px;margin-right:-1.2px">1</span>33</span></div>
<div class="cell" style="left:322.85px;top:458.30px;width:43.47px;height:14.24px;background:rgb(9,31,38)"></div>
<div class="c b" style="left:322.85px;top:460px;width:43.17px;line-height:1;font-size:10.8px;color:#f2f2f6"><span style="display:inline-block;transform:scaleX(1.08)"><span style="margin-left:-0.8px;margin-right:-1.2px">1</span><span style="margin-left:-0.8px;margin-right:-1.2px">1</span>5</span></div>
<div class="cell" style="left:366.02px;top:458.30px;width:43.47px;height:14.24px;background:rgb(9,27,38)"></div>
<div class="c b" style="left:366.02px;top:460px;width:43.17px;line-height:1;font-size:10.8px;color:#f2f2f6"><span style="display:inline-block;transform:scaleX(1.08)">96</span></div>
<div class="cell" style="left:409.20px;top:458.30px;width:43.47px;height:14.24px;background:rgb(9,19,37)"></div>
<div class="c b" style="left:409.20px;top:460px;width:43.17px;line-height:1;font-size:10.8px;color:#f2f2f6"><span style="display:inline-block;transform:scaleX(1.08)">57</span></div>
<div class="cell" style="left:452.38px;top:458.30px;width:43.47px;height:14.24px;background:rgb(9,13,36)"></div>
<div class="c b" style="left:452.38px;top:460px;width:43.17px;line-height:1;font-size:10.8px;color:#f2f2f6"><span style="display:inline-block;transform:scaleX(1.08)">27</span></div>
<div class="cell" style="left:495.55px;top:458.30px;width:43.47px;height:14.24px;background:rgb(9,8,36)"></div>
<div class="c b" style="left:495.55px;top:460px;width:43.17px;line-height:1;font-size:10.8px;color:#f2f2f6"><span style="display:inline-block;transform:scaleX(1.08)">-3</span></div>
<div class="cell" style="left:538.72px;top:458.30px;width:43.47px;height:14.24px;background:rgb(14,8,36)"></div>
<div class="c b" style="left:538.72px;top:460px;width:43.17px;line-height:1;font-size:10.8px;color:#f2f2f6"><span style="display:inline-block;transform:scaleX(1.08)">-35</span></div>
<div class="cell" style="left:581.90px;top:458.30px;width:43.47px;height:14.24px;background:rgb(22,8,36)"></div>
<div class="c b" style="left:581.90px;top:460px;width:43.17px;line-height:1;font-size:10.8px;color:#f2f2f6"><span style="display:inline-block;transform:scaleX(1.08)">-80</span></div>
<div class="cell" style="left:625.08px;top:458.30px;width:43.47px;height:14.24px;background:rgb(26,8,36)"></div>
<div class="c b" style="left:625.08px;top:460px;width:43.17px;line-height:1;font-size:10.8px;color:#f2f2f6"><span style="display:inline-block;transform:scaleX(1.08)">-<span style="margin-left:-0.8px;margin-right:-1.2px">1</span>03</span></div>
<div class="cell" style="left:668.25px;top:458.30px;width:43.47px;height:14.24px;background:rgb(31,8,36)"></div>
<div class="c b" style="left:668.25px;top:460px;width:43.17px;line-height:1;font-size:10.8px;color:#f2f2f6"><span style="display:inline-block;transform:scaleX(1.08)">-<span style="margin-left:-0.8px;margin-right:-1.2px">1</span>27</span></div>
<div class="cell" style="left:711.42px;top:458.30px;width:43.47px;height:14.24px;background:rgb(41,7,36)"></div>
<div class="c b" style="left:711.42px;top:460px;width:43.17px;line-height:1;font-size:10.8px;color:#f2f2f6"><span style="display:inline-block;transform:scaleX(1.08)">-<span style="margin-left:-0.8px;margin-right:-1.2px">1</span>77</span></div>
<div class="cell" style="left:754.60px;top:458.30px;width:43.47px;height:14.24px;background:rgb(50,7,36)"></div>
<div class="c b" style="left:754.60px;top:460px;width:43.17px;line-height:1;font-size:10.8px;color:#f2f2f6"><span style="display:inline-block;transform:scaleX(1.08)">-2<span style="margin-left:-0.8px;margin-right:-1.2px">1</span>7</span></div>
<div class="cell" style="left:797.77px;top:458.30px;width:43.47px;height:14.24px;background:rgb(60,7,37)"></div>
<div class="c b" style="left:797.77px;top:460px;width:43.17px;line-height:1;font-size:10.8px;color:#f2f2f6"><span style="display:inline-block;transform:scaleX(1.08)">-259</span></div>
<div class="cell" style="left:840.95px;top:458.30px;width:43.47px;height:14.24px;background:rgb(71,7,37)"></div>
<div class="c b" style="left:840.95px;top:460px;width:43.17px;line-height:1;font-size:10.8px;color:#f2f2f6"><span style="display:inline-block;transform:scaleX(1.08)">-305</span></div>
<div class="cell" style="left:884.12px;top:458.30px;width:43.47px;height:14.24px;background:rgb(88,7,37)"></div>
<div class="c b" style="left:884.12px;top:460px;width:43.17px;line-height:1;font-size:10.8px;color:#f2f2f6"><span style="display:inline-block;transform:scaleX(1.08)">-373</span></div>
<div class="cell" style="left:927.30px;top:458.30px;width:43.47px;height:14.24px;background:rgb(99,6,37)"></div>
<div class="c b" style="left:927.30px;top:460px;width:43.17px;line-height:1;font-size:10.8px;color:#f2f2f6"><span style="display:inline-block;transform:scaleX(1.08)">-4<span style="margin-left:-0.8px;margin-right:-1.2px">1</span><span style="margin-left:-0.8px;margin-right:-1.2px">1</span></span></div>
<div class="cell" style="left:970.47px;top:458.30px;width:43.47px;height:14.24px;background:rgb(110,6,37)"></div>
<div class="c b" style="left:970.47px;top:460px;width:43.17px;line-height:1;font-size:10.8px;color:#f2f2f6"><span style="display:inline-block;transform:scaleX(1.08)">-453</span></div>
<div class="cell" style="left:1013.65px;top:458.30px;width:43.47px;height:14.24px;background:rgb(141,6,38)"></div>
<div class="c b" style="left:1013.65px;top:460px;width:43.17px;line-height:1;font-size:10.8px;color:#f2f2f6"><span style="display:inline-block;transform:scaleX(1.08)">-557</span></div>
<div class="cell" style="left:1056.82px;top:458.30px;width:43.47px;height:14.24px;background:rgb(182,5,38)"></div>
<div class="c b" style="left:1056.82px;top:460px;width:43.17px;line-height:1;font-size:10.8px;color:#f2f2f6"><span style="display:inline-block;transform:scaleX(1.08)">-687</span></div>
<div class="cell" style="left:236.50px;top:472.24px;width:43.47px;height:14.24px;background:rgb(9,22,37)"></div>
<div class="c b" style="left:236.50px;top:474px;width:43.17px;line-height:1;font-size:10.8px;color:#f2f2f6"><span style="display:inline-block;transform:scaleX(1.08)">70</span></div>
<div class="cell" style="left:279.68px;top:472.24px;width:43.47px;height:14.24px;background:rgb(9,15,37)"></div>
<div class="c b" style="left:279.68px;top:474px;width:43.17px;line-height:1;font-size:10.8px;color:#f2f2f6"><span style="display:inline-block;transform:scaleX(1.08)">35</span></div>
<div class="cell" style="left:322.85px;top:472.24px;width:43.47px;height:14.24px;background:rgb(9,11,36)"></div>
<div class="c b" style="left:322.85px;top:474px;width:43.17px;line-height:1;font-size:10.8px;color:#f2f2f6"><span style="display:inline-block;transform:scaleX(1.08)"><span style="margin-left:-0.8px;margin-right:-1.2px">1</span>7</span></div>
<div class="cell" style="left:366.02px;top:472.24px;width:43.47px;height:14.24px;background:rgb(9,8,36)"></div>
<div class="c b" style="left:366.02px;top:474px;width:43.17px;line-height:1;font-size:10.8px;color:#f2f2f6"><span style="display:inline-block;transform:scaleX(1.08)">-<span style="margin-left:-0.8px;margin-right:-1.2px">1</span></span></div>
<div class="cell" style="left:409.20px;top:472.24px;width:43.47px;height:14.24px;background:rgb(15,8,36)"></div>
<div class="c b" style="left:409.20px;top:474px;width:43.17px;line-height:1;font-size:10.8px;color:#f2f2f6"><span style="display:inline-block;transform:scaleX(1.08)">-39</span></div>
<div class="cell" style="left:452.38px;top:472.24px;width:43.47px;height:14.24px;background:rgb(20,8,36)"></div>
<div class="c b" style="left:452.38px;top:474px;width:43.17px;line-height:1;font-size:10.8px;color:#f2f2f6"><span style="display:inline-block;transform:scaleX(1.08)">-68</span></div>
<div class="cell" style="left:495.55px;top:472.24px;width:43.47px;height:14.24px;background:rgb(25,8,36)"></div>
<div class="c b" style="left:495.55px;top:474px;width:43.17px;line-height:1;font-size:10.8px;color:#f2f2f6"><span style="display:inline-block;transform:scaleX(1.08)">-98</span></div>
<div class="cell" style="left:538.72px;top:472.24px;width:43.47px;height:14.24px;background:rgb(31,8,36)"></div>
<div class="c b" style="left:538.72px;top:474px;width:43.17px;line-height:1;font-size:10.8px;color:#f2f2f6"><span style="display:inline-block;transform:scaleX(1.08)">-<span style="margin-left:-0.8px;margin-right:-1.2px">1</span>30</span></div>
<div class="cell" style="left:581.90px;top:472.24px;width:43.47px;height:14.24px;background:rgb(40,7,36)"></div>
<div class="c b" style="left:581.90px;top:474px;width:43.17px;line-height:1;font-size:10.8px;color:#f2f2f6"><span style="display:inline-block;transform:scaleX(1.08)">-<span style="margin-left:-0.8px;margin-right:-1.2px">1</span>73</span></div>
<div class="cell" style="left:625.08px;top:472.24px;width:43.47px;height:14.24px;background:rgb(45,7,36)"></div>
<div class="c b" style="left:625.08px;top:474px;width:43.17px;line-height:1;font-size:10.8px;color:#f2f2f6"><span style="display:inline-block;transform:scaleX(1.08)">-<span style="margin-left:-0.8px;margin-right:-1.2px">1</span>95</span></div>
<div class="cell" style="left:668.25px;top:472.24px;width:43.47px;height:14.24px;background:rgb(50,7,36)"></div>
<div class="c b" style="left:668.25px;top:474px;width:43.17px;line-height:1;font-size:10.8px;color:#f2f2f6"><span style="display:inline-block;transform:scaleX(1.08)">-2<span style="margin-left:-0.8px;margin-right:-1.2px">1</span>8</span></div>
<div class="cell" style="left:711.42px;top:472.24px;width:43.47px;height:14.24px;background:rgb(62,7,37)"></div>
<div class="c b" style="left:711.42px;top:474px;width:43.17px;line-height:1;font-size:10.8px;color:#f2f2f6"><span style="display:inline-block;transform:scaleX(1.08)">-267</span></div>
<div class="cell" style="left:754.60px;top:472.24px;width:43.47px;height:14.24px;background:rgb(71,7,37)"></div>
<div class="c b" style="left:754.60px;top:474px;width:43.17px;line-height:1;font-size:10.8px;color:#f2f2f6"><span style="display:inline-block;transform:scaleX(1.08)">-305</span></div>
<div class="cell" style="left:797.77px;top:472.24px;width:43.47px;height:14.24px;background:rgb(81,7,37)"></div>
<div class="c b" style="left:797.77px;top:474px;width:43.17px;line-height:1;font-size:10.8px;color:#f2f2f6"><span style="display:inline-block;transform:scaleX(1.08)">-346</span></div>
<div class="cell" style="left:840.95px;top:472.24px;width:43.47px;height:14.24px;background:rgb(93,7,37)"></div>
<div class="c b" style="left:840.95px;top:474px;width:43.17px;line-height:1;font-size:10.8px;color:#f2f2f6"><span style="display:inline-block;transform:scaleX(1.08)">-389</span></div>
<div class="cell" style="left:884.12px;top:472.24px;width:43.47px;height:14.24px;background:rgb(111,6,37)"></div>
<div class="c b" style="left:884.12px;top:474px;width:43.17px;line-height:1;font-size:10.8px;color:#f2f2f6"><span style="display:inline-block;transform:scaleX(1.08)">-454</span></div>
<div class="cell" style="left:927.30px;top:472.24px;width:43.47px;height:14.24px;background:rgb(121,6,37)"></div>
<div class="c b" style="left:927.30px;top:474px;width:43.17px;line-height:1;font-size:10.8px;color:#f2f2f6"><span style="display:inline-block;transform:scaleX(1.08)">-489</span></div>
<div class="cell" style="left:970.47px;top:472.24px;width:43.47px;height:14.24px;background:rgb(132,6,37)"></div>
<div class="c b" style="left:970.47px;top:474px;width:43.17px;line-height:1;font-size:10.8px;color:#f2f2f6"><span style="display:inline-block;transform:scaleX(1.08)">-527</span></div>
<div class="cell" style="left:1013.65px;top:472.24px;width:43.47px;height:14.24px;background:rgb(159,5,38)"></div>
<div class="c b" style="left:1013.65px;top:474px;width:43.17px;line-height:1;font-size:10.8px;color:#f2f2f6"><span style="display:inline-block;transform:scaleX(1.08)">-6<span style="margin-left:-0.8px;margin-right:-1.2px">1</span>7</span></div>
<div class="cell" style="left:1056.82px;top:472.24px;width:43.47px;height:14.24px;background:rgb(182,5,38)"></div>
<div class="c b" style="left:1056.82px;top:474px;width:43.17px;line-height:1;font-size:10.8px;color:#f2f2f6"><span style="display:inline-block;transform:scaleX(1.08)">-687</span></div>
<div class="cell" style="left:236.50px;top:486.18px;width:43.47px;height:14.24px;background:rgb(9,12,36)"></div>
<div class="c b" style="left:236.50px;top:488px;width:43.17px;line-height:1;font-size:10.8px;color:#f2f2f6"><span style="display:inline-block;transform:scaleX(1.08)">23</span></div>
<div class="cell" style="left:279.68px;top:486.18px;width:43.47px;height:14.24px;background:rgb(10,8,36)"></div>
<div class="c b" style="left:279.68px;top:488px;width:43.17px;line-height:1;font-size:10.8px;color:#f2f2f6"><span style="display:inline-block;transform:scaleX(1.08)">-<span style="margin-left:-0.8px;margin-right:-1.2px">1</span><span style="margin-left:-0.8px;margin-right:-1.2px">1</span></span></div>
<div class="cell" style="left:322.85px;top:486.18px;width:43.47px;height:14.24px;background:rgb(13,8,36)"></div>
<div class="c b" style="left:322.85px;top:488px;width:43.17px;line-height:1;font-size:10.8px;color:#f2f2f6"><span style="display:inline-block;transform:scaleX(1.08)">-29</span></div>
<div class="cell" style="left:366.02px;top:486.18px;width:43.47px;height:14.24px;background:rgb(16,8,36)"></div>
<div class="c b" style="left:366.02px;top:488px;width:43.17px;line-height:1;font-size:10.8px;color:#f2f2f6"><span style="display:inline-block;transform:scaleX(1.08)">-47</span></div>
<div class="cell" style="left:409.20px;top:486.18px;width:43.47px;height:14.24px;background:rgb(23,8,36)"></div>
<div class="c b" style="left:409.20px;top:488px;width:43.17px;line-height:1;font-size:10.8px;color:#f2f2f6"><span style="display:inline-block;transform:scaleX(1.08)">-84</span></div>
<div class="cell" style="left:452.38px;top:486.18px;width:43.47px;height:14.24px;background:rgb(28,8,36)"></div>
<div class="c b" style="left:452.38px;top:488px;width:43.17px;line-height:1;font-size:10.8px;color:#f2f2f6"><span style="display:inline-block;transform:scaleX(1.08)">-<span style="margin-left:-0.8px;margin-right:-1.2px">1</span><span style="margin-left:-0.8px;margin-right:-1.2px">1</span>3</span></div>
<div class="cell" style="left:495.55px;top:486.18px;width:43.47px;height:14.24px;background:rgb(34,8,36)"></div>
<div class="c b" style="left:495.55px;top:488px;width:43.17px;line-height:1;font-size:10.8px;color:#f2f2f6"><span style="display:inline-block;transform:scaleX(1.08)">-<span style="margin-left:-0.8px;margin-right:-1.2px">1</span>43</span></div>
<div class="cell" style="left:538.72px;top:486.18px;width:43.47px;height:14.24px;background:rgb(40,7,36)"></div>
<div class="c b" style="left:538.72px;top:488px;width:43.17px;line-height:1;font-size:10.8px;color:#f2f2f6"><span style="display:inline-block;transform:scaleX(1.08)">-<span style="margin-left:-0.8px;margin-right:-1.2px">1</span>73</span></div>
<div class="cell" style="left:581.90px;top:486.18px;width:43.47px;height:14.24px;background:rgb(50,7,36)"></div>
<div class="c b" style="left:581.90px;top:488px;width:43.17px;line-height:1;font-size:10.8px;color:#f2f2f6"><span style="display:inline-block;transform:scaleX(1.08)">-2<span style="margin-left:-0.8px;margin-right:-1.2px">1</span>6</span></div>
<div class="cell" style="left:625.08px;top:486.18px;width:43.47px;height:14.24px;background:rgb(55,7,37)"></div>
<div class="c b" style="left:625.08px;top:488px;width:43.17px;line-height:1;font-size:10.8px;color:#f2f2f6"><span style="display:inline-block;transform:scaleX(1.08)">-238</span></div>
<div class="cell" style="left:668.25px;top:486.18px;width:43.47px;height:14.24px;background:rgb(60,7,37)"></div>
<div class="c b" style="left:668.25px;top:488px;width:43.17px;line-height:1;font-size:10.8px;color:#f2f2f6"><span style="display:inline-block;transform:scaleX(1.08)">-260</span></div>
<div class="cell" style="left:711.42px;top:486.18px;width:43.47px;height:14.24px;background:rgb(71,7,37)"></div>
<div class="c b" style="left:711.42px;top:488px;width:43.17px;line-height:1;font-size:10.8px;color:#f2f2f6"><span style="display:inline-block;transform:scaleX(1.08)">-307</span></div>
<div class="cell" style="left:754.60px;top:486.18px;width:43.47px;height:14.24px;background:rgb(81,7,37)"></div>
<div class="c b" style="left:754.60px;top:488px;width:43.17px;line-height:1;font-size:10.8px;color:#f2f2f6"><span style="display:inline-block;transform:scaleX(1.08)">-345</span></div>
<div class="cell" style="left:797.77px;top:486.18px;width:43.47px;height:14.24px;background:rgb(91,7,37)"></div>
<div class="c b" style="left:797.77px;top:488px;width:43.17px;line-height:1;font-size:10.8px;color:#f2f2f6"><span style="display:inline-block;transform:scaleX(1.08)">-384</span></div>
<div class="cell" style="left:840.95px;top:486.18px;width:43.47px;height:14.24px;background:rgb(103,6,37)"></div>
<div class="c b" style="left:840.95px;top:488px;width:43.17px;line-height:1;font-size:10.8px;color:#f2f2f6"><span style="display:inline-block;transform:scaleX(1.08)">-427</span></div>
<div class="cell" style="left:884.12px;top:486.18px;width:43.47px;height:14.24px;background:rgb(120,6,37)"></div>
<div class="c b" style="left:884.12px;top:488px;width:43.17px;line-height:1;font-size:10.8px;color:#f2f2f6"><span style="display:inline-block;transform:scaleX(1.08)">-488</span></div>
<div class="cell" style="left:927.30px;top:486.18px;width:43.47px;height:14.24px;background:rgb(130,6,37)"></div>
<div class="c b" style="left:927.30px;top:488px;width:43.17px;line-height:1;font-size:10.8px;color:#f2f2f6"><span style="display:inline-block;transform:scaleX(1.08)">-52<span style="margin-left:-0.8px;margin-right:-1.2px">1</span></span></div>
<div class="cell" style="left:970.47px;top:486.18px;width:43.47px;height:14.24px;background:rgb(141,6,38)"></div>
<div class="c b" style="left:970.47px;top:488px;width:43.17px;line-height:1;font-size:10.8px;color:#f2f2f6"><span style="display:inline-block;transform:scaleX(1.08)">-557</span></div>
<div class="cell" style="left:1013.65px;top:486.18px;width:43.47px;height:14.24px;background:rgb(166,5,38)"></div>
<div class="c b" style="left:1013.65px;top:488px;width:43.17px;line-height:1;font-size:10.8px;color:#f2f2f6"><span style="display:inline-block;transform:scaleX(1.08)">-637</span></div>
<div class="cell" style="left:1056.82px;top:486.18px;width:43.47px;height:14.24px;background:rgb(182,5,38)"></div>
<div class="c b" style="left:1056.82px;top:488px;width:43.17px;line-height:1;font-size:10.8px;color:#f2f2f6"><span style="display:inline-block;transform:scaleX(1.08)">-687</span></div>
<div class="cell" style="left:236.50px;top:500.12px;width:43.47px;height:14.24px;background:rgb(19,8,36)"></div>
<div class="c b" style="left:236.50px;top:502px;width:43.17px;line-height:1;font-size:10.8px;color:#f2f2f6"><span style="display:inline-block;transform:scaleX(1.08)">-65</span></div>
<div class="cell" style="left:279.68px;top:500.12px;width:43.47px;height:14.24px;background:rgb(25,8,36)"></div>
<div class="c b" style="left:279.68px;top:502px;width:43.17px;line-height:1;font-size:10.8px;color:#f2f2f6"><span style="display:inline-block;transform:scaleX(1.08)">-98</span></div>
<div class="cell" style="left:322.85px;top:500.12px;width:43.47px;height:14.24px;background:rgb(29,8,36)"></div>
<div class="c b" style="left:322.85px;top:502px;width:43.17px;line-height:1;font-size:10.8px;color:#f2f2f6"><span style="display:inline-block;transform:scaleX(1.08)">-<span style="margin-left:-0.8px;margin-right:-1.2px">1</span><span style="margin-left:-0.8px;margin-right:-1.2px">1</span>6</span></div>
<div class="cell" style="left:366.02px;top:500.12px;width:43.47px;height:14.24px;background:rgb(32,8,36)"></div>
<div class="c b" style="left:366.02px;top:502px;width:43.17px;line-height:1;font-size:10.8px;color:#f2f2f6"><span style="display:inline-block;transform:scaleX(1.08)">-<span style="margin-left:-0.8px;margin-right:-1.2px">1</span>33</span></div>
<div class="cell" style="left:409.20px;top:500.12px;width:43.47px;height:14.24px;background:rgb(39,7,36)"></div>
<div class="c b" style="left:409.20px;top:502px;width:43.17px;line-height:1;font-size:10.8px;color:#f2f2f6"><span style="display:inline-block;transform:scaleX(1.08)">-<span style="margin-left:-0.8px;margin-right:-1.2px">1</span>69</span></div>
<div class="cell" style="left:452.38px;top:500.12px;width:43.47px;height:14.24px;background:rgb(45,7,36)"></div>
<div class="c b" style="left:452.38px;top:502px;width:43.17px;line-height:1;font-size:10.8px;color:#f2f2f6"><span style="display:inline-block;transform:scaleX(1.08)">-<span style="margin-left:-0.8px;margin-right:-1.2px">1</span>96</span></div>
<div class="cell" style="left:495.55px;top:500.12px;width:43.47px;height:14.24px;background:rgb(52,7,36)"></div>
<div class="c b" style="left:495.55px;top:502px;width:43.17px;line-height:1;font-size:10.8px;color:#f2f2f6"><span style="display:inline-block;transform:scaleX(1.08)">-225</span></div>
<div class="cell" style="left:538.72px;top:500.12px;width:43.47px;height:14.24px;background:rgb(59,7,37)"></div>
<div class="c b" style="left:538.72px;top:502px;width:43.17px;line-height:1;font-size:10.8px;color:#f2f2f6"><span style="display:inline-block;transform:scaleX(1.08)">-254</span></div>
<div class="cell" style="left:581.90px;top:500.12px;width:43.47px;height:14.24px;background:rgb(68,7,37)"></div>
<div class="c b" style="left:581.90px;top:502px;width:43.17px;line-height:1;font-size:10.8px;color:#f2f2f6"><span style="display:inline-block;transform:scaleX(1.08)">-294</span></div>
<div class="cell" style="left:625.08px;top:500.12px;width:43.47px;height:14.24px;background:rgb(73,7,37)"></div>
<div class="c b" style="left:625.08px;top:502px;width:43.17px;line-height:1;font-size:10.8px;color:#f2f2f6"><span style="display:inline-block;transform:scaleX(1.08)">-3<span style="margin-left:-0.8px;margin-right:-1.2px">1</span>5</span></div>
<div class="cell" style="left:668.25px;top:500.12px;width:43.47px;height:14.24px;background:rgb(79,7,37)"></div>
<div class="c b" style="left:668.25px;top:502px;width:43.17px;line-height:1;font-size:10.8px;color:#f2f2f6"><span style="display:inline-block;transform:scaleX(1.08)">-337</span></div>
<div class="cell" style="left:711.42px;top:500.12px;width:43.47px;height:14.24px;background:rgb(91,7,37)"></div>
<div class="c b" style="left:711.42px;top:502px;width:43.17px;line-height:1;font-size:10.8px;color:#f2f2f6"><span style="display:inline-block;transform:scaleX(1.08)">-38<span style="margin-left:-0.8px;margin-right:-1.2px">1</span></span></div>
<div class="cell" style="left:754.60px;top:500.12px;width:43.47px;height:14.24px;background:rgb(100,6,37)"></div>
<div class="c b" style="left:754.60px;top:502px;width:43.17px;line-height:1;font-size:10.8px;color:#f2f2f6"><span style="display:inline-block;transform:scaleX(1.08)">-4<span style="margin-left:-0.8px;margin-right:-1.2px">1</span>6</span></div>
<div class="cell" style="left:797.77px;top:500.12px;width:43.47px;height:14.24px;background:rgb(110,6,37)"></div>
<div class="c b" style="left:797.77px;top:502px;width:43.17px;line-height:1;font-size:10.8px;color:#f2f2f6"><span style="display:inline-block;transform:scaleX(1.08)">-452</span></div>
<div class="cell" style="left:840.95px;top:500.12px;width:43.47px;height:14.24px;background:rgb(121,6,37)"></div>
<div class="c b" style="left:840.95px;top:502px;width:43.17px;line-height:1;font-size:10.8px;color:#f2f2f6"><span style="display:inline-block;transform:scaleX(1.08)">-49<span style="margin-left:-0.8px;margin-right:-1.2px">1</span></span></div>
<div class="cell" style="left:884.12px;top:500.12px;width:43.47px;height:14.24px;background:rgb(138,6,37)"></div>
<div class="c b" style="left:884.12px;top:502px;width:43.17px;line-height:1;font-size:10.8px;color:#f2f2f6"><span style="display:inline-block;transform:scaleX(1.08)">-546</span></div>
<div class="cell" style="left:927.30px;top:500.12px;width:43.47px;height:14.24px;background:rgb(146,6,38)"></div>
<div class="c b" style="left:927.30px;top:502px;width:43.17px;line-height:1;font-size:10.8px;color:#f2f2f6"><span style="display:inline-block;transform:scaleX(1.08)">-574</span></div>
<div class="cell" style="left:970.47px;top:500.12px;width:43.47px;height:14.24px;background:rgb(155,5,38)"></div>
<div class="c b" style="left:970.47px;top:502px;width:43.17px;line-height:1;font-size:10.8px;color:#f2f2f6"><span style="display:inline-block;transform:scaleX(1.08)">-604</span></div>
<div class="cell" style="left:1013.65px;top:500.12px;width:43.47px;height:14.24px;background:rgb(174,5,38)"></div>
<div class="c b" style="left:1013.65px;top:502px;width:43.17px;line-height:1;font-size:10.8px;color:#f2f2f6"><span style="display:inline-block;transform:scaleX(1.08)">-664</span></div>
<div class="cell" style="left:1056.82px;top:500.12px;width:43.47px;height:14.24px;background:rgb(182,5,38)"></div>
<div class="c b" style="left:1056.82px;top:502px;width:43.17px;line-height:1;font-size:10.8px;color:#f2f2f6"><span style="display:inline-block;transform:scaleX(1.08)">-687</span></div>
<div class="cell" style="left:236.50px;top:514.06px;width:43.47px;height:14.24px;background:rgb(35,8,36)"></div>
<div class="c b" style="left:236.50px;top:516px;width:43.17px;line-height:1;font-size:10.8px;color:#f2f2f6"><span style="display:inline-block;transform:scaleX(1.08)">-<span style="margin-left:-0.8px;margin-right:-1.2px">1</span>46</span></div>
<div class="cell" style="left:279.68px;top:514.06px;width:43.47px;height:14.24px;background:rgb(41,7,36)"></div>
<div class="c b" style="left:279.68px;top:516px;width:43.17px;line-height:1;font-size:10.8px;color:#f2f2f6"><span style="display:inline-block;transform:scaleX(1.08)">-<span style="margin-left:-0.8px;margin-right:-1.2px">1</span>78</span></div>
<div class="cell" style="left:322.85px;top:514.06px;width:43.47px;height:14.24px;background:rgb(45,7,36)"></div>
<div class="c b" style="left:322.85px;top:516px;width:43.17px;line-height:1;font-size:10.8px;color:#f2f2f6"><span style="display:inline-block;transform:scaleX(1.08)">-<span style="margin-left:-0.8px;margin-right:-1.2px">1</span>94</span></div>
<div class="cell" style="left:366.02px;top:514.06px;width:43.47px;height:14.24px;background:rgb(49,7,36)"></div>
<div class="c b" style="left:366.02px;top:516px;width:43.17px;line-height:1;font-size:10.8px;color:#f2f2f6"><span style="display:inline-block;transform:scaleX(1.08)">-2<span style="margin-left:-0.8px;margin-right:-1.2px">1</span><span style="margin-left:-0.8px;margin-right:-1.2px">1</span></span></div>
<div class="cell" style="left:409.20px;top:514.06px;width:43.47px;height:14.24px;background:rgb(56,7,37)"></div>
<div class="c b" style="left:409.20px;top:516px;width:43.17px;line-height:1;font-size:10.8px;color:#f2f2f6"><span style="display:inline-block;transform:scaleX(1.08)">-245</span></div>
<div class="cell" style="left:452.38px;top:514.06px;width:43.47px;height:14.24px;background:rgb(63,7,37)"></div>
<div class="c b" style="left:452.38px;top:516px;width:43.17px;line-height:1;font-size:10.8px;color:#f2f2f6"><span style="display:inline-block;transform:scaleX(1.08)">-27<span style="margin-left:-0.8px;margin-right:-1.2px">1</span></span></div>
<div class="cell" style="left:495.55px;top:514.06px;width:43.47px;height:14.24px;background:rgb(69,7,37)"></div>
<div class="c b" style="left:495.55px;top:516px;width:43.17px;line-height:1;font-size:10.8px;color:#f2f2f6"><span style="display:inline-block;transform:scaleX(1.08)">-298</span></div>
<div class="cell" style="left:538.72px;top:514.06px;width:43.47px;height:14.24px;background:rgb(76,7,37)"></div>
<div class="c b" style="left:538.72px;top:516px;width:43.17px;line-height:1;font-size:10.8px;color:#f2f2f6"><span style="display:inline-block;transform:scaleX(1.08)">-326</span></div>
<div class="cell" style="left:581.90px;top:514.06px;width:43.47px;height:14.24px;background:rgb(86,7,37)"></div>
<div class="c b" style="left:581.90px;top:516px;width:43.17px;line-height:1;font-size:10.8px;color:#f2f2f6"><span style="display:inline-block;transform:scaleX(1.08)">-364</span></div>
<div class="cell" style="left:625.08px;top:514.06px;width:43.47px;height:14.24px;background:rgb(91,7,37)"></div>
<div class="c b" style="left:625.08px;top:516px;width:43.17px;line-height:1;font-size:10.8px;color:#f2f2f6"><span style="display:inline-block;transform:scaleX(1.08)">-383</span></div>
<div class="cell" style="left:668.25px;top:514.06px;width:43.47px;height:14.24px;background:rgb(97,6,37)"></div>
<div class="c b" style="left:668.25px;top:516px;width:43.17px;line-height:1;font-size:10.8px;color:#f2f2f6"><span style="display:inline-block;transform:scaleX(1.08)">-403</span></div>
<div class="cell" style="left:711.42px;top:514.06px;width:43.47px;height:14.24px;background:rgb(108,6,37)"></div>
<div class="c b" style="left:711.42px;top:516px;width:43.17px;line-height:1;font-size:10.8px;color:#f2f2f6"><span style="display:inline-block;transform:scaleX(1.08)">-444</span></div>
<div class="cell" style="left:754.60px;top:514.06px;width:43.47px;height:14.24px;background:rgb(117,6,37)"></div>
<div class="c b" style="left:754.60px;top:516px;width:43.17px;line-height:1;font-size:10.8px;color:#f2f2f6"><span style="display:inline-block;transform:scaleX(1.08)">-476</span></div>
<div class="cell" style="left:797.77px;top:514.06px;width:43.47px;height:14.24px;background:rgb(127,6,37)"></div>
<div class="c b" style="left:797.77px;top:516px;width:43.17px;line-height:1;font-size:10.8px;color:#f2f2f6"><span style="display:inline-block;transform:scaleX(1.08)">-509</span></div>
<div class="cell" style="left:840.95px;top:514.06px;width:43.47px;height:14.24px;background:rgb(137,6,37)"></div>
<div class="c b" style="left:840.95px;top:516px;width:43.17px;line-height:1;font-size:10.8px;color:#f2f2f6"><span style="display:inline-block;transform:scaleX(1.08)">-543</span></div>
<div class="cell" style="left:884.12px;top:514.06px;width:43.47px;height:14.24px;background:rgb(151,6,38)"></div>
<div class="c b" style="left:884.12px;top:516px;width:43.17px;line-height:1;font-size:10.8px;color:#f2f2f6"><span style="display:inline-block;transform:scaleX(1.08)">-590</span></div>
<div class="cell" style="left:927.30px;top:514.06px;width:43.47px;height:14.24px;background:rgb(158,5,38)"></div>
<div class="c b" style="left:927.30px;top:516px;width:43.17px;line-height:1;font-size:10.8px;color:#f2f2f6"><span style="display:inline-block;transform:scaleX(1.08)">-6<span style="margin-left:-0.8px;margin-right:-1.2px">1</span>4</span></div>
<div class="cell" style="left:970.47px;top:514.06px;width:43.47px;height:14.24px;background:rgb(166,5,38)"></div>
<div class="c b" style="left:970.47px;top:516px;width:43.17px;line-height:1;font-size:10.8px;color:#f2f2f6"><span style="display:inline-block;transform:scaleX(1.08)">-637</span></div>
<div class="cell" style="left:1013.65px;top:514.06px;width:43.47px;height:14.24px;background:rgb(179,5,38)"></div>
<div class="c b" style="left:1013.65px;top:516px;width:43.17px;line-height:1;font-size:10.8px;color:#f2f2f6"><span style="display:inline-block;transform:scaleX(1.08)">-678</span></div>
<div class="cell" style="left:1056.82px;top:514.06px;width:43.47px;height:14.24px;background:rgb(182,5,38)"></div>
<div class="c b" style="left:1056.82px;top:516px;width:43.17px;line-height:1;font-size:10.8px;color:#f2f2f6"><span style="display:inline-block;transform:scaleX(1.08)">-687</span></div>
<div class="cell" style="left:236.50px;top:528.00px;width:43.47px;height:14.24px;background:rgb(42,7,36)"></div>
<div class="c b" style="left:236.50px;top:530px;width:43.17px;line-height:1;font-size:10.8px;color:#f2f2f6"><span style="display:inline-block;transform:scaleX(1.08)">-<span style="margin-left:-0.8px;margin-right:-1.2px">1</span>83</span></div>
<div class="cell" style="left:279.68px;top:528.00px;width:43.47px;height:14.24px;background:rgb(50,7,36)"></div>
<div class="c b" style="left:279.68px;top:530px;width:43.17px;line-height:1;font-size:10.8px;color:#f2f2f6"><span style="display:inline-block;transform:scaleX(1.08)">-2<span style="margin-left:-0.8px;margin-right:-1.2px">1</span>5</span></div>
<div class="cell" style="left:322.85px;top:528.00px;width:43.47px;height:14.24px;background:rgb(53,7,37)"></div>
<div class="c b" style="left:322.85px;top:530px;width:43.17px;line-height:1;font-size:10.8px;color:#f2f2f6"><span style="display:inline-block;transform:scaleX(1.08)">-23<span style="margin-left:-0.8px;margin-right:-1.2px">1</span></span></div>
<div class="cell" style="left:366.02px;top:528.00px;width:43.47px;height:14.24px;background:rgb(57,7,37)"></div>
<div class="c b" style="left:366.02px;top:530px;width:43.17px;line-height:1;font-size:10.8px;color:#f2f2f6"><span style="display:inline-block;transform:scaleX(1.08)">-247</span></div>
<div class="cell" style="left:409.20px;top:528.00px;width:43.47px;height:14.24px;background:rgb(65,7,37)"></div>
<div class="c b" style="left:409.20px;top:530px;width:43.17px;line-height:1;font-size:10.8px;color:#f2f2f6"><span style="display:inline-block;transform:scaleX(1.08)">-280</span></div>
<div class="cell" style="left:452.38px;top:528.00px;width:43.47px;height:14.24px;background:rgb(71,7,37)"></div>
<div class="c b" style="left:452.38px;top:530px;width:43.17px;line-height:1;font-size:10.8px;color:#f2f2f6"><span style="display:inline-block;transform:scaleX(1.08)">-306</span></div>
<div class="cell" style="left:495.55px;top:528.00px;width:43.47px;height:14.24px;background:rgb(78,7,37)"></div>
<div class="c b" style="left:495.55px;top:530px;width:43.17px;line-height:1;font-size:10.8px;color:#f2f2f6"><span style="display:inline-block;transform:scaleX(1.08)">-332</span></div>
<div class="cell" style="left:538.72px;top:528.00px;width:43.47px;height:14.24px;background:rgb(84,7,37)"></div>
<div class="c b" style="left:538.72px;top:530px;width:43.17px;line-height:1;font-size:10.8px;color:#f2f2f6"><span style="display:inline-block;transform:scaleX(1.08)">-358</span></div>
<div class="cell" style="left:581.90px;top:528.00px;width:43.47px;height:14.24px;background:rgb(94,7,37)"></div>
<div class="c b" style="left:581.90px;top:530px;width:43.17px;line-height:1;font-size:10.8px;color:#f2f2f6"><span style="display:inline-block;transform:scaleX(1.08)">-395</span></div>
<div class="cell" style="left:625.08px;top:528.00px;width:43.47px;height:14.24px;background:rgb(100,6,37)"></div>
<div class="c b" style="left:625.08px;top:530px;width:43.17px;line-height:1;font-size:10.8px;color:#f2f2f6"><span style="display:inline-block;transform:scaleX(1.08)">-4<span style="margin-left:-0.8px;margin-right:-1.2px">1</span>4</span></div>
<div class="cell" style="left:668.25px;top:528.00px;width:43.47px;height:14.24px;background:rgb(105,6,37)"></div>
<div class="c b" style="left:668.25px;top:530px;width:43.17px;line-height:1;font-size:10.8px;color:#f2f2f6"><span style="display:inline-block;transform:scaleX(1.08)">-433</span></div>
<div class="cell" style="left:711.42px;top:528.00px;width:43.47px;height:14.24px;background:rgb(116,6,37)"></div>
<div class="c b" style="left:711.42px;top:530px;width:43.17px;line-height:1;font-size:10.8px;color:#f2f2f6"><span style="display:inline-block;transform:scaleX(1.08)">-472</span></div>
<div class="cell" style="left:754.60px;top:528.00px;width:43.47px;height:14.24px;background:rgb(124,6,37)"></div>
<div class="c b" style="left:754.60px;top:530px;width:43.17px;line-height:1;font-size:10.8px;color:#f2f2f6"><span style="display:inline-block;transform:scaleX(1.08)">-502</span></div>
<div class="cell" style="left:797.77px;top:528.00px;width:43.47px;height:14.24px;background:rgb(134,6,37)"></div>
<div class="c b" style="left:797.77px;top:530px;width:43.17px;line-height:1;font-size:10.8px;color:#f2f2f6"><span style="display:inline-block;transform:scaleX(1.08)">-533</span></div>
<div class="cell" style="left:840.95px;top:528.00px;width:43.47px;height:14.24px;background:rgb(143,6,38)"></div>
<div class="c b" style="left:840.95px;top:530px;width:43.17px;line-height:1;font-size:10.8px;color:#f2f2f6"><span style="display:inline-block;transform:scaleX(1.08)">-565</span></div>
<div class="cell" style="left:884.12px;top:528.00px;width:43.47px;height:14.24px;background:rgb(157,5,38)"></div>
<div class="c b" style="left:884.12px;top:530px;width:43.17px;line-height:1;font-size:10.8px;color:#f2f2f6"><span style="display:inline-block;transform:scaleX(1.08)">-608</span></div>
<div class="cell" style="left:927.30px;top:528.00px;width:43.47px;height:14.24px;background:rgb(163,5,38)"></div>
<div class="c b" style="left:927.30px;top:530px;width:43.17px;line-height:1;font-size:10.8px;color:#f2f2f6"><span style="display:inline-block;transform:scaleX(1.08)">-629</span></div>
<div class="cell" style="left:970.47px;top:528.00px;width:43.47px;height:14.24px;background:rgb(170,5,38)"></div>
<div class="c b" style="left:970.47px;top:530px;width:43.17px;line-height:1;font-size:10.8px;color:#f2f2f6"><span style="display:inline-block;transform:scaleX(1.08)">-649</span></div>
<div class="cell" style="left:1013.65px;top:528.00px;width:43.47px;height:14.24px;background:rgb(180,5,38)"></div>
<div class="c b" style="left:1013.65px;top:530px;width:43.17px;line-height:1;font-size:10.8px;color:#f2f2f6"><span style="display:inline-block;transform:scaleX(1.08)">-682</span></div>
<div class="cell" style="left:1056.82px;top:528.00px;width:43.47px;height:14.24px;background:rgb(182,5,38)"></div>
<div class="c b" style="left:1056.82px;top:530px;width:43.17px;line-height:1;font-size:10.8px;color:#f2f2f6"><span style="display:inline-block;transform:scaleX(1.08)">-687</span></div>
<div class="cell" style="left:236.50px;top:541.93px;width:43.47px;height:14.24px;background:rgb(58,7,37)"></div>
<div class="c b" style="left:236.50px;top:544px;width:43.17px;line-height:1;font-size:10.8px;color:#f2f2f6"><span style="display:inline-block;transform:scaleX(1.08)">-253</span></div>
<div class="cell" style="left:279.68px;top:541.93px;width:43.47px;height:14.24px;background:rgb(66,7,37)"></div>
<div class="c b" style="left:279.68px;top:544px;width:43.17px;line-height:1;font-size:10.8px;color:#f2f2f6"><span style="display:inline-block;transform:scaleX(1.08)">-283</span></div>
<div class="cell" style="left:322.85px;top:541.93px;width:43.47px;height:14.24px;background:rgb(69,7,37)"></div>
<div class="c b" style="left:322.85px;top:544px;width:43.17px;line-height:1;font-size:10.8px;color:#f2f2f6"><span style="display:inline-block;transform:scaleX(1.08)">-298</span></div>
<div class="cell" style="left:366.02px;top:541.93px;width:43.47px;height:14.24px;background:rgb(73,7,37)"></div>
<div class="c b" style="left:366.02px;top:544px;width:43.17px;line-height:1;font-size:10.8px;color:#f2f2f6"><span style="display:inline-block;transform:scaleX(1.08)">-3<span style="margin-left:-0.8px;margin-right:-1.2px">1</span>4</span></div>
<div class="cell" style="left:409.20px;top:541.93px;width:43.47px;height:14.24px;background:rgb(81,7,37)"></div>
<div class="c b" style="left:409.20px;top:544px;width:43.17px;line-height:1;font-size:10.8px;color:#f2f2f6"><span style="display:inline-block;transform:scaleX(1.08)">-345</span></div>
<div class="cell" style="left:452.38px;top:541.93px;width:43.47px;height:14.24px;background:rgb(87,7,37)"></div>
<div class="c b" style="left:452.38px;top:544px;width:43.17px;line-height:1;font-size:10.8px;color:#f2f2f6"><span style="display:inline-block;transform:scaleX(1.08)">-369</span></div>
<div class="cell" style="left:495.55px;top:541.93px;width:43.47px;height:14.24px;background:rgb(94,7,37)"></div>
<div class="c b" style="left:495.55px;top:544px;width:43.17px;line-height:1;font-size:10.8px;color:#f2f2f6"><span style="display:inline-block;transform:scaleX(1.08)">-393</span></div>
<div class="cell" style="left:538.72px;top:541.93px;width:43.47px;height:14.24px;background:rgb(101,6,37)"></div>
<div class="c b" style="left:538.72px;top:544px;width:43.17px;line-height:1;font-size:10.8px;color:#f2f2f6"><span style="display:inline-block;transform:scaleX(1.08)">-4<span style="margin-left:-0.8px;margin-right:-1.2px">1</span>8</span></div>
<div class="cell" style="left:581.90px;top:541.93px;width:43.47px;height:14.24px;background:rgb(110,6,37)"></div>
<div class="c b" style="left:581.90px;top:544px;width:43.17px;line-height:1;font-size:10.8px;color:#f2f2f6"><span style="display:inline-block;transform:scaleX(1.08)">-45<span style="margin-left:-0.8px;margin-right:-1.2px">1</span></span></div>
<div class="cell" style="left:625.08px;top:541.93px;width:43.47px;height:14.24px;background:rgb(115,6,37)"></div>
<div class="c b" style="left:625.08px;top:544px;width:43.17px;line-height:1;font-size:10.8px;color:#f2f2f6"><span style="display:inline-block;transform:scaleX(1.08)">-468</span></div>
<div class="cell" style="left:668.25px;top:541.93px;width:43.47px;height:14.24px;background:rgb(120,6,37)"></div>
<div class="c b" style="left:668.25px;top:544px;width:43.17px;line-height:1;font-size:10.8px;color:#f2f2f6"><span style="display:inline-block;transform:scaleX(1.08)">-485</span></div>
<div class="cell" style="left:711.42px;top:541.93px;width:43.47px;height:14.24px;background:rgb(130,6,37)"></div>
<div class="c b" style="left:711.42px;top:544px;width:43.17px;line-height:1;font-size:10.8px;color:#f2f2f6"><span style="display:inline-block;transform:scaleX(1.08)">-520</span></div>
<div class="cell" style="left:754.60px;top:541.93px;width:43.47px;height:14.24px;background:rgb(138,6,37)"></div>
<div class="c b" style="left:754.60px;top:544px;width:43.17px;line-height:1;font-size:10.8px;color:#f2f2f6"><span style="display:inline-block;transform:scaleX(1.08)">-547</span></div>
<div class="cell" style="left:797.77px;top:541.93px;width:43.47px;height:14.24px;background:rgb(146,6,38)"></div>
<div class="c b" style="left:797.77px;top:544px;width:43.17px;line-height:1;font-size:10.8px;color:#f2f2f6"><span style="display:inline-block;transform:scaleX(1.08)">-574</span></div>
<div class="cell" style="left:840.95px;top:541.93px;width:43.47px;height:14.24px;background:rgb(154,5,38)"></div>
<div class="c b" style="left:840.95px;top:544px;width:43.17px;line-height:1;font-size:10.8px;color:#f2f2f6"><span style="display:inline-block;transform:scaleX(1.08)">-60<span style="margin-left:-0.8px;margin-right:-1.2px">1</span></span></div>
<div class="cell" style="left:884.12px;top:541.93px;width:43.47px;height:14.24px;background:rgb(165,5,38)"></div>
<div class="c b" style="left:884.12px;top:544px;width:43.17px;line-height:1;font-size:10.8px;color:#f2f2f6"><span style="display:inline-block;transform:scaleX(1.08)">-636</span></div>
<div class="cell" style="left:927.30px;top:541.93px;width:43.47px;height:14.24px;background:rgb(170,5,38)"></div>
<div class="c b" style="left:927.30px;top:544px;width:43.17px;line-height:1;font-size:10.8px;color:#f2f2f6"><span style="display:inline-block;transform:scaleX(1.08)">-652</span></div>
<div class="cell" style="left:970.47px;top:541.93px;width:43.47px;height:14.24px;background:rgb(175,5,38)"></div>
<div class="c b" style="left:970.47px;top:544px;width:43.17px;line-height:1;font-size:10.8px;color:#f2f2f6"><span style="display:inline-block;transform:scaleX(1.08)">-666</span></div>
<div class="cell" style="left:1013.65px;top:541.93px;width:43.47px;height:14.24px;background:rgb(182,5,38)"></div>
<div class="c b" style="left:1013.65px;top:544px;width:43.17px;line-height:1;font-size:10.8px;color:#f2f2f6"><span style="display:inline-block;transform:scaleX(1.08)">-686</span></div>
<div class="cell" style="left:1056.82px;top:541.93px;width:43.47px;height:14.24px;background:rgb(182,5,38)"></div>
<div class="c b" style="left:1056.82px;top:544px;width:43.17px;line-height:1;font-size:10.8px;color:#f2f2f6"><span style="display:inline-block;transform:scaleX(1.08)">-687</span></div>
<div class="cell" style="left:236.50px;top:555.87px;width:43.47px;height:14.24px;background:rgb(74,7,37)"></div>
<div class="c b" style="left:236.50px;top:558px;width:43.17px;line-height:1;font-size:10.8px;color:#f2f2f6"><span style="display:inline-block;transform:scaleX(1.08)">-3<span style="margin-left:-0.8px;margin-right:-1.2px">1</span>7</span></div>
<div class="cell" style="left:279.68px;top:555.87px;width:43.47px;height:14.24px;background:rgb(81,7,37)"></div>
<div class="c b" style="left:279.68px;top:558px;width:43.17px;line-height:1;font-size:10.8px;color:#f2f2f6"><span style="display:inline-block;transform:scaleX(1.08)">-345</span></div>
<div class="cell" style="left:322.85px;top:555.87px;width:43.47px;height:14.24px;background:rgb(85,7,37)"></div>
<div class="c b" style="left:322.85px;top:558px;width:43.17px;line-height:1;font-size:10.8px;color:#f2f2f6"><span style="display:inline-block;transform:scaleX(1.08)">-359</span></div>
<div class="cell" style="left:366.02px;top:555.87px;width:43.47px;height:14.24px;background:rgb(88,7,37)"></div>
<div class="c b" style="left:366.02px;top:558px;width:43.17px;line-height:1;font-size:10.8px;color:#f2f2f6"><span style="display:inline-block;transform:scaleX(1.08)">-373</span></div>
<div class="cell" style="left:409.20px;top:555.87px;width:43.47px;height:14.24px;background:rgb(96,6,37)"></div>
<div class="c b" style="left:409.20px;top:558px;width:43.17px;line-height:1;font-size:10.8px;color:#f2f2f6"><span style="display:inline-block;transform:scaleX(1.08)">-402</span></div>
<div class="cell" style="left:452.38px;top:555.87px;width:43.47px;height:14.24px;background:rgb(102,6,37)"></div>
<div class="c b" style="left:452.38px;top:558px;width:43.17px;line-height:1;font-size:10.8px;color:#f2f2f6"><span style="display:inline-block;transform:scaleX(1.08)">-424</span></div>
<div class="cell" style="left:495.55px;top:555.87px;width:43.47px;height:14.24px;background:rgb(108,6,37)"></div>
<div class="c b" style="left:495.55px;top:558px;width:43.17px;line-height:1;font-size:10.8px;color:#f2f2f6"><span style="display:inline-block;transform:scaleX(1.08)">-446</span></div>
<div class="cell" style="left:538.72px;top:555.87px;width:43.47px;height:14.24px;background:rgb(115,6,37)"></div>
<div class="c b" style="left:538.72px;top:558px;width:43.17px;line-height:1;font-size:10.8px;color:#f2f2f6"><span style="display:inline-block;transform:scaleX(1.08)">-469</span></div>
<div class="cell" style="left:581.90px;top:555.87px;width:43.47px;height:14.24px;background:rgb(124,6,37)"></div>
<div class="c b" style="left:581.90px;top:558px;width:43.17px;line-height:1;font-size:10.8px;color:#f2f2f6"><span style="display:inline-block;transform:scaleX(1.08)">-499</span></div>
<div class="cell" style="left:625.08px;top:555.87px;width:43.47px;height:14.24px;background:rgb(128,6,37)"></div>
<div class="c b" style="left:625.08px;top:558px;width:43.17px;line-height:1;font-size:10.8px;color:#f2f2f6"><span style="display:inline-block;transform:scaleX(1.08)">-5<span style="margin-left:-0.8px;margin-right:-1.2px">1</span>4</span></div>
<div class="cell" style="left:668.25px;top:555.87px;width:43.47px;height:14.24px;background:rgb(133,6,37)"></div>
<div class="c b" style="left:668.25px;top:558px;width:43.17px;line-height:1;font-size:10.8px;color:#f2f2f6"><span style="display:inline-block;transform:scaleX(1.08)">-530</span></div>
<div class="cell" style="left:711.42px;top:555.87px;width:43.47px;height:14.24px;background:rgb(142,6,38)"></div>
<div class="c b" style="left:711.42px;top:558px;width:43.17px;line-height:1;font-size:10.8px;color:#f2f2f6"><span style="display:inline-block;transform:scaleX(1.08)">-560</span></div>
<div class="cell" style="left:754.60px;top:555.87px;width:43.47px;height:14.24px;background:rgb(149,6,38)"></div>
<div class="c b" style="left:754.60px;top:558px;width:43.17px;line-height:1;font-size:10.8px;color:#f2f2f6"><span style="display:inline-block;transform:scaleX(1.08)">-583</span></div>
<div class="cell" style="left:797.77px;top:555.87px;width:43.47px;height:14.24px;background:rgb(156,5,38)"></div>
<div class="c b" style="left:797.77px;top:558px;width:43.17px;line-height:1;font-size:10.8px;color:#f2f2f6"><span style="display:inline-block;transform:scaleX(1.08)">-606</span></div>
<div class="cell" style="left:840.95px;top:555.87px;width:43.47px;height:14.24px;background:rgb(163,5,38)"></div>
<div class="c b" style="left:840.95px;top:558px;width:43.17px;line-height:1;font-size:10.8px;color:#f2f2f6"><span style="display:inline-block;transform:scaleX(1.08)">-628</span></div>
<div class="cell" style="left:884.12px;top:555.87px;width:43.47px;height:14.24px;background:rgb(171,5,38)"></div>
<div class="c b" style="left:884.12px;top:558px;width:43.17px;line-height:1;font-size:10.8px;color:#f2f2f6"><span style="display:inline-block;transform:scaleX(1.08)">-655</span></div>
<div class="cell" style="left:927.30px;top:555.87px;width:43.47px;height:14.24px;background:rgb(175,5,38)"></div>
<div class="c b" style="left:927.30px;top:558px;width:43.17px;line-height:1;font-size:10.8px;color:#f2f2f6"><span style="display:inline-block;transform:scaleX(1.08)">-667</span></div>
<div class="cell" style="left:970.47px;top:555.87px;width:43.47px;height:14.24px;background:rgb(178,5,38)"></div>
<div class="c b" style="left:970.47px;top:558px;width:43.17px;line-height:1;font-size:10.8px;color:#f2f2f6"><span style="display:inline-block;transform:scaleX(1.08)">-676</span></div>
<div class="cell" style="left:1013.65px;top:555.87px;width:43.47px;height:14.24px;background:rgb(182,5,38)"></div>
<div class="c b" style="left:1013.65px;top:558px;width:43.17px;line-height:1;font-size:10.8px;color:#f2f2f6"><span style="display:inline-block;transform:scaleX(1.08)">-687</span></div>
<div class="cell" style="left:1056.82px;top:555.87px;width:43.47px;height:14.24px;background:rgb(182,5,38)"></div>
<div class="c b" style="left:1056.82px;top:558px;width:43.17px;line-height:1;font-size:10.8px;color:#f2f2f6"><span style="display:inline-block;transform:scaleX(1.08)">-687</span></div>
<div class="cell" style="left:236.50px;top:569.81px;width:43.47px;height:14.24px;background:rgb(81,7,37)"></div>
<div class="c b" style="left:236.50px;top:572px;width:43.17px;line-height:1;font-size:10.8px;color:#f2f2f6"><span style="display:inline-block;transform:scaleX(1.08)">-346</span></div>
<div class="cell" style="left:279.68px;top:569.81px;width:43.47px;height:14.24px;background:rgb(88,7,37)"></div>
<div class="c b" style="left:279.68px;top:572px;width:43.17px;line-height:1;font-size:10.8px;color:#f2f2f6"><span style="display:inline-block;transform:scaleX(1.08)">-373</span></div>
<div class="cell" style="left:322.85px;top:569.81px;width:43.47px;height:14.24px;background:rgb(92,7,37)"></div>
<div class="c b" style="left:322.85px;top:572px;width:43.17px;line-height:1;font-size:10.8px;color:#f2f2f6"><span style="display:inline-block;transform:scaleX(1.08)">-386</span></div>
<div class="cell" style="left:366.02px;top:569.81px;width:43.47px;height:14.24px;background:rgb(96,6,37)"></div>
<div class="c b" style="left:366.02px;top:572px;width:43.17px;line-height:1;font-size:10.8px;color:#f2f2f6"><span style="display:inline-block;transform:scaleX(1.08)">-400</span></div>
<div class="cell" style="left:409.20px;top:569.81px;width:43.47px;height:14.24px;background:rgb(103,6,37)"></div>
<div class="c b" style="left:409.20px;top:572px;width:43.17px;line-height:1;font-size:10.8px;color:#f2f2f6"><span style="display:inline-block;transform:scaleX(1.08)">-428</span></div>
<div class="cell" style="left:452.38px;top:569.81px;width:43.47px;height:14.24px;background:rgb(109,6,37)"></div>
<div class="c b" style="left:452.38px;top:572px;width:43.17px;line-height:1;font-size:10.8px;color:#f2f2f6"><span style="display:inline-block;transform:scaleX(1.08)">-449</span></div>
<div class="cell" style="left:495.55px;top:569.81px;width:43.47px;height:14.24px;background:rgb(115,6,37)"></div>
<div class="c b" style="left:495.55px;top:572px;width:43.17px;line-height:1;font-size:10.8px;color:#f2f2f6"><span style="display:inline-block;transform:scaleX(1.08)">-470</span></div>
<div class="cell" style="left:538.72px;top:569.81px;width:43.47px;height:14.24px;background:rgb(121,6,37)"></div>
<div class="c b" style="left:538.72px;top:572px;width:43.17px;line-height:1;font-size:10.8px;color:#f2f2f6"><span style="display:inline-block;transform:scaleX(1.08)">-49<span style="margin-left:-0.8px;margin-right:-1.2px">1</span></span></div>
<div class="cell" style="left:581.90px;top:569.81px;width:43.47px;height:14.24px;background:rgb(130,6,37)"></div>
<div class="c b" style="left:581.90px;top:572px;width:43.17px;line-height:1;font-size:10.8px;color:#f2f2f6"><span style="display:inline-block;transform:scaleX(1.08)">-520</span></div>
<div class="cell" style="left:625.08px;top:569.81px;width:43.47px;height:14.24px;background:rgb(134,6,37)"></div>
<div class="c b" style="left:625.08px;top:572px;width:43.17px;line-height:1;font-size:10.8px;color:#f2f2f6"><span style="display:inline-block;transform:scaleX(1.08)">-534</span></div>
<div class="cell" style="left:668.25px;top:569.81px;width:43.47px;height:14.24px;background:rgb(138,6,37)"></div>
<div class="c b" style="left:668.25px;top:572px;width:43.17px;line-height:1;font-size:10.8px;color:#f2f2f6"><span style="display:inline-block;transform:scaleX(1.08)">-549</span></div>
<div class="cell" style="left:711.42px;top:569.81px;width:43.47px;height:14.24px;background:rgb(147,6,38)"></div>
<div class="c b" style="left:711.42px;top:572px;width:43.17px;line-height:1;font-size:10.8px;color:#f2f2f6"><span style="display:inline-block;transform:scaleX(1.08)">-577</span></div>
<div class="cell" style="left:754.60px;top:569.81px;width:43.47px;height:14.24px;background:rgb(154,5,38)"></div>
<div class="c b" style="left:754.60px;top:572px;width:43.17px;line-height:1;font-size:10.8px;color:#f2f2f6"><span style="display:inline-block;transform:scaleX(1.08)">-599</span></div>
<div class="cell" style="left:797.77px;top:569.81px;width:43.47px;height:14.24px;background:rgb(160,5,38)"></div>
<div class="c b" style="left:797.77px;top:572px;width:43.17px;line-height:1;font-size:10.8px;color:#f2f2f6"><span style="display:inline-block;transform:scaleX(1.08)">-6<span style="margin-left:-0.8px;margin-right:-1.2px">1</span>9</span></div>
<div class="cell" style="left:840.95px;top:569.81px;width:43.47px;height:14.24px;background:rgb(166,5,38)"></div>
<div class="c b" style="left:840.95px;top:572px;width:43.17px;line-height:1;font-size:10.8px;color:#f2f2f6"><span style="display:inline-block;transform:scaleX(1.08)">-639</span></div>
<div class="cell" style="left:884.12px;top:569.81px;width:43.47px;height:14.24px;background:rgb(174,5,38)"></div>
<div class="c b" style="left:884.12px;top:572px;width:43.17px;line-height:1;font-size:10.8px;color:#f2f2f6"><span style="display:inline-block;transform:scaleX(1.08)">-662</span></div>
<div class="cell" style="left:927.30px;top:569.81px;width:43.47px;height:14.24px;background:rgb(177,5,38)"></div>
<div class="c b" style="left:927.30px;top:572px;width:43.17px;line-height:1;font-size:10.8px;color:#f2f2f6"><span style="display:inline-block;transform:scaleX(1.08)">-672</span></div>
<div class="cell" style="left:970.47px;top:569.81px;width:43.47px;height:14.24px;background:rgb(180,5,38)"></div>
<div class="c b" style="left:970.47px;top:572px;width:43.17px;line-height:1;font-size:10.8px;color:#f2f2f6"><span style="display:inline-block;transform:scaleX(1.08)">-680</span></div>
<div class="cell" style="left:1013.65px;top:569.81px;width:43.47px;height:14.24px;background:rgb(182,5,38)"></div>
<div class="c b" style="left:1013.65px;top:572px;width:43.17px;line-height:1;font-size:10.8px;color:#f2f2f6"><span style="display:inline-block;transform:scaleX(1.08)">-687</span></div>
<div class="cell" style="left:1056.82px;top:569.81px;width:43.47px;height:14.24px;background:rgb(182,5,38)"></div>
<div class="c b" style="left:1056.82px;top:572px;width:43.17px;line-height:1;font-size:10.8px;color:#f2f2f6"><span style="display:inline-block;transform:scaleX(1.08)">-687</span></div>
<div class="cell" style="left:236.50px;top:583.75px;width:43.47px;height:14.24px;background:rgb(95,7,37)"></div>
<div class="c b" style="left:236.50px;top:586px;width:43.17px;line-height:1;font-size:10.8px;color:#f2f2f6"><span style="display:inline-block;transform:scaleX(1.08)">-399</span></div>
<div class="cell" style="left:279.68px;top:583.75px;width:43.47px;height:14.24px;background:rgb(102,6,37)"></div>
<div class="c b" style="left:279.68px;top:586px;width:43.17px;line-height:1;font-size:10.8px;color:#f2f2f6"><span style="display:inline-block;transform:scaleX(1.08)">-424</span></div>
<div class="cell" style="left:322.85px;top:583.75px;width:43.47px;height:14.24px;background:rgb(106,6,37)"></div>
<div class="c b" style="left:322.85px;top:586px;width:43.17px;line-height:1;font-size:10.8px;color:#f2f2f6"><span style="display:inline-block;transform:scaleX(1.08)">-436</span></div>
<div class="cell" style="left:366.02px;top:583.75px;width:43.47px;height:14.24px;background:rgb(109,6,37)"></div>
<div class="c b" style="left:366.02px;top:586px;width:43.17px;line-height:1;font-size:10.8px;color:#f2f2f6"><span style="display:inline-block;transform:scaleX(1.08)">-449</span></div>
<div class="cell" style="left:409.20px;top:583.75px;width:43.47px;height:14.24px;background:rgb(116,6,37)"></div>
<div class="c b" style="left:409.20px;top:586px;width:43.17px;line-height:1;font-size:10.8px;color:#f2f2f6"><span style="display:inline-block;transform:scaleX(1.08)">-474</span></div>
<div class="cell" style="left:452.38px;top:583.75px;width:43.47px;height:14.24px;background:rgb(122,6,37)"></div>
<div class="c b" style="left:452.38px;top:586px;width:43.17px;line-height:1;font-size:10.8px;color:#f2f2f6"><span style="display:inline-block;transform:scaleX(1.08)">-493</span></div>
<div class="cell" style="left:495.55px;top:583.75px;width:43.47px;height:14.24px;background:rgb(127,6,37)"></div>
<div class="c b" style="left:495.55px;top:586px;width:43.17px;line-height:1;font-size:10.8px;color:#f2f2f6"><span style="display:inline-block;transform:scaleX(1.08)">-5<span style="margin-left:-0.8px;margin-right:-1.2px">1</span>2</span></div>
<div class="cell" style="left:538.72px;top:583.75px;width:43.47px;height:14.24px;background:rgb(133,6,37)"></div>
<div class="c b" style="left:538.72px;top:586px;width:43.17px;line-height:1;font-size:10.8px;color:#f2f2f6"><span style="display:inline-block;transform:scaleX(1.08)">-53<span style="margin-left:-0.8px;margin-right:-1.2px">1</span></span></div>
<div class="cell" style="left:581.90px;top:583.75px;width:43.47px;height:14.24px;background:rgb(141,6,38)"></div>
<div class="c b" style="left:581.90px;top:586px;width:43.17px;line-height:1;font-size:10.8px;color:#f2f2f6"><span style="display:inline-block;transform:scaleX(1.08)">-557</span></div>
<div class="cell" style="left:625.08px;top:583.75px;width:43.47px;height:14.24px;background:rgb(144,6,38)"></div>
<div class="c b" style="left:625.08px;top:586px;width:43.17px;line-height:1;font-size:10.8px;color:#f2f2f6"><span style="display:inline-block;transform:scaleX(1.08)">-569</span></div>
<div class="cell" style="left:668.25px;top:583.75px;width:43.47px;height:14.24px;background:rgb(148,6,38)"></div>
<div class="c b" style="left:668.25px;top:586px;width:43.17px;line-height:1;font-size:10.8px;color:#f2f2f6"><span style="display:inline-block;transform:scaleX(1.08)">-582</span></div>
<div class="cell" style="left:711.42px;top:583.75px;width:43.47px;height:14.24px;background:rgb(156,5,38)"></div>
<div class="c b" style="left:711.42px;top:586px;width:43.17px;line-height:1;font-size:10.8px;color:#f2f2f6"><span style="display:inline-block;transform:scaleX(1.08)">-606</span></div>
<div class="cell" style="left:754.60px;top:583.75px;width:43.47px;height:14.24px;background:rgb(162,5,38)"></div>
<div class="c b" style="left:754.60px;top:586px;width:43.17px;line-height:1;font-size:10.8px;color:#f2f2f6"><span style="display:inline-block;transform:scaleX(1.08)">-624</span></div>
<div class="cell" style="left:797.77px;top:583.75px;width:43.47px;height:14.24px;background:rgb(167,5,38)"></div>
<div class="c b" style="left:797.77px;top:586px;width:43.17px;line-height:1;font-size:10.8px;color:#f2f2f6"><span style="display:inline-block;transform:scaleX(1.08)">-640</span></div>
<div class="cell" style="left:840.95px;top:583.75px;width:43.47px;height:14.24px;background:rgb(172,5,38)"></div>
<div class="c b" style="left:840.95px;top:586px;width:43.17px;line-height:1;font-size:10.8px;color:#f2f2f6"><span style="display:inline-block;transform:scaleX(1.08)">-656</span></div>
<div class="cell" style="left:884.12px;top:583.75px;width:43.47px;height:14.24px;background:rgb(177,5,38)"></div>
<div class="c b" style="left:884.12px;top:586px;width:43.17px;line-height:1;font-size:10.8px;color:#f2f2f6"><span style="display:inline-block;transform:scaleX(1.08)">-673</span></div>
<div class="cell" style="left:927.30px;top:583.75px;width:43.47px;height:14.24px;background:rgb(179,5,38)"></div>
<div class="c b" style="left:927.30px;top:586px;width:43.17px;line-height:1;font-size:10.8px;color:#f2f2f6"><span style="display:inline-block;transform:scaleX(1.08)">-679</span></div>
<div class="cell" style="left:970.47px;top:583.75px;width:43.47px;height:14.24px;background:rgb(181,5,38)"></div>
<div class="c b" style="left:970.47px;top:586px;width:43.17px;line-height:1;font-size:10.8px;color:#f2f2f6"><span style="display:inline-block;transform:scaleX(1.08)">-684</span></div>
<div class="cell" style="left:1013.65px;top:583.75px;width:43.47px;height:14.24px;background:rgb(182,5,38)"></div>
<div class="c b" style="left:1013.65px;top:586px;width:43.17px;line-height:1;font-size:10.8px;color:#f2f2f6"><span style="display:inline-block;transform:scaleX(1.08)">-687</span></div>
<div class="cell" style="left:1056.82px;top:583.75px;width:43.47px;height:14.24px;background:rgb(182,5,38)"></div>
<div class="c b" style="left:1056.82px;top:586px;width:43.17px;line-height:1;font-size:10.8px;color:#f2f2f6"><span style="display:inline-block;transform:scaleX(1.08)">-687</span></div>
<div class="cell" style="left:236.50px;top:597.69px;width:43.47px;height:14.24px;background:rgb(108,6,37)"></div>
<div class="c b" style="left:236.50px;top:599px;width:43.17px;line-height:1;font-size:10.8px;color:#f2f2f6"><span style="display:inline-block;transform:scaleX(1.08)">-446</span></div>
<div class="cell" style="left:279.68px;top:597.69px;width:43.47px;height:14.24px;background:rgb(115,6,37)"></div>
<div class="c b" style="left:279.68px;top:599px;width:43.17px;line-height:1;font-size:10.8px;color:#f2f2f6"><span style="display:inline-block;transform:scaleX(1.08)">-469</span></div>
<div class="cell" style="left:322.85px;top:597.69px;width:43.47px;height:14.24px;background:rgb(118,6,37)"></div>
<div class="c b" style="left:322.85px;top:599px;width:43.17px;line-height:1;font-size:10.8px;color:#f2f2f6"><span style="display:inline-block;transform:scaleX(1.08)">-480</span></div>
<div class="cell" style="left:366.02px;top:597.69px;width:43.47px;height:14.24px;background:rgb(122,6,37)"></div>
<div class="c b" style="left:366.02px;top:599px;width:43.17px;line-height:1;font-size:10.8px;color:#f2f2f6"><span style="display:inline-block;transform:scaleX(1.08)">-492</span></div>
<div class="cell" style="left:409.20px;top:597.69px;width:43.47px;height:14.24px;background:rgb(128,6,37)"></div>
<div class="c b" style="left:409.20px;top:599px;width:43.17px;line-height:1;font-size:10.8px;color:#f2f2f6"><span style="display:inline-block;transform:scaleX(1.08)">-5<span style="margin-left:-0.8px;margin-right:-1.2px">1</span>4</span></div>
<div class="cell" style="left:452.38px;top:597.69px;width:43.47px;height:14.24px;background:rgb(133,6,37)"></div>
<div class="c b" style="left:452.38px;top:599px;width:43.17px;line-height:1;font-size:10.8px;color:#f2f2f6"><span style="display:inline-block;transform:scaleX(1.08)">-53<span style="margin-left:-0.8px;margin-right:-1.2px">1</span></span></div>
<div class="cell" style="left:495.55px;top:597.69px;width:43.47px;height:14.24px;background:rgb(138,6,37)"></div>
<div class="c b" style="left:495.55px;top:599px;width:43.17px;line-height:1;font-size:10.8px;color:#f2f2f6"><span style="display:inline-block;transform:scaleX(1.08)">-548</span></div>
<div class="cell" style="left:538.72px;top:597.69px;width:43.47px;height:14.24px;background:rgb(143,6,38)"></div>
<div class="c b" style="left:538.72px;top:599px;width:43.17px;line-height:1;font-size:10.8px;color:#f2f2f6"><span style="display:inline-block;transform:scaleX(1.08)">-565</span></div>
<div class="cell" style="left:581.90px;top:597.69px;width:43.47px;height:14.24px;background:rgb(150,6,38)"></div>
<div class="c b" style="left:581.90px;top:599px;width:43.17px;line-height:1;font-size:10.8px;color:#f2f2f6"><span style="display:inline-block;transform:scaleX(1.08)">-587</span></div>
<div class="cell" style="left:625.08px;top:597.69px;width:43.47px;height:14.24px;background:rgb(153,5,38)"></div>
<div class="c b" style="left:625.08px;top:599px;width:43.17px;line-height:1;font-size:10.8px;color:#f2f2f6"><span style="display:inline-block;transform:scaleX(1.08)">-598</span></div>
<div class="cell" style="left:668.25px;top:597.69px;width:43.47px;height:14.24px;background:rgb(157,5,38)"></div>
<div class="c b" style="left:668.25px;top:599px;width:43.17px;line-height:1;font-size:10.8px;color:#f2f2f6"><span style="display:inline-block;transform:scaleX(1.08)">-608</span></div>
<div class="cell" style="left:711.42px;top:597.69px;width:43.47px;height:14.24px;background:rgb(163,5,38)"></div>
<div class="c b" style="left:711.42px;top:599px;width:43.17px;line-height:1;font-size:10.8px;color:#f2f2f6"><span style="display:inline-block;transform:scaleX(1.08)">-629</span></div>
<div class="cell" style="left:754.60px;top:597.69px;width:43.47px;height:14.24px;background:rgb(168,5,38)"></div>
<div class="c b" style="left:754.60px;top:599px;width:43.17px;line-height:1;font-size:10.8px;color:#f2f2f6"><span style="display:inline-block;transform:scaleX(1.08)">-643</span></div>
<div class="cell" style="left:797.77px;top:597.69px;width:43.47px;height:14.24px;background:rgb(172,5,38)"></div>
<div class="c b" style="left:797.77px;top:599px;width:43.17px;line-height:1;font-size:10.8px;color:#f2f2f6"><span style="display:inline-block;transform:scaleX(1.08)">-656</span></div>
<div class="cell" style="left:840.95px;top:597.69px;width:43.47px;height:14.24px;background:rgb(175,5,38)"></div>
<div class="c b" style="left:840.95px;top:599px;width:43.17px;line-height:1;font-size:10.8px;color:#f2f2f6"><span style="display:inline-block;transform:scaleX(1.08)">-667</span></div>
<div class="cell" style="left:884.12px;top:597.69px;width:43.47px;height:14.24px;background:rgb(179,5,38)"></div>
<div class="c b" style="left:884.12px;top:599px;width:43.17px;line-height:1;font-size:10.8px;color:#f2f2f6"><span style="display:inline-block;transform:scaleX(1.08)">-679</span></div>
<div class="cell" style="left:927.30px;top:597.69px;width:43.47px;height:14.24px;background:rgb(181,5,38)"></div>
<div class="c b" style="left:927.30px;top:599px;width:43.17px;line-height:1;font-size:10.8px;color:#f2f2f6"><span style="display:inline-block;transform:scaleX(1.08)">-683</span></div>
<div class="cell" style="left:970.47px;top:597.69px;width:43.47px;height:14.24px;background:rgb(182,5,38)"></div>
<div class="c b" style="left:970.47px;top:599px;width:43.17px;line-height:1;font-size:10.8px;color:#f2f2f6"><span style="display:inline-block;transform:scaleX(1.08)">-686</span></div>
<div class="cell" style="left:1013.65px;top:597.69px;width:43.47px;height:14.24px;background:rgb(182,5,38)"></div>
<div class="c b" style="left:1013.65px;top:599px;width:43.17px;line-height:1;font-size:10.8px;color:#f2f2f6"><span style="display:inline-block;transform:scaleX(1.08)">-687</span></div>
<div class="cell" style="left:1056.82px;top:597.69px;width:43.47px;height:14.24px;background:rgb(182,5,38)"></div>
<div class="c b" style="left:1056.82px;top:599px;width:43.17px;line-height:1;font-size:10.8px;color:#f2f2f6"><span style="display:inline-block;transform:scaleX(1.08)">-687</span></div>
<div class="cell" style="left:236.50px;top:611.62px;width:43.47px;height:14.24px;background:rgb(114,6,37)"></div>
<div class="c b" style="left:236.50px;top:613px;width:43.17px;line-height:1;font-size:10.8px;color:#f2f2f6"><span style="display:inline-block;transform:scaleX(1.08)">-467</span></div>
<div class="cell" style="left:279.68px;top:611.62px;width:43.47px;height:14.24px;background:rgb(121,6,37)"></div>
<div class="c b" style="left:279.68px;top:613px;width:43.17px;line-height:1;font-size:10.8px;color:#f2f2f6"><span style="display:inline-block;transform:scaleX(1.08)">-489</span></div>
<div class="cell" style="left:322.85px;top:611.62px;width:43.47px;height:14.24px;background:rgb(124,6,37)"></div>
<div class="c b" style="left:322.85px;top:613px;width:43.17px;line-height:1;font-size:10.8px;color:#f2f2f6"><span style="display:inline-block;transform:scaleX(1.08)">-500</span></div>
<div class="cell" style="left:366.02px;top:611.62px;width:43.47px;height:14.24px;background:rgb(127,6,37)"></div>
<div class="c b" style="left:366.02px;top:613px;width:43.17px;line-height:1;font-size:10.8px;color:#f2f2f6"><span style="display:inline-block;transform:scaleX(1.08)">-5<span style="margin-left:-0.8px;margin-right:-1.2px">1</span><span style="margin-left:-0.8px;margin-right:-1.2px">1</span></span></div>
<div class="cell" style="left:409.20px;top:611.62px;width:43.47px;height:14.24px;background:rgb(133,6,37)"></div>
<div class="c b" style="left:409.20px;top:613px;width:43.17px;line-height:1;font-size:10.8px;color:#f2f2f6"><span style="display:inline-block;transform:scaleX(1.08)">-532</span></div>
<div class="cell" style="left:452.38px;top:611.62px;width:43.47px;height:14.24px;background:rgb(138,6,37)"></div>
<div class="c b" style="left:452.38px;top:613px;width:43.17px;line-height:1;font-size:10.8px;color:#f2f2f6"><span style="display:inline-block;transform:scaleX(1.08)">-548</span></div>
<div class="cell" style="left:495.55px;top:611.62px;width:43.47px;height:14.24px;background:rgb(143,6,38)"></div>
<div class="c b" style="left:495.55px;top:613px;width:43.17px;line-height:1;font-size:10.8px;color:#f2f2f6"><span style="display:inline-block;transform:scaleX(1.08)">-564</span></div>
<div class="cell" style="left:538.72px;top:611.62px;width:43.47px;height:14.24px;background:rgb(148,6,38)"></div>
<div class="c b" style="left:538.72px;top:613px;width:43.17px;line-height:1;font-size:10.8px;color:#f2f2f6"><span style="display:inline-block;transform:scaleX(1.08)">-580</span></div>
<div class="cell" style="left:581.90px;top:611.62px;width:43.47px;height:14.24px;background:rgb(154,5,38)"></div>
<div class="c b" style="left:581.90px;top:613px;width:43.17px;line-height:1;font-size:10.8px;color:#f2f2f6"><span style="display:inline-block;transform:scaleX(1.08)">-600</span></div>
<div class="cell" style="left:625.08px;top:611.62px;width:43.47px;height:14.24px;background:rgb(157,5,38)"></div>
<div class="c b" style="left:625.08px;top:613px;width:43.17px;line-height:1;font-size:10.8px;color:#f2f2f6"><span style="display:inline-block;transform:scaleX(1.08)">-6<span style="margin-left:-0.8px;margin-right:-1.2px">1</span>0</span></div>
<div class="cell" style="left:668.25px;top:611.62px;width:43.47px;height:14.24px;background:rgb(160,5,38)"></div>
<div class="c b" style="left:668.25px;top:613px;width:43.17px;line-height:1;font-size:10.8px;color:#f2f2f6"><span style="display:inline-block;transform:scaleX(1.08)">-6<span style="margin-left:-0.8px;margin-right:-1.2px">1</span>9</span></div>
<div class="cell" style="left:711.42px;top:611.62px;width:43.47px;height:14.24px;background:rgb(166,5,38)"></div>
<div class="c b" style="left:711.42px;top:613px;width:43.17px;line-height:1;font-size:10.8px;color:#f2f2f6"><span style="display:inline-block;transform:scaleX(1.08)">-638</span></div>
<div class="cell" style="left:754.60px;top:611.62px;width:43.47px;height:14.24px;background:rgb(170,5,38)"></div>
<div class="c b" style="left:754.60px;top:613px;width:43.17px;line-height:1;font-size:10.8px;color:#f2f2f6"><span style="display:inline-block;transform:scaleX(1.08)">-650</span></div>
<div class="cell" style="left:797.77px;top:611.62px;width:43.47px;height:14.24px;background:rgb(174,5,38)"></div>
<div class="c b" style="left:797.77px;top:613px;width:43.17px;line-height:1;font-size:10.8px;color:#f2f2f6"><span style="display:inline-block;transform:scaleX(1.08)">-662</span></div>
<div class="cell" style="left:840.95px;top:611.62px;width:43.47px;height:14.24px;background:rgb(177,5,38)"></div>
<div class="c b" style="left:840.95px;top:613px;width:43.17px;line-height:1;font-size:10.8px;color:#f2f2f6"><span style="display:inline-block;transform:scaleX(1.08)">-672</span></div>
<div class="cell" style="left:884.12px;top:611.62px;width:43.47px;height:14.24px;background:rgb(180,5,38)"></div>
<div class="c b" style="left:884.12px;top:613px;width:43.17px;line-height:1;font-size:10.8px;color:#f2f2f6"><span style="display:inline-block;transform:scaleX(1.08)">-68<span style="margin-left:-0.8px;margin-right:-1.2px">1</span></span></div>
<div class="cell" style="left:927.30px;top:611.62px;width:43.47px;height:14.24px;background:rgb(181,5,38)"></div>
<div class="c b" style="left:927.30px;top:613px;width:43.17px;line-height:1;font-size:10.8px;color:#f2f2f6"><span style="display:inline-block;transform:scaleX(1.08)">-685</span></div>
<div class="cell" style="left:970.47px;top:611.62px;width:43.47px;height:14.24px;background:rgb(182,5,38)"></div>
<div class="c b" style="left:970.47px;top:613px;width:43.17px;line-height:1;font-size:10.8px;color:#f2f2f6"><span style="display:inline-block;transform:scaleX(1.08)">-686</span></div>
<div class="cell" style="left:1013.65px;top:611.62px;width:43.47px;height:14.24px;background:rgb(182,5,38)"></div>
<div class="c b" style="left:1013.65px;top:613px;width:43.17px;line-height:1;font-size:10.8px;color:#f2f2f6"><span style="display:inline-block;transform:scaleX(1.08)">-687</span></div>
<div class="cell" style="left:1056.82px;top:611.62px;width:43.47px;height:14.24px;background:rgb(182,5,38)"></div>
<div class="c b" style="left:1056.82px;top:613px;width:43.17px;line-height:1;font-size:10.8px;color:#f2f2f6"><span style="display:inline-block;transform:scaleX(1.08)">-687</span></div>
<div class="cell" style="left:236.50px;top:625.56px;width:43.47px;height:14.24px;background:rgb(126,6,37)"></div>
<div class="c b" style="left:236.50px;top:627px;width:43.17px;line-height:1;font-size:10.8px;color:#f2f2f6"><span style="display:inline-block;transform:scaleX(1.08)">-506</span></div>
<div class="cell" style="left:279.68px;top:625.56px;width:43.47px;height:14.24px;background:rgb(131,6,37)"></div>
<div class="c b" style="left:279.68px;top:627px;width:43.17px;line-height:1;font-size:10.8px;color:#f2f2f6"><span style="display:inline-block;transform:scaleX(1.08)">-525</span></div>
<div class="cell" style="left:322.85px;top:625.56px;width:43.47px;height:14.24px;background:rgb(134,6,37)"></div>
<div class="c b" style="left:322.85px;top:627px;width:43.17px;line-height:1;font-size:10.8px;color:#f2f2f6"><span style="display:inline-block;transform:scaleX(1.08)">-535</span></div>
<div class="cell" style="left:366.02px;top:625.56px;width:43.47px;height:14.24px;background:rgb(137,6,37)"></div>
<div class="c b" style="left:366.02px;top:627px;width:43.17px;line-height:1;font-size:10.8px;color:#f2f2f6"><span style="display:inline-block;transform:scaleX(1.08)">-545</span></div>
<div class="cell" style="left:409.20px;top:625.56px;width:43.47px;height:14.24px;background:rgb(143,6,38)"></div>
<div class="c b" style="left:409.20px;top:627px;width:43.17px;line-height:1;font-size:10.8px;color:#f2f2f6"><span style="display:inline-block;transform:scaleX(1.08)">-564</span></div>
<div class="cell" style="left:452.38px;top:625.56px;width:43.47px;height:14.24px;background:rgb(147,6,38)"></div>
<div class="c b" style="left:452.38px;top:627px;width:43.17px;line-height:1;font-size:10.8px;color:#f2f2f6"><span style="display:inline-block;transform:scaleX(1.08)">-578</span></div>
<div class="cell" style="left:495.55px;top:625.56px;width:43.47px;height:14.24px;background:rgb(151,6,38)"></div>
<div class="c b" style="left:495.55px;top:627px;width:43.17px;line-height:1;font-size:10.8px;color:#f2f2f6"><span style="display:inline-block;transform:scaleX(1.08)">-59<span style="margin-left:-0.8px;margin-right:-1.2px">1</span></span></div>
<div class="cell" style="left:538.72px;top:625.56px;width:43.47px;height:14.24px;background:rgb(156,5,38)"></div>
<div class="c b" style="left:538.72px;top:627px;width:43.17px;line-height:1;font-size:10.8px;color:#f2f2f6"><span style="display:inline-block;transform:scaleX(1.08)">-605</span></div>
<div class="cell" style="left:581.90px;top:625.56px;width:43.47px;height:14.24px;background:rgb(161,5,38)"></div>
<div class="c b" style="left:581.90px;top:627px;width:43.17px;line-height:1;font-size:10.8px;color:#f2f2f6"><span style="display:inline-block;transform:scaleX(1.08)">-622</span></div>
<div class="cell" style="left:625.08px;top:625.56px;width:43.47px;height:14.24px;background:rgb(163,5,38)"></div>
<div class="c b" style="left:625.08px;top:627px;width:43.17px;line-height:1;font-size:10.8px;color:#f2f2f6"><span style="display:inline-block;transform:scaleX(1.08)">-630</span></div>
<div class="cell" style="left:668.25px;top:625.56px;width:43.47px;height:14.24px;background:rgb(166,5,38)"></div>
<div class="c b" style="left:668.25px;top:627px;width:43.17px;line-height:1;font-size:10.8px;color:#f2f2f6"><span style="display:inline-block;transform:scaleX(1.08)">-638</span></div>
<div class="cell" style="left:711.42px;top:625.56px;width:43.47px;height:14.24px;background:rgb(171,5,38)"></div>
<div class="c b" style="left:711.42px;top:627px;width:43.17px;line-height:1;font-size:10.8px;color:#f2f2f6"><span style="display:inline-block;transform:scaleX(1.08)">-653</span></div>
<div class="cell" style="left:754.60px;top:625.56px;width:43.47px;height:14.24px;background:rgb(174,5,38)"></div>
<div class="c b" style="left:754.60px;top:627px;width:43.17px;line-height:1;font-size:10.8px;color:#f2f2f6"><span style="display:inline-block;transform:scaleX(1.08)">-662</span></div>
<div class="cell" style="left:797.77px;top:625.56px;width:43.47px;height:14.24px;background:rgb(177,5,38)"></div>
<div class="c b" style="left:797.77px;top:627px;width:43.17px;line-height:1;font-size:10.8px;color:#f2f2f6"><span style="display:inline-block;transform:scaleX(1.08)">-67<span style="margin-left:-0.8px;margin-right:-1.2px">1</span></span></div>
<div class="cell" style="left:840.95px;top:625.56px;width:43.47px;height:14.24px;background:rgb(179,5,38)"></div>
<div class="c b" style="left:840.95px;top:627px;width:43.17px;line-height:1;font-size:10.8px;color:#f2f2f6"><span style="display:inline-block;transform:scaleX(1.08)">-678</span></div>
<div class="cell" style="left:884.12px;top:625.56px;width:43.47px;height:14.24px;background:rgb(181,5,38)"></div>
<div class="c b" style="left:884.12px;top:627px;width:43.17px;line-height:1;font-size:10.8px;color:#f2f2f6"><span style="display:inline-block;transform:scaleX(1.08)">-684</span></div>
<div class="cell" style="left:927.30px;top:625.56px;width:43.47px;height:14.24px;background:rgb(182,5,38)"></div>
<div class="c b" style="left:927.30px;top:627px;width:43.17px;line-height:1;font-size:10.8px;color:#f2f2f6"><span style="display:inline-block;transform:scaleX(1.08)">-686</span></div>
<div class="cell" style="left:970.47px;top:625.56px;width:43.47px;height:14.24px;background:rgb(182,5,38)"></div>
<div class="c b" style="left:970.47px;top:627px;width:43.17px;line-height:1;font-size:10.8px;color:#f2f2f6"><span style="display:inline-block;transform:scaleX(1.08)">-687</span></div>
<div class="cell" style="left:1013.65px;top:625.56px;width:43.47px;height:14.24px;background:rgb(182,5,38)"></div>
<div class="c b" style="left:1013.65px;top:627px;width:43.17px;line-height:1;font-size:10.8px;color:#f2f2f6"><span style="display:inline-block;transform:scaleX(1.08)">-687</span></div>
<div class="cell" style="left:1056.82px;top:625.56px;width:43.47px;height:14.24px;background:rgb(182,5,38)"></div>
<div class="c b" style="left:1056.82px;top:627px;width:43.17px;line-height:1;font-size:10.8px;color:#f2f2f6"><span style="display:inline-block;transform:scaleX(1.08)">-687</span></div>
<div style="position:absolute;left:180px;top:499px;width:920px;height:1px;background:repeating-linear-gradient(90deg,rgba(215,215,228,0.8) 0 1px,transparent 1px 2.4px)"></div>
<div style="position:absolute;left:180px;top:669px;width:455px;height:4.7999999999999545px;background:#4a4a5c;border-radius:3px"></div>
<div style="position:absolute;left:180px;top:669px;width:44px;height:4.7999999999999545px;background:rgb(38,158,228);border-radius:3px 0 0 3px"></div>
<div style="position:absolute;left:221.4px;top:662.5px;width:7.799999999999983px;height:16.100000000000023px;background:#8c8c90;border-radius:2px;box-sizing:border-box;border:1px solid #5a5a60"></div>
<svg style="position:absolute;left:622px;top:647px" width="13" height="13" viewBox="0 0 13 13" fill="none" stroke="#b8b8c4" stroke-width="1.2"><circle cx="6.5" cy="6.5" r="5.3"/><circle cx="6.5" cy="6.5" r="2.6"/><path d="M6.5 6.5L11 2"/></svg>
<div style="position:absolute;left:645.6px;top:669px;width:453.69999999999993px;height:4.7999999999999545px;background:#4a4a5c;border-radius:3px"></div>
<div style="position:absolute;left:645.6px;top:669px;width:142.39999999999998px;height:4.7999999999999545px;background:rgb(38,158,228);border-radius:3px 0 0 3px"></div>
<div style="position:absolute;left:784.4px;top:662.5px;width:8.200000000000045px;height:16.100000000000023px;background:#8c8c90;border-radius:2px;box-sizing:border-box;border:1px solid #5a5a60"></div>
<div style="position:absolute;left:942.2px;top:665.5px;width:1.0px;height:2.5px;background:#9090a0;"></div>
<div style="position:absolute;left:1095.2px;top:665.5px;width:1.0px;height:2.5px;background:#9090a0;"></div>
<div style="position:absolute;left:180px;top:693.6px;width:228px;height:22.100000000000023px;background:#04040f;box-sizing:border-box;border:1px solid rgb(72,82,108);border-radius:4px"></div>
<div style="position:absolute;left:180px;top:693.6px;width:113.69999999999999px;height:22.100000000000023px;background:rgb(38,158,228);border-radius:4px 0 0 4px"></div>
<svg style="position:absolute;left:215px;top:700px" width="11.5" height="10" viewBox="0 0 11.5 10"><rect x="0" y="0" width="11.3" height="9.8" rx="1.6" fill="#fff"/><rect x="1.5" y="3.6" width="3.8" height="2.4" fill="#1f5f9a"/><rect x="6.1" y="3.6" width="3.8" height="2.4" fill="#1f5f9a"/><rect x="1.5" y="6.5" width="3.8" height="2" fill="#1f5f9a"/><rect x="6.1" y="6.5" width="3.8" height="2" fill="#1f5f9a"/></svg>
<svg style="position:absolute;left:328px;top:698.5px" width="11" height="11" viewBox="0 0 11 11"><path d="M0.8 0.5v9.7h9.7" fill="none" stroke="#e8e8ee" stroke-width="1.1"/><path d="M2 9.5V6l2-2 2 1.5 2-2.5 2 2V9.5z" fill="#e8e8ee"/></svg>
<div style="position:absolute;left:414.5px;top:693.6px;width:684.8px;height:22.100000000000023px;background:#04040f;box-sizing:border-box;border:1px solid rgb(72,82,108);border-radius:4px"></div>
<div style="position:absolute;left:414.5px;top:693.6px;width:136.10000000000002px;height:22.100000000000023px;background:rgb(38,158,228);border-radius:4px 0 0 4px"></div>
<div style="position:absolute;left:688px;top:694.6px;width:1px;height:20.100000000000023px;background:rgb(72,82,108);"></div>
<div style="position:absolute;left:825.2px;top:694.6px;width:1.0px;height:20.100000000000023px;background:rgb(72,82,108);"></div>
<div style="position:absolute;left:962.5px;top:694.6px;width:1.0px;height:20.100000000000023px;background:rgb(72,82,108);"></div>
<svg style="position:absolute;left:1012.3px;top:702.5px" width="7" height="5" viewBox="0 0 7 5"><path d="M0 0h7L3.5 4.5z" fill="#e8e8ee"/></svg>
<div style="position:absolute;left:0px;top:740.6px;width:1280px;height:59.39999999999998px;background:#010104;"></div>
<svg style="position:absolute;left:179.5px;top:764px;overflow:visible;transform:scale(1.58);transform-origin:0 0" width="27" height="27" viewBox="0 0 27 27"><circle cx="13.50" cy="1.20" r="1.04" fill="rgb(69,78,220)" fill-opacity="0.70"/><circle cx="10.95" cy="3.75" r="1.08" fill="rgb(64,95,225)" fill-opacity="0.74"/><circle cx="8.40" cy="6.30" r="1.12" fill="rgb(59,112,231)" fill-opacity="0.79"/><circle cx="5.85" cy="8.85" r="1.16" fill="rgb(56,130,232)" fill-opacity="0.83"/><circle cx="3.30" cy="11.40" r="1.20" fill="rgb(62,153,219)" fill-opacity="0.88"/><circle cx="0.75" cy="13.95" r="1.24" fill="rgb(69,176,206)" fill-opacity="0.93"/><circle cx="16.05" cy="3.75" r="1.05" fill="rgb(68,80,221)" fill-opacity="0.71"/><circle cx="13.50" cy="6.30" r="1.09" fill="rgb(63,97,226)" fill-opacity="0.75"/><circle cx="10.95" cy="8.85" r="1.12" fill="rgb(58,113,231)" fill-opacity="0.80"/><circle cx="8.40" cy="11.40" r="1.16" fill="rgb(57,132,230)" fill-opacity="0.84"/><circle cx="5.85" cy="13.95" r="1.20" fill="rgb(63,155,217)" fill-opacity="0.89"/><circle cx="3.30" cy="16.50" r="1.24" fill="rgb(70,179,205)" fill-opacity="0.93"/><circle cx="18.60" cy="6.30" r="1.05" fill="rgb(68,82,221)" fill-opacity="0.71"/><circle cx="16.05" cy="8.85" r="1.09" fill="rgb(63,99,227)" fill-opacity="0.76"/><circle cx="13.50" cy="11.40" r="1.13" fill="rgb(57,115,232)" fill-opacity="0.80"/><circle cx="10.95" cy="13.95" r="1.17" fill="rgb(57,135,229)" fill-opacity="0.84"/><circle cx="8.40" cy="16.50" r="1.21" fill="rgb(64,158,216)" fill-opacity="0.89"/><circle cx="5.85" cy="19.05" r="1.24" fill="rgb(70,181,203)" fill-opacity="0.94"/><circle cx="21.15" cy="8.85" r="1.06" fill="rgb(67,84,222)" fill-opacity="0.71"/><circle cx="18.60" cy="11.40" r="1.09" fill="rgb(62,100,227)" fill-opacity="0.76"/><circle cx="16.05" cy="13.95" r="1.13" fill="rgb(57,117,232)" fill-opacity="0.81"/><circle cx="13.50" cy="16.50" r="1.17" fill="rgb(58,137,227)" fill-opacity="0.85"/><circle cx="10.95" cy="19.05" r="1.21" fill="rgb(65,161,215)" fill-opacity="0.90"/><circle cx="8.40" cy="21.60" r="1.25" fill="rgb(71,184,202)" fill-opacity="0.94"/><circle cx="23.70" cy="11.40" r="1.06" fill="rgb(67,86,223)" fill-opacity="0.72"/><circle cx="21.15" cy="13.95" r="1.10" fill="rgb(61,102,228)" fill-opacity="0.77"/><circle cx="18.60" cy="16.50" r="1.14" fill="rgb(56,119,233)" fill-opacity="0.81"/><circle cx="16.05" cy="19.05" r="1.18" fill="rgb(59,140,226)" fill-opacity="0.85"/><circle cx="13.50" cy="21.60" r="1.21" fill="rgb(65,163,213)" fill-opacity="0.90"/><circle cx="10.95" cy="24.15" r="1.25" fill="rgb(72,186,200)" fill-opacity="0.95"/><circle cx="26.25" cy="13.95" r="1.06" fill="rgb(66,87,223)" fill-opacity="0.72"/><circle cx="23.70" cy="16.50" r="1.10" fill="rgb(61,104,228)" fill-opacity="0.77"/><circle cx="21.15" cy="19.05" r="1.14" fill="rgb(56,121,233)" fill-opacity="0.81"/><circle cx="18.60" cy="21.60" r="1.18" fill="rgb(60,143,225)" fill-opacity="0.86"/><circle cx="16.05" cy="24.15" r="1.22" fill="rgb(66,166,212)" fill-opacity="0.91"/><circle cx="13.50" cy="26.70" r="1.26" fill="rgb(72,189,199)" fill-opacity="0.95"/></svg>
<div class="t b" style="left:54.00px;top:4.00px;font-size:14.06px;font-weight:bold;color:#fff;transform:scaleX(0.9388);transform-origin:0 0;">Chrome</div>
<div class="t" style="left:124.63px;top:4.00px;font-size:14.06px;color:#fff;transform:scaleX(0.9678);transform-origin:0 0;">Datei</div>
<div class="t" style="left:176.02px;top:4.00px;font-size:14.06px;color:#fff;transform:scaleX(0.9829);transform-origin:0 0;">Bearbeiten</div>
<div class="t" style="left:262.02px;top:4.00px;font-size:14.06px;color:#fff;transform:scaleX(0.9821);transform-origin:0 0;">Darstellung</div>
<div class="t" style="left:353.00px;top:4.00px;font-size:14.06px;color:#fff;transform:scaleX(0.9583);transform-origin:0 0;">Verlauf</div>
<div class="t" style="left:415.03px;top:4.00px;font-size:14.06px;color:#fff;transform:scaleX(0.9732);transform-origin:0 0;">Lesezeichen</div>
<div class="t" style="left:511.03px;top:4.00px;font-size:14.06px;color:#fff;transform:scaleX(0.9743);transform-origin:0 0;">Profile</div>
<div class="t" style="left:571.00px;top:4.00px;font-size:14.06px;color:#fff;transform:scaleX(0.9196);transform-origin:0 0;">Tab</div>
<div class="t" style="left:612.04px;top:4.00px;font-size:14.06px;color:#fff;transform:scaleX(0.9586);transform-origin:0 0;">Fenster</div>
<div class="t" style="left:677.97px;top:4.00px;font-size:14.06px;color:#fff;transform:scaleX(1.0261);transform-origin:0 0;">Hilfe</div>
<div class="t" style="left:886.06px;top:4.00px;font-size:14.06px;color:#fff;transform:scaleX(0.9372);transform-origin:0 0;">17 °C</div>
<div class="t" style="left:1015.00px;top:4.00px;font-size:14.06px;color:#fff;transform:scaleX(0.8564);transform-origin:0 0;">80 %</div>
<div class="t" style="left:1123.05px;top:4.00px;font-size:14.06px;color:#fff;transform:scaleX(0.9451);transform-origin:0 0;">Do. 21. Aug.</div>
<div class="t" style="left:1204.98px;top:4.00px;font-size:14.06px;color:#fff;transform:scaleX(1.0210);transform-origin:0 0;">10:25:13</div>
<div class="t b" style="left:215.00px;top:34.00px;font-size:18.12px;font-weight:bold;color:#fff;transform:scaleX(1.0258);transform-origin:0 0;">Option</div>
<div class="t" style="left:274.75px;top:34.00px;font-size:18.12px;color:#e0e0ea;transform:scaleX(1.1030);transform-origin:0 0;-webkit-text-stroke:0;">Strat</div>
<div class="t" style="left:541.40px;top:37.00px;font-size:13.77px;color:#e4e4ec;transform:scaleX(0.9956);transform-origin:0 0;">Build</div>
<div class="t" style="left:614.20px;top:37.00px;font-size:13.77px;color:#e4e4ec;transform:scaleX(0.9670);transform-origin:0 0;">Optimize</div>
<div class="t" style="left:692.22px;top:37.00px;font-size:13.77px;color:#e4e4ec;transform:scaleX(0.9786);transform-origin:0 0;">Flow</div>
<div class="t" style="left:839.00px;top:37.00px;font-size:13.77px;color:#e4e4ec;transform:scaleX(0.9744);transform-origin:0 0;">Tutorials</div>
<div class="t" style="left:914.98px;top:37.00px;font-size:13.77px;color:#e4e4ec;transform:scaleX(1.0242);transform-origin:0 0;">Blog</div>
<div class="t" style="left:967.49px;top:37.00px;font-size:13.77px;color:#e4e4ec;transform:scaleX(1.0114);transform-origin:0 0;">Log In</div>
<div class="t b" style="left:1039.50px;top:37.00px;font-size:13.04px;font-weight:bold;color:#111;transform:scaleX(0.8909);transform-origin:0 0;">Start Trial</div>
<div class="t b" style="left:179.46px;top:70.00px;font-size:17.10px;font-weight:bold;color:#f0f0f4;transform:scaleX(1.0445);transform-origin:0 0;">Long Call</div>
<div class="t" style="left:185.58px;top:99.00px;font-size:12.32px;color:#e8e8ee;transform:scaleX(0.9188);transform-origin:0 0;">PANW</div>
<div class="t" style="left:243.50px;top:97.00px;font-size:14.49px;color:#f0f0f4;transform:scaleX(1.0133);transform-origin:0 0;">$184.43</div>
<div class="t" style="left:303.50px;top:96.00px;font-size:9.71px;color:#c8c8d4;transform:scaleX(1.0041);transform-origin:0 0;">0.00%</div>
<div class="t" style="left:303.50px;top:104.00px;font-size:9.42px;color:#c8c8d4;transform:scaleX(1.0263);transform-origin:0 0;">$0</div>
<div class="t" style="left:356.59px;top:99.00px;font-size:12.75px;color:#8e8ea0;transform:scaleX(0.9083);transform-origin:0 0;">Delayed</div>
<div class="t b" style="left:876.00px;top:72.00px;font-size:14.49px;font-weight:bold;color:#fff;transform:scaleX(0.8000);transform-origin:0 0;">)</div>
<div class="t b" style="left:914.50px;top:73.00px;font-size:12.32px;font-weight:bold;color:#fff;transform:scaleX(0.8448);transform-origin:0 0;">Save Trade</div>
<div class="t b" style="left:1001.00px;top:73.00px;font-size:12.32px;font-weight:bold;color:#fff;transform:scaleX(0.8363);transform-origin:0 0;">Historical Chart</div>
<div class="t" style="left:442.50px;top:86.00px;font-size:17.39px;color:#fff;transform:scaleX(0.9063);transform-origin:0 0;">Zum Beenden des Vollbildmodus</div>
<div class="t" style="left:687.50px;top:85.00px;font-size:16.20px;color:#fff;transform:scaleX(0.9762);transform-origin:0 0;">esc</div>
<div class="t" style="left:725.00px;top:86.00px;font-size:17.39px;color:#fff;transform:scaleX(0.9353);transform-origin:0 0;">gedrückt halten</div>
<div class="t" style="left:180.70px;top:124.00px;font-size:11.74px;color:#e4e4ec;transform:scaleX(0.9192);transform-origin:0 0;">EXPIRATION:</div>
<div class="t b" style="left:252.60px;top:125.00px;font-size:11.90px;font-weight:bold;color:#fff;transform:scaleX(0.9246);transform-origin:0 0;">57d</div>
<div class="t" style="left:180.70px;top:184.00px;font-size:12.03px;color:#e4e4ec;transform:scaleX(0.8686);transform-origin:0 0;">STRIKE:</div>
<div class="t" style="left:624.75px;top:207.00px;font-size:11.20px;color:#c8c8d4;">PA</div>
<div class="t b" style="left:641.00px;top:206.00px;font-size:12.68px;font-weight:bold;color:#f4fff4;transform:scaleX(0.9289);transform-origin:0 0;">190C</div>
<div class="t" style="left:246.00px;top:282.00px;font-size:11.01px;color:#e4e4ec;transform:scaleX(1.0130);transform-origin:0 0;">NET DEBIT:</div>
<div class="t b" style="left:262.40px;top:294.00px;font-size:13.04px;font-weight:bold;color:#fff;transform:scaleX(0.9305);transform-origin:0 0;">$687.50</div>
<div class="t" style="left:428.00px;top:282.00px;font-size:11.01px;color:#e4e4ec;transform:scaleX(1.0128);transform-origin:0 0;">MAX LOSS:</div>
<div class="t b" style="left:443.00px;top:294.00px;font-size:13.04px;font-weight:bold;color:#fff;transform:scaleX(0.9177);transform-origin:0 0;">$687.50</div>
<div class="t" style="left:604.50px;top:282.00px;font-size:11.01px;color:#e4e4ec;transform:scaleX(1.0304);transform-origin:0 0;">MAX PROFIT:</div>
<div class="t b" style="left:628.00px;top:294.00px;font-size:13.04px;font-weight:bold;color:#fff;transform:scaleX(0.8714);transform-origin:0 0;">Infinite</div>
<div class="t" style="left:766.40px;top:282.00px;font-size:11.01px;color:#e4e4ec;transform:scaleX(1.0059);transform-origin:0 0;">CHANCE OF PROFIT:</div>
<div class="t" style="left:825.30px;top:295.00px;font-size:11.60px;color:#fff;transform:scaleX(0.8700);transform-origin:0 0;">%</div>
<div class="t" style="left:968.80px;top:282.00px;font-size:11.01px;color:#e4e4ec;transform:scaleX(0.9780);transform-origin:0 0;">BREAKEVEN:</div>
<div class="t" style="left:946.70px;top:294.00px;font-size:13.04px;color:#e8e8ee;transform:scaleX(0.9209);transform-origin:0 0;">Above</div>
<div class="t b" style="left:983.80px;top:294.00px;font-size:13.04px;font-weight:bold;color:#fff;transform:scaleX(0.9006);transform-origin:0 0;">$196.88</div>
<div class="t" style="left:1030.00px;top:294.00px;font-size:13.00px;color:#e8e8ee;transform:scaleX(0.9286);transform-origin:0 0;">(+6.7%)</div>
<div class="t" style="left:180.70px;top:649.00px;font-size:11.88px;color:#e4e4ec;transform:scaleX(0.8888);transform-origin:0 0;">RANGE:</div>
<div class="t b" style="left:225.60px;top:649.00px;font-size:11.88px;font-weight:bold;color:#fff;transform:scaleX(1.0110);transform-origin:0 0;">±8.5%</div>
<div class="t" style="left:644.62px;top:649.00px;font-size:11.59px;color:#e4e4ec;transform:scaleX(0.9838);transform-origin:0 0;">IMPLIED VOLATILITY:</div>
<div class="t b" style="left:763.10px;top:649.00px;font-size:11.59px;font-weight:bold;color:#fff;transform:scaleX(1.0389);transform-origin:0 0;">29.8%</div>
<div class="t" style="left:784.00px;top:677.00px;font-size:9.00px;color:#c0c0cc;">×1</div>
<div class="t" style="left:937.00px;top:677.00px;font-size:9.00px;color:#c0c0cc;">×2</div>
<div class="t" style="left:1090.00px;top:677.00px;font-size:9.00px;color:#c0c0cc;">×3</div>
<div class="t b" style="left:230.00px;top:699.00px;font-size:12.75px;font-weight:bold;color:#fff;transform:scaleX(0.8989);transform-origin:0 0;">Table</div>
<div class="t" style="left:342.50px;top:699.00px;font-size:12.60px;color:#e8e8ee;transform:scaleX(0.9115);transform-origin:0 0;">Graph</div>
<div class="t b" style="left:444.80px;top:699.00px;font-size:12.60px;font-weight:bold;color:#fff;transform:scaleX(0.9007);transform-origin:0 0;">Profit / Loss $</div>
<div class="t" style="left:580.04px;top:699.00px;font-size:12.60px;color:#e8e8ee;transform:scaleX(0.9626);transform-origin:0 0;">Profit / Loss %</div>
<div class="t" style="left:718.00px;top:699.00px;font-size:12.75px;color:#e8e8ee;transform:scaleX(0.9316);transform-origin:0 0;">Contract Value</div>
<div class="t" style="left:856.70px;top:699.00px;font-size:12.60px;color:#e8e8ee;transform:scaleX(0.9239);transform-origin:0 0;">% of Max Risk</div>
<div class="t" style="left:1021.43px;top:699.00px;font-size:12.75px;color:#e8e8ee;transform:scaleX(0.9693);transform-origin:0 0;">More</div>
<div class="t b" style="left:228.19px;top:774.00px;font-size:24.78px;font-weight:bold;color:#fff;transform:scaleX(1.1102);transform-origin:0 0;">Option</div>
<div class="t" style="left:316.81px;top:774.00px;font-size:24.78px;color:#f0f0f4;transform:scaleX(1.1902);transform-origin:0 0;">Strat</div>
<div class="t" style="left:855.90px;top:766.00px;font-size:12.30px;color:#e8e8ee;transform:scaleX(1.0390);transform-origin:0 0;">Strategy Builder</div>
<div class="t" style="left:991.83px;top:766.00px;font-size:12.32px;color:#e8e8ee;transform:scaleX(0.9725);transform-origin:0 0;">FAQ</div>
<div class="t" style="left:855.90px;top:791.00px;font-size:12.30px;color:#e8e8ee;transform:scaleX(1.0430);transform-origin:0 0;">Strategy Optimizer</div>
<div class="t" style="left:991.74px;top:791.00px;font-size:12.30px;color:#e8e8ee;transform:scaleX(1.0600);transform-origin:0 0;">Blog</div>
</body></html>
